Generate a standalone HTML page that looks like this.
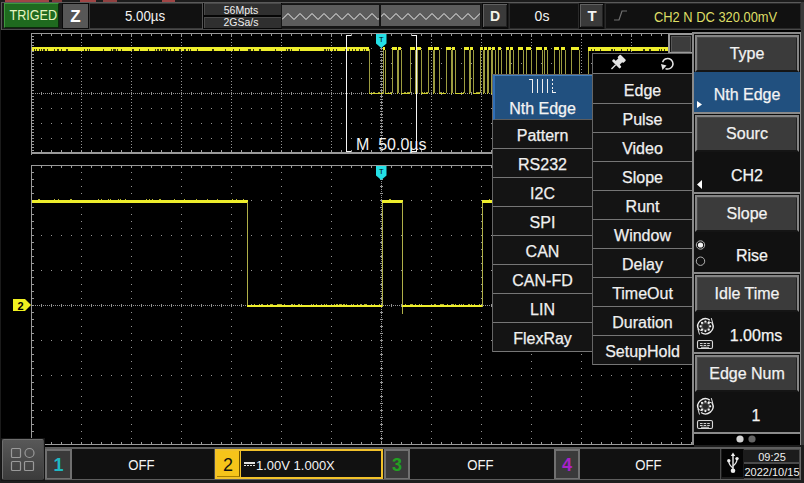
<!DOCTYPE html>
<html><head><meta charset="utf-8">
<style>
*{margin:0;padding:0;box-sizing:border-box;}
html,body{width:804px;height:483px;overflow:hidden;background:#000;font-family:"Liberation Sans", sans-serif;}
.a{position:absolute;}
.t{position:absolute;white-space:nowrap;line-height:1;}
.s{-webkit-text-stroke:0.25px currentColor;}
.btn{position:absolute;background:#3c3c3c;border:1px solid #1a1a1a;box-shadow:inset 1px 1px 0 #6a6a6a, inset -1px -1px 0 #2a2a2a;}
.mbtn{position:absolute;left:695px;width:104px;height:37px;background:#3b3b3b;border:2px solid #858585;border-bottom:2px solid #151515;box-shadow:inset 1px 1px 0 #4a4a4a, inset -1px 0 0 #222;color:#f2f2f2;font-size:16px;text-align:center;line-height:34px;-webkit-text-stroke:0.25px currentColor;}
.mval{position:absolute;left:694px;width:106px;height:40px;background:#111;color:#f2f2f2;font-size:16px;text-align:center;}
.row{position:absolute;height:29px;background:#141414;border-bottom:1px solid #767676;color:#f0f0f0;font-size:16px;text-align:center;line-height:32px;-webkit-text-stroke:0.25px currentColor;}
</style></head><body>
<!-- top bar -->
<div class="a" style="left:0;top:0;width:804px;height:30px;background:#1c1c1c;"></div>
<div class="a" style="left:5px;top:0;width:44px;height:2px;background:#a04545;"></div>
<div class="a" style="left:52px;top:0;width:10px;height:2px;background:#803a3a;"></div>
<div class="a" style="left:80px;top:0;width:16px;height:2px;background:#a04545;"></div>
<div class="a" style="left:103px;top:0;width:14px;height:2px;background:#904040;"></div>
<div class="a" style="left:162px;top:0;width:13px;height:2px;background:#a04545;"></div>
<div class="a" style="left:0;top:2px;width:804px;height:1px;background:#5a5a5a;"></div>
<div class="a" style="left:0;top:29px;width:804px;height:1px;background:#4a4a4a;"></div>
<div class="a" style="left:0;top:2px;width:1px;height:481px;background:#1a1a1a;"></div>
<div class="a" style="left:1px;top:2px;width:1px;height:28px;background:#5a5a5a;"></div>
<div class="a" style="left:801px;top:2px;width:3px;height:481px;background:#3a3a3a;"></div>
<!-- TRIGED -->
<div class="a" style="left:4px;top:3px;width:55px;height:25px;background:#1f6a1f;border-top:1px solid #3d9a3d;border-left:1px solid #3d9a3d;border-right:1px solid #0c2a0c;border-bottom:1px solid #0c2a0c;"></div>
<div class="t" style="left:7px;top:8px;width:50px;text-align:center;color:#e6f6c0;font-size:14px;transform:scaleX(0.9);">TRIGED</div>
<!-- Z -->
<div class="a" style="left:62px;top:3px;width:27px;height:26px;background:#575757;border:1px solid #0a0a0a;"></div>
<div class="t" style="left:62px;top:8px;width:27px;text-align:center;color:#fff;font-size:17px;font-weight:bold;">Z</div>
<!-- timebase -->
<div class="a" style="left:89px;top:3px;width:114px;height:26px;background:#111;border:1px solid #3a3a3a;"></div>
<div class="t" style="left:88px;top:9px;width:114px;text-align:center;color:#f4f4f4;font-size:14px;transform:scaleX(0.95);">5.00µs</div>
<!-- mpts -->
<div class="a" style="left:202px;top:3px;width:80px;height:26px;background:#050505;border-left:1px solid #555;"></div>
<div class="a" style="left:204px;top:3px;width:77px;height:12px;background:#2f2f2f;border-top:1px solid #4a4a4a;border-left:1px solid #4a4a4a;"></div>
<div class="a" style="left:204px;top:17px;width:77px;height:11px;background:#2f2f2f;border-top:1px solid #4a4a4a;border-left:1px solid #4a4a4a;"></div>
<div class="t" style="left:202.5px;top:5px;width:77px;text-align:center;color:#f0f0f0;font-size:10.5px;">56Mpts</div>
<div class="t" style="left:202.5px;top:17px;width:77px;text-align:center;color:#f0f0f0;font-size:10.5px;">2GSa/s</div>
<!-- zigzag -->
<div class="a" style="left:281px;top:4px;width:200px;height:24px;background:#141414;"></div>
<div class="a" style="left:282px;top:5px;width:97px;height:21px;background:#5c5c5c;"></div>
<div class="a" style="left:381px;top:5px;width:99px;height:21px;background:#5c5c5c;"></div>
<svg class="a" style="left:0;top:0" width="804" height="30">
<clipPath id="z1"><rect x="282" y="5" width="97" height="21"/></clipPath>
<clipPath id="z2"><rect x="381" y="5" width="99" height="21"/></clipPath>
<polyline clip-path="url(#z1)" points="282.0,19.5 288.0,13.5 294.0,19.5 300.0,13.5 306.0,19.5 312.0,13.5 318.0,19.5 324.0,13.5 330.0,19.5 336.0,13.5 342.0,19.5 348.0,13.5 354.0,19.5 360.0,13.5 366.0,19.5 372.0,13.5 378.0,19.5 384.0,13.5 390.0,19.5 396.0,13.5" fill="none" stroke="#f0f0f0" stroke-width="1"/>
<polyline clip-path="url(#z2)" points="282.0,19.5 288.0,13.5 294.0,19.5 300.0,13.5 306.0,19.5 312.0,13.5 318.0,19.5 324.0,13.5 330.0,19.5 336.0,13.5 342.0,19.5 348.0,13.5 354.0,19.5 360.0,13.5 366.0,19.5 372.0,13.5 378.0,19.5 384.0,13.5 390.0,19.5 396.0,13.5 402.0,19.5 408.0,13.5 414.0,19.5 420.0,13.5 426.0,19.5 432.0,13.5 438.0,19.5 444.0,13.5 450.0,19.5 456.0,13.5 462.0,19.5 468.0,13.5 474.0,19.5 480.0,13.5 486.0,19.5 492.0,13.5" fill="none" stroke="#f0f0f0" stroke-width="1"/>
<polyline points="614,20 619,20 622,11 627,11" fill="none" stroke="#6a6a6a" stroke-width="1.2"/>
</svg>
<!-- D -->
<div class="a" style="left:482px;top:3px;width:26px;height:26px;background:#0a0a0a;"></div>
<div class="a" style="left:483px;top:4px;width:24px;height:23px;background:#3a3a3a;box-shadow:inset 1px 1px 0 #606060, inset -1px -1px 0 #222;"></div>
<div class="t" style="left:482px;top:8.5px;width:26px;text-align:center;color:#f4f4e8;font-size:14px;font-weight:bold;">D</div>
<!-- 0s -->
<div class="a" style="left:509px;top:3px;width:70px;height:26px;background:#111;border:1px solid #2a2a2a;"></div>
<div class="t" style="left:507px;top:9px;width:70px;text-align:center;color:#f4f4f4;font-size:14px;">0s</div>
<!-- T -->
<div class="a" style="left:579px;top:3px;width:25px;height:26px;background:#0a0a0a;"></div>
<div class="a" style="left:580px;top:4px;width:23px;height:23px;background:#3a3a3a;box-shadow:inset 1px 1px 0 #606060, inset -1px -1px 0 #222;"></div>
<div class="t" style="left:579.5px;top:8px;width:25px;text-align:center;color:#f4f4f4;font-size:15px;font-weight:bold;">T</div>
<!-- trigger info -->
<div class="a" style="left:605px;top:3px;width:196px;height:26px;background:#111;border:1px solid #2a2a2a;"></div>
<svg class="a" style="left:0;top:0" width="804" height="30">
<polyline points="614,20 619,20 622,11 627,11" fill="none" stroke="#707070" stroke-width="1.2"/>
</svg>
<div class="t" style="left:654px;top:9.5px;color:#dede66;font-size:14px;transform:scaleX(0.92);transform-origin:0 0;">CH2 N DC 320.00mV</div>

<!-- grids & traces -->
<svg class="a" style="left:0;top:0" width="804" height="483" shape-rendering="crispEdges">
<rect x="31" y="33" width="1" height="122" fill="#9a9a9a"/>
<rect x="31" y="33" width="700" height="1" fill="#9a9a9a"/>
<rect x="31" y="152" width="700" height="2" fill="#9a9a9a"/>
<rect x="41" y="34" width="1" height="2" fill="#9a9a9a"/>
<rect x="41" y="150" width="1" height="2" fill="#9a9a9a"/>
<rect x="51" y="34" width="1" height="2" fill="#9a9a9a"/>
<rect x="51" y="150" width="1" height="2" fill="#9a9a9a"/>
<rect x="61" y="34" width="1" height="2" fill="#9a9a9a"/>
<rect x="61" y="150" width="1" height="2" fill="#9a9a9a"/>
<rect x="71" y="34" width="1" height="2" fill="#9a9a9a"/>
<rect x="71" y="150" width="1" height="2" fill="#9a9a9a"/>
<rect x="81" y="34" width="1" height="2" fill="#9a9a9a"/>
<rect x="81" y="150" width="1" height="2" fill="#9a9a9a"/>
<rect x="91" y="34" width="1" height="2" fill="#9a9a9a"/>
<rect x="91" y="150" width="1" height="2" fill="#9a9a9a"/>
<rect x="101" y="34" width="1" height="2" fill="#9a9a9a"/>
<rect x="101" y="150" width="1" height="2" fill="#9a9a9a"/>
<rect x="111" y="34" width="1" height="2" fill="#9a9a9a"/>
<rect x="111" y="150" width="1" height="2" fill="#9a9a9a"/>
<rect x="121" y="34" width="1" height="2" fill="#9a9a9a"/>
<rect x="121" y="150" width="1" height="2" fill="#9a9a9a"/>
<rect x="131" y="34" width="1" height="2" fill="#9a9a9a"/>
<rect x="131" y="150" width="1" height="2" fill="#9a9a9a"/>
<rect x="141" y="34" width="1" height="2" fill="#9a9a9a"/>
<rect x="141" y="150" width="1" height="2" fill="#9a9a9a"/>
<rect x="151" y="34" width="1" height="2" fill="#9a9a9a"/>
<rect x="151" y="150" width="1" height="2" fill="#9a9a9a"/>
<rect x="161" y="34" width="1" height="2" fill="#9a9a9a"/>
<rect x="161" y="150" width="1" height="2" fill="#9a9a9a"/>
<rect x="171" y="34" width="1" height="2" fill="#9a9a9a"/>
<rect x="171" y="150" width="1" height="2" fill="#9a9a9a"/>
<rect x="181" y="34" width="1" height="2" fill="#9a9a9a"/>
<rect x="181" y="150" width="1" height="2" fill="#9a9a9a"/>
<rect x="191" y="34" width="1" height="2" fill="#9a9a9a"/>
<rect x="191" y="150" width="1" height="2" fill="#9a9a9a"/>
<rect x="201" y="34" width="1" height="2" fill="#9a9a9a"/>
<rect x="201" y="150" width="1" height="2" fill="#9a9a9a"/>
<rect x="211" y="34" width="1" height="2" fill="#9a9a9a"/>
<rect x="211" y="150" width="1" height="2" fill="#9a9a9a"/>
<rect x="221" y="34" width="1" height="2" fill="#9a9a9a"/>
<rect x="221" y="150" width="1" height="2" fill="#9a9a9a"/>
<rect x="231" y="34" width="1" height="2" fill="#9a9a9a"/>
<rect x="231" y="150" width="1" height="2" fill="#9a9a9a"/>
<rect x="241" y="34" width="1" height="2" fill="#9a9a9a"/>
<rect x="241" y="150" width="1" height="2" fill="#9a9a9a"/>
<rect x="251" y="34" width="1" height="2" fill="#9a9a9a"/>
<rect x="251" y="150" width="1" height="2" fill="#9a9a9a"/>
<rect x="261" y="34" width="1" height="2" fill="#9a9a9a"/>
<rect x="261" y="150" width="1" height="2" fill="#9a9a9a"/>
<rect x="271" y="34" width="1" height="2" fill="#9a9a9a"/>
<rect x="271" y="150" width="1" height="2" fill="#9a9a9a"/>
<rect x="281" y="34" width="1" height="2" fill="#9a9a9a"/>
<rect x="281" y="150" width="1" height="2" fill="#9a9a9a"/>
<rect x="291" y="34" width="1" height="2" fill="#9a9a9a"/>
<rect x="291" y="150" width="1" height="2" fill="#9a9a9a"/>
<rect x="301" y="34" width="1" height="2" fill="#9a9a9a"/>
<rect x="301" y="150" width="1" height="2" fill="#9a9a9a"/>
<rect x="311" y="34" width="1" height="2" fill="#9a9a9a"/>
<rect x="311" y="150" width="1" height="2" fill="#9a9a9a"/>
<rect x="321" y="34" width="1" height="2" fill="#9a9a9a"/>
<rect x="321" y="150" width="1" height="2" fill="#9a9a9a"/>
<rect x="331" y="34" width="1" height="2" fill="#9a9a9a"/>
<rect x="331" y="150" width="1" height="2" fill="#9a9a9a"/>
<rect x="341" y="34" width="1" height="2" fill="#9a9a9a"/>
<rect x="341" y="150" width="1" height="2" fill="#9a9a9a"/>
<rect x="351" y="34" width="1" height="2" fill="#9a9a9a"/>
<rect x="351" y="150" width="1" height="2" fill="#9a9a9a"/>
<rect x="361" y="34" width="1" height="2" fill="#9a9a9a"/>
<rect x="361" y="150" width="1" height="2" fill="#9a9a9a"/>
<rect x="371" y="34" width="1" height="2" fill="#9a9a9a"/>
<rect x="371" y="150" width="1" height="2" fill="#9a9a9a"/>
<rect x="381" y="34" width="1" height="2" fill="#9a9a9a"/>
<rect x="381" y="150" width="1" height="2" fill="#9a9a9a"/>
<rect x="391" y="34" width="1" height="2" fill="#9a9a9a"/>
<rect x="391" y="150" width="1" height="2" fill="#9a9a9a"/>
<rect x="401" y="34" width="1" height="2" fill="#9a9a9a"/>
<rect x="401" y="150" width="1" height="2" fill="#9a9a9a"/>
<rect x="411" y="34" width="1" height="2" fill="#9a9a9a"/>
<rect x="411" y="150" width="1" height="2" fill="#9a9a9a"/>
<rect x="421" y="34" width="1" height="2" fill="#9a9a9a"/>
<rect x="421" y="150" width="1" height="2" fill="#9a9a9a"/>
<rect x="431" y="34" width="1" height="2" fill="#9a9a9a"/>
<rect x="431" y="150" width="1" height="2" fill="#9a9a9a"/>
<rect x="441" y="34" width="1" height="2" fill="#9a9a9a"/>
<rect x="441" y="150" width="1" height="2" fill="#9a9a9a"/>
<rect x="451" y="34" width="1" height="2" fill="#9a9a9a"/>
<rect x="451" y="150" width="1" height="2" fill="#9a9a9a"/>
<rect x="461" y="34" width="1" height="2" fill="#9a9a9a"/>
<rect x="461" y="150" width="1" height="2" fill="#9a9a9a"/>
<rect x="471" y="34" width="1" height="2" fill="#9a9a9a"/>
<rect x="471" y="150" width="1" height="2" fill="#9a9a9a"/>
<rect x="481" y="34" width="1" height="2" fill="#9a9a9a"/>
<rect x="481" y="150" width="1" height="2" fill="#9a9a9a"/>
<rect x="491" y="34" width="1" height="2" fill="#9a9a9a"/>
<rect x="491" y="150" width="1" height="2" fill="#9a9a9a"/>
<rect x="501" y="34" width="1" height="2" fill="#9a9a9a"/>
<rect x="501" y="150" width="1" height="2" fill="#9a9a9a"/>
<rect x="511" y="34" width="1" height="2" fill="#9a9a9a"/>
<rect x="511" y="150" width="1" height="2" fill="#9a9a9a"/>
<rect x="521" y="34" width="1" height="2" fill="#9a9a9a"/>
<rect x="521" y="150" width="1" height="2" fill="#9a9a9a"/>
<rect x="531" y="34" width="1" height="2" fill="#9a9a9a"/>
<rect x="531" y="150" width="1" height="2" fill="#9a9a9a"/>
<rect x="541" y="34" width="1" height="2" fill="#9a9a9a"/>
<rect x="541" y="150" width="1" height="2" fill="#9a9a9a"/>
<rect x="551" y="34" width="1" height="2" fill="#9a9a9a"/>
<rect x="551" y="150" width="1" height="2" fill="#9a9a9a"/>
<rect x="561" y="34" width="1" height="2" fill="#9a9a9a"/>
<rect x="561" y="150" width="1" height="2" fill="#9a9a9a"/>
<rect x="571" y="34" width="1" height="2" fill="#9a9a9a"/>
<rect x="571" y="150" width="1" height="2" fill="#9a9a9a"/>
<rect x="581" y="34" width="1" height="2" fill="#9a9a9a"/>
<rect x="581" y="150" width="1" height="2" fill="#9a9a9a"/>
<rect x="591" y="34" width="1" height="2" fill="#9a9a9a"/>
<rect x="591" y="150" width="1" height="2" fill="#9a9a9a"/>
<rect x="601" y="34" width="1" height="2" fill="#9a9a9a"/>
<rect x="601" y="150" width="1" height="2" fill="#9a9a9a"/>
<rect x="611" y="34" width="1" height="2" fill="#9a9a9a"/>
<rect x="611" y="150" width="1" height="2" fill="#9a9a9a"/>
<rect x="621" y="34" width="1" height="2" fill="#9a9a9a"/>
<rect x="621" y="150" width="1" height="2" fill="#9a9a9a"/>
<rect x="631" y="34" width="1" height="2" fill="#9a9a9a"/>
<rect x="631" y="150" width="1" height="2" fill="#9a9a9a"/>
<rect x="641" y="34" width="1" height="2" fill="#9a9a9a"/>
<rect x="641" y="150" width="1" height="2" fill="#9a9a9a"/>
<rect x="651" y="34" width="1" height="2" fill="#9a9a9a"/>
<rect x="651" y="150" width="1" height="2" fill="#9a9a9a"/>
<rect x="661" y="34" width="1" height="2" fill="#9a9a9a"/>
<rect x="661" y="150" width="1" height="2" fill="#9a9a9a"/>
<rect x="32" y="36" width="2" height="1" fill="#9a9a9a"/>
<rect x="32" y="39" width="2" height="1" fill="#9a9a9a"/>
<rect x="32" y="42" width="2" height="1" fill="#9a9a9a"/>
<rect x="32" y="45" width="2" height="1" fill="#9a9a9a"/>
<rect x="32" y="48" width="2" height="1" fill="#9a9a9a"/>
<rect x="32" y="51" width="2" height="1" fill="#9a9a9a"/>
<rect x="32" y="54" width="2" height="1" fill="#9a9a9a"/>
<rect x="32" y="57" width="2" height="1" fill="#9a9a9a"/>
<rect x="32" y="60" width="2" height="1" fill="#9a9a9a"/>
<rect x="32" y="63" width="2" height="1" fill="#9a9a9a"/>
<rect x="32" y="66" width="2" height="1" fill="#9a9a9a"/>
<rect x="32" y="69" width="2" height="1" fill="#9a9a9a"/>
<rect x="32" y="72" width="2" height="1" fill="#9a9a9a"/>
<rect x="32" y="75" width="2" height="1" fill="#9a9a9a"/>
<rect x="32" y="78" width="2" height="1" fill="#9a9a9a"/>
<rect x="32" y="81" width="2" height="1" fill="#9a9a9a"/>
<rect x="32" y="84" width="2" height="1" fill="#9a9a9a"/>
<rect x="32" y="87" width="2" height="1" fill="#9a9a9a"/>
<rect x="32" y="90" width="2" height="1" fill="#9a9a9a"/>
<rect x="32" y="93" width="2" height="1" fill="#9a9a9a"/>
<rect x="32" y="96" width="2" height="1" fill="#9a9a9a"/>
<rect x="32" y="99" width="2" height="1" fill="#9a9a9a"/>
<rect x="32" y="102" width="2" height="1" fill="#9a9a9a"/>
<rect x="32" y="105" width="2" height="1" fill="#9a9a9a"/>
<rect x="32" y="108" width="2" height="1" fill="#9a9a9a"/>
<rect x="32" y="111" width="2" height="1" fill="#9a9a9a"/>
<rect x="32" y="114" width="2" height="1" fill="#9a9a9a"/>
<rect x="32" y="117" width="2" height="1" fill="#9a9a9a"/>
<rect x="32" y="120" width="2" height="1" fill="#9a9a9a"/>
<rect x="32" y="123" width="2" height="1" fill="#9a9a9a"/>
<rect x="32" y="126" width="2" height="1" fill="#9a9a9a"/>
<rect x="32" y="129" width="2" height="1" fill="#9a9a9a"/>
<rect x="32" y="132" width="2" height="1" fill="#9a9a9a"/>
<rect x="32" y="135" width="2" height="1" fill="#9a9a9a"/>
<rect x="32" y="138" width="2" height="1" fill="#9a9a9a"/>
<rect x="32" y="141" width="2" height="1" fill="#9a9a9a"/>
<rect x="32" y="144" width="2" height="1" fill="#9a9a9a"/>
<rect x="32" y="147" width="2" height="1" fill="#9a9a9a"/>
<rect x="32" y="150" width="2" height="1" fill="#9a9a9a"/>
<rect x="41" y="48" width="1" height="1" fill="#959595"/>
<rect x="51" y="48" width="1" height="1" fill="#959595"/>
<rect x="61" y="48" width="1" height="1" fill="#959595"/>
<rect x="71" y="48" width="1" height="1" fill="#959595"/>
<rect x="81" y="48" width="1" height="1" fill="#959595"/>
<rect x="91" y="48" width="1" height="1" fill="#959595"/>
<rect x="101" y="48" width="1" height="1" fill="#959595"/>
<rect x="111" y="48" width="1" height="1" fill="#959595"/>
<rect x="121" y="48" width="1" height="1" fill="#959595"/>
<rect x="131" y="48" width="1" height="1" fill="#959595"/>
<rect x="141" y="48" width="1" height="1" fill="#959595"/>
<rect x="151" y="48" width="1" height="1" fill="#959595"/>
<rect x="161" y="48" width="1" height="1" fill="#959595"/>
<rect x="171" y="48" width="1" height="1" fill="#959595"/>
<rect x="181" y="48" width="1" height="1" fill="#959595"/>
<rect x="191" y="48" width="1" height="1" fill="#959595"/>
<rect x="201" y="48" width="1" height="1" fill="#959595"/>
<rect x="211" y="48" width="1" height="1" fill="#959595"/>
<rect x="221" y="48" width="1" height="1" fill="#959595"/>
<rect x="231" y="48" width="1" height="1" fill="#959595"/>
<rect x="241" y="48" width="1" height="1" fill="#959595"/>
<rect x="251" y="48" width="1" height="1" fill="#959595"/>
<rect x="261" y="48" width="1" height="1" fill="#959595"/>
<rect x="271" y="48" width="1" height="1" fill="#959595"/>
<rect x="281" y="48" width="1" height="1" fill="#959595"/>
<rect x="291" y="48" width="1" height="1" fill="#959595"/>
<rect x="301" y="48" width="1" height="1" fill="#959595"/>
<rect x="311" y="48" width="1" height="1" fill="#959595"/>
<rect x="321" y="48" width="1" height="1" fill="#959595"/>
<rect x="331" y="48" width="1" height="1" fill="#959595"/>
<rect x="341" y="48" width="1" height="1" fill="#959595"/>
<rect x="351" y="48" width="1" height="1" fill="#959595"/>
<rect x="361" y="48" width="1" height="1" fill="#959595"/>
<rect x="371" y="48" width="1" height="1" fill="#959595"/>
<rect x="381" y="48" width="1" height="1" fill="#959595"/>
<rect x="391" y="48" width="1" height="1" fill="#959595"/>
<rect x="401" y="48" width="1" height="1" fill="#959595"/>
<rect x="411" y="48" width="1" height="1" fill="#959595"/>
<rect x="421" y="48" width="1" height="1" fill="#959595"/>
<rect x="431" y="48" width="1" height="1" fill="#959595"/>
<rect x="441" y="48" width="1" height="1" fill="#959595"/>
<rect x="451" y="48" width="1" height="1" fill="#959595"/>
<rect x="461" y="48" width="1" height="1" fill="#959595"/>
<rect x="471" y="48" width="1" height="1" fill="#959595"/>
<rect x="481" y="48" width="1" height="1" fill="#959595"/>
<rect x="491" y="48" width="1" height="1" fill="#959595"/>
<rect x="501" y="48" width="1" height="1" fill="#959595"/>
<rect x="511" y="48" width="1" height="1" fill="#959595"/>
<rect x="521" y="48" width="1" height="1" fill="#959595"/>
<rect x="531" y="48" width="1" height="1" fill="#959595"/>
<rect x="541" y="48" width="1" height="1" fill="#959595"/>
<rect x="551" y="48" width="1" height="1" fill="#959595"/>
<rect x="561" y="48" width="1" height="1" fill="#959595"/>
<rect x="571" y="48" width="1" height="1" fill="#959595"/>
<rect x="581" y="48" width="1" height="1" fill="#959595"/>
<rect x="591" y="48" width="1" height="1" fill="#959595"/>
<rect x="601" y="48" width="1" height="1" fill="#959595"/>
<rect x="611" y="48" width="1" height="1" fill="#959595"/>
<rect x="621" y="48" width="1" height="1" fill="#959595"/>
<rect x="631" y="48" width="1" height="1" fill="#959595"/>
<rect x="641" y="48" width="1" height="1" fill="#959595"/>
<rect x="651" y="48" width="1" height="1" fill="#959595"/>
<rect x="661" y="48" width="1" height="1" fill="#959595"/>
<rect x="41" y="63" width="1" height="1" fill="#959595"/>
<rect x="51" y="63" width="1" height="1" fill="#959595"/>
<rect x="61" y="63" width="1" height="1" fill="#959595"/>
<rect x="71" y="63" width="1" height="1" fill="#959595"/>
<rect x="81" y="63" width="1" height="1" fill="#959595"/>
<rect x="91" y="63" width="1" height="1" fill="#959595"/>
<rect x="101" y="63" width="1" height="1" fill="#959595"/>
<rect x="111" y="63" width="1" height="1" fill="#959595"/>
<rect x="121" y="63" width="1" height="1" fill="#959595"/>
<rect x="131" y="63" width="1" height="1" fill="#959595"/>
<rect x="141" y="63" width="1" height="1" fill="#959595"/>
<rect x="151" y="63" width="1" height="1" fill="#959595"/>
<rect x="161" y="63" width="1" height="1" fill="#959595"/>
<rect x="171" y="63" width="1" height="1" fill="#959595"/>
<rect x="181" y="63" width="1" height="1" fill="#959595"/>
<rect x="191" y="63" width="1" height="1" fill="#959595"/>
<rect x="201" y="63" width="1" height="1" fill="#959595"/>
<rect x="211" y="63" width="1" height="1" fill="#959595"/>
<rect x="221" y="63" width="1" height="1" fill="#959595"/>
<rect x="231" y="63" width="1" height="1" fill="#959595"/>
<rect x="241" y="63" width="1" height="1" fill="#959595"/>
<rect x="251" y="63" width="1" height="1" fill="#959595"/>
<rect x="261" y="63" width="1" height="1" fill="#959595"/>
<rect x="271" y="63" width="1" height="1" fill="#959595"/>
<rect x="281" y="63" width="1" height="1" fill="#959595"/>
<rect x="291" y="63" width="1" height="1" fill="#959595"/>
<rect x="301" y="63" width="1" height="1" fill="#959595"/>
<rect x="311" y="63" width="1" height="1" fill="#959595"/>
<rect x="321" y="63" width="1" height="1" fill="#959595"/>
<rect x="331" y="63" width="1" height="1" fill="#959595"/>
<rect x="341" y="63" width="1" height="1" fill="#959595"/>
<rect x="351" y="63" width="1" height="1" fill="#959595"/>
<rect x="361" y="63" width="1" height="1" fill="#959595"/>
<rect x="371" y="63" width="1" height="1" fill="#959595"/>
<rect x="381" y="63" width="1" height="1" fill="#959595"/>
<rect x="391" y="63" width="1" height="1" fill="#959595"/>
<rect x="401" y="63" width="1" height="1" fill="#959595"/>
<rect x="411" y="63" width="1" height="1" fill="#959595"/>
<rect x="421" y="63" width="1" height="1" fill="#959595"/>
<rect x="431" y="63" width="1" height="1" fill="#959595"/>
<rect x="441" y="63" width="1" height="1" fill="#959595"/>
<rect x="451" y="63" width="1" height="1" fill="#959595"/>
<rect x="461" y="63" width="1" height="1" fill="#959595"/>
<rect x="471" y="63" width="1" height="1" fill="#959595"/>
<rect x="481" y="63" width="1" height="1" fill="#959595"/>
<rect x="491" y="63" width="1" height="1" fill="#959595"/>
<rect x="501" y="63" width="1" height="1" fill="#959595"/>
<rect x="511" y="63" width="1" height="1" fill="#959595"/>
<rect x="521" y="63" width="1" height="1" fill="#959595"/>
<rect x="531" y="63" width="1" height="1" fill="#959595"/>
<rect x="541" y="63" width="1" height="1" fill="#959595"/>
<rect x="551" y="63" width="1" height="1" fill="#959595"/>
<rect x="561" y="63" width="1" height="1" fill="#959595"/>
<rect x="571" y="63" width="1" height="1" fill="#959595"/>
<rect x="581" y="63" width="1" height="1" fill="#959595"/>
<rect x="591" y="63" width="1" height="1" fill="#959595"/>
<rect x="601" y="63" width="1" height="1" fill="#959595"/>
<rect x="611" y="63" width="1" height="1" fill="#959595"/>
<rect x="621" y="63" width="1" height="1" fill="#959595"/>
<rect x="631" y="63" width="1" height="1" fill="#959595"/>
<rect x="641" y="63" width="1" height="1" fill="#959595"/>
<rect x="651" y="63" width="1" height="1" fill="#959595"/>
<rect x="661" y="63" width="1" height="1" fill="#959595"/>
<rect x="41" y="78" width="1" height="1" fill="#959595"/>
<rect x="51" y="78" width="1" height="1" fill="#959595"/>
<rect x="61" y="78" width="1" height="1" fill="#959595"/>
<rect x="71" y="78" width="1" height="1" fill="#959595"/>
<rect x="81" y="78" width="1" height="1" fill="#959595"/>
<rect x="91" y="78" width="1" height="1" fill="#959595"/>
<rect x="101" y="78" width="1" height="1" fill="#959595"/>
<rect x="111" y="78" width="1" height="1" fill="#959595"/>
<rect x="121" y="78" width="1" height="1" fill="#959595"/>
<rect x="131" y="78" width="1" height="1" fill="#959595"/>
<rect x="141" y="78" width="1" height="1" fill="#959595"/>
<rect x="151" y="78" width="1" height="1" fill="#959595"/>
<rect x="161" y="78" width="1" height="1" fill="#959595"/>
<rect x="171" y="78" width="1" height="1" fill="#959595"/>
<rect x="181" y="78" width="1" height="1" fill="#959595"/>
<rect x="191" y="78" width="1" height="1" fill="#959595"/>
<rect x="201" y="78" width="1" height="1" fill="#959595"/>
<rect x="211" y="78" width="1" height="1" fill="#959595"/>
<rect x="221" y="78" width="1" height="1" fill="#959595"/>
<rect x="231" y="78" width="1" height="1" fill="#959595"/>
<rect x="241" y="78" width="1" height="1" fill="#959595"/>
<rect x="251" y="78" width="1" height="1" fill="#959595"/>
<rect x="261" y="78" width="1" height="1" fill="#959595"/>
<rect x="271" y="78" width="1" height="1" fill="#959595"/>
<rect x="281" y="78" width="1" height="1" fill="#959595"/>
<rect x="291" y="78" width="1" height="1" fill="#959595"/>
<rect x="301" y="78" width="1" height="1" fill="#959595"/>
<rect x="311" y="78" width="1" height="1" fill="#959595"/>
<rect x="321" y="78" width="1" height="1" fill="#959595"/>
<rect x="331" y="78" width="1" height="1" fill="#959595"/>
<rect x="341" y="78" width="1" height="1" fill="#959595"/>
<rect x="351" y="78" width="1" height="1" fill="#959595"/>
<rect x="361" y="78" width="1" height="1" fill="#959595"/>
<rect x="371" y="78" width="1" height="1" fill="#959595"/>
<rect x="381" y="78" width="1" height="1" fill="#959595"/>
<rect x="391" y="78" width="1" height="1" fill="#959595"/>
<rect x="401" y="78" width="1" height="1" fill="#959595"/>
<rect x="411" y="78" width="1" height="1" fill="#959595"/>
<rect x="421" y="78" width="1" height="1" fill="#959595"/>
<rect x="431" y="78" width="1" height="1" fill="#959595"/>
<rect x="441" y="78" width="1" height="1" fill="#959595"/>
<rect x="451" y="78" width="1" height="1" fill="#959595"/>
<rect x="461" y="78" width="1" height="1" fill="#959595"/>
<rect x="471" y="78" width="1" height="1" fill="#959595"/>
<rect x="481" y="78" width="1" height="1" fill="#959595"/>
<rect x="491" y="78" width="1" height="1" fill="#959595"/>
<rect x="501" y="78" width="1" height="1" fill="#959595"/>
<rect x="511" y="78" width="1" height="1" fill="#959595"/>
<rect x="521" y="78" width="1" height="1" fill="#959595"/>
<rect x="531" y="78" width="1" height="1" fill="#959595"/>
<rect x="541" y="78" width="1" height="1" fill="#959595"/>
<rect x="551" y="78" width="1" height="1" fill="#959595"/>
<rect x="561" y="78" width="1" height="1" fill="#959595"/>
<rect x="571" y="78" width="1" height="1" fill="#959595"/>
<rect x="581" y="78" width="1" height="1" fill="#959595"/>
<rect x="591" y="78" width="1" height="1" fill="#959595"/>
<rect x="601" y="78" width="1" height="1" fill="#959595"/>
<rect x="611" y="78" width="1" height="1" fill="#959595"/>
<rect x="621" y="78" width="1" height="1" fill="#959595"/>
<rect x="631" y="78" width="1" height="1" fill="#959595"/>
<rect x="641" y="78" width="1" height="1" fill="#959595"/>
<rect x="651" y="78" width="1" height="1" fill="#959595"/>
<rect x="661" y="78" width="1" height="1" fill="#959595"/>
<rect x="41" y="108" width="1" height="1" fill="#959595"/>
<rect x="51" y="108" width="1" height="1" fill="#959595"/>
<rect x="61" y="108" width="1" height="1" fill="#959595"/>
<rect x="71" y="108" width="1" height="1" fill="#959595"/>
<rect x="81" y="108" width="1" height="1" fill="#959595"/>
<rect x="91" y="108" width="1" height="1" fill="#959595"/>
<rect x="101" y="108" width="1" height="1" fill="#959595"/>
<rect x="111" y="108" width="1" height="1" fill="#959595"/>
<rect x="121" y="108" width="1" height="1" fill="#959595"/>
<rect x="131" y="108" width="1" height="1" fill="#959595"/>
<rect x="141" y="108" width="1" height="1" fill="#959595"/>
<rect x="151" y="108" width="1" height="1" fill="#959595"/>
<rect x="161" y="108" width="1" height="1" fill="#959595"/>
<rect x="171" y="108" width="1" height="1" fill="#959595"/>
<rect x="181" y="108" width="1" height="1" fill="#959595"/>
<rect x="191" y="108" width="1" height="1" fill="#959595"/>
<rect x="201" y="108" width="1" height="1" fill="#959595"/>
<rect x="211" y="108" width="1" height="1" fill="#959595"/>
<rect x="221" y="108" width="1" height="1" fill="#959595"/>
<rect x="231" y="108" width="1" height="1" fill="#959595"/>
<rect x="241" y="108" width="1" height="1" fill="#959595"/>
<rect x="251" y="108" width="1" height="1" fill="#959595"/>
<rect x="261" y="108" width="1" height="1" fill="#959595"/>
<rect x="271" y="108" width="1" height="1" fill="#959595"/>
<rect x="281" y="108" width="1" height="1" fill="#959595"/>
<rect x="291" y="108" width="1" height="1" fill="#959595"/>
<rect x="301" y="108" width="1" height="1" fill="#959595"/>
<rect x="311" y="108" width="1" height="1" fill="#959595"/>
<rect x="321" y="108" width="1" height="1" fill="#959595"/>
<rect x="331" y="108" width="1" height="1" fill="#959595"/>
<rect x="341" y="108" width="1" height="1" fill="#959595"/>
<rect x="351" y="108" width="1" height="1" fill="#959595"/>
<rect x="361" y="108" width="1" height="1" fill="#959595"/>
<rect x="371" y="108" width="1" height="1" fill="#959595"/>
<rect x="381" y="108" width="1" height="1" fill="#959595"/>
<rect x="391" y="108" width="1" height="1" fill="#959595"/>
<rect x="401" y="108" width="1" height="1" fill="#959595"/>
<rect x="411" y="108" width="1" height="1" fill="#959595"/>
<rect x="421" y="108" width="1" height="1" fill="#959595"/>
<rect x="431" y="108" width="1" height="1" fill="#959595"/>
<rect x="441" y="108" width="1" height="1" fill="#959595"/>
<rect x="451" y="108" width="1" height="1" fill="#959595"/>
<rect x="461" y="108" width="1" height="1" fill="#959595"/>
<rect x="471" y="108" width="1" height="1" fill="#959595"/>
<rect x="481" y="108" width="1" height="1" fill="#959595"/>
<rect x="491" y="108" width="1" height="1" fill="#959595"/>
<rect x="501" y="108" width="1" height="1" fill="#959595"/>
<rect x="511" y="108" width="1" height="1" fill="#959595"/>
<rect x="521" y="108" width="1" height="1" fill="#959595"/>
<rect x="531" y="108" width="1" height="1" fill="#959595"/>
<rect x="541" y="108" width="1" height="1" fill="#959595"/>
<rect x="551" y="108" width="1" height="1" fill="#959595"/>
<rect x="561" y="108" width="1" height="1" fill="#959595"/>
<rect x="571" y="108" width="1" height="1" fill="#959595"/>
<rect x="581" y="108" width="1" height="1" fill="#959595"/>
<rect x="591" y="108" width="1" height="1" fill="#959595"/>
<rect x="601" y="108" width="1" height="1" fill="#959595"/>
<rect x="611" y="108" width="1" height="1" fill="#959595"/>
<rect x="621" y="108" width="1" height="1" fill="#959595"/>
<rect x="631" y="108" width="1" height="1" fill="#959595"/>
<rect x="641" y="108" width="1" height="1" fill="#959595"/>
<rect x="651" y="108" width="1" height="1" fill="#959595"/>
<rect x="661" y="108" width="1" height="1" fill="#959595"/>
<rect x="41" y="123" width="1" height="1" fill="#959595"/>
<rect x="51" y="123" width="1" height="1" fill="#959595"/>
<rect x="61" y="123" width="1" height="1" fill="#959595"/>
<rect x="71" y="123" width="1" height="1" fill="#959595"/>
<rect x="81" y="123" width="1" height="1" fill="#959595"/>
<rect x="91" y="123" width="1" height="1" fill="#959595"/>
<rect x="101" y="123" width="1" height="1" fill="#959595"/>
<rect x="111" y="123" width="1" height="1" fill="#959595"/>
<rect x="121" y="123" width="1" height="1" fill="#959595"/>
<rect x="131" y="123" width="1" height="1" fill="#959595"/>
<rect x="141" y="123" width="1" height="1" fill="#959595"/>
<rect x="151" y="123" width="1" height="1" fill="#959595"/>
<rect x="161" y="123" width="1" height="1" fill="#959595"/>
<rect x="171" y="123" width="1" height="1" fill="#959595"/>
<rect x="181" y="123" width="1" height="1" fill="#959595"/>
<rect x="191" y="123" width="1" height="1" fill="#959595"/>
<rect x="201" y="123" width="1" height="1" fill="#959595"/>
<rect x="211" y="123" width="1" height="1" fill="#959595"/>
<rect x="221" y="123" width="1" height="1" fill="#959595"/>
<rect x="231" y="123" width="1" height="1" fill="#959595"/>
<rect x="241" y="123" width="1" height="1" fill="#959595"/>
<rect x="251" y="123" width="1" height="1" fill="#959595"/>
<rect x="261" y="123" width="1" height="1" fill="#959595"/>
<rect x="271" y="123" width="1" height="1" fill="#959595"/>
<rect x="281" y="123" width="1" height="1" fill="#959595"/>
<rect x="291" y="123" width="1" height="1" fill="#959595"/>
<rect x="301" y="123" width="1" height="1" fill="#959595"/>
<rect x="311" y="123" width="1" height="1" fill="#959595"/>
<rect x="321" y="123" width="1" height="1" fill="#959595"/>
<rect x="331" y="123" width="1" height="1" fill="#959595"/>
<rect x="341" y="123" width="1" height="1" fill="#959595"/>
<rect x="351" y="123" width="1" height="1" fill="#959595"/>
<rect x="361" y="123" width="1" height="1" fill="#959595"/>
<rect x="371" y="123" width="1" height="1" fill="#959595"/>
<rect x="381" y="123" width="1" height="1" fill="#959595"/>
<rect x="391" y="123" width="1" height="1" fill="#959595"/>
<rect x="401" y="123" width="1" height="1" fill="#959595"/>
<rect x="411" y="123" width="1" height="1" fill="#959595"/>
<rect x="421" y="123" width="1" height="1" fill="#959595"/>
<rect x="431" y="123" width="1" height="1" fill="#959595"/>
<rect x="441" y="123" width="1" height="1" fill="#959595"/>
<rect x="451" y="123" width="1" height="1" fill="#959595"/>
<rect x="461" y="123" width="1" height="1" fill="#959595"/>
<rect x="471" y="123" width="1" height="1" fill="#959595"/>
<rect x="481" y="123" width="1" height="1" fill="#959595"/>
<rect x="491" y="123" width="1" height="1" fill="#959595"/>
<rect x="501" y="123" width="1" height="1" fill="#959595"/>
<rect x="511" y="123" width="1" height="1" fill="#959595"/>
<rect x="521" y="123" width="1" height="1" fill="#959595"/>
<rect x="531" y="123" width="1" height="1" fill="#959595"/>
<rect x="541" y="123" width="1" height="1" fill="#959595"/>
<rect x="551" y="123" width="1" height="1" fill="#959595"/>
<rect x="561" y="123" width="1" height="1" fill="#959595"/>
<rect x="571" y="123" width="1" height="1" fill="#959595"/>
<rect x="581" y="123" width="1" height="1" fill="#959595"/>
<rect x="591" y="123" width="1" height="1" fill="#959595"/>
<rect x="601" y="123" width="1" height="1" fill="#959595"/>
<rect x="611" y="123" width="1" height="1" fill="#959595"/>
<rect x="621" y="123" width="1" height="1" fill="#959595"/>
<rect x="631" y="123" width="1" height="1" fill="#959595"/>
<rect x="641" y="123" width="1" height="1" fill="#959595"/>
<rect x="651" y="123" width="1" height="1" fill="#959595"/>
<rect x="661" y="123" width="1" height="1" fill="#959595"/>
<rect x="41" y="138" width="1" height="1" fill="#959595"/>
<rect x="51" y="138" width="1" height="1" fill="#959595"/>
<rect x="61" y="138" width="1" height="1" fill="#959595"/>
<rect x="71" y="138" width="1" height="1" fill="#959595"/>
<rect x="81" y="138" width="1" height="1" fill="#959595"/>
<rect x="91" y="138" width="1" height="1" fill="#959595"/>
<rect x="101" y="138" width="1" height="1" fill="#959595"/>
<rect x="111" y="138" width="1" height="1" fill="#959595"/>
<rect x="121" y="138" width="1" height="1" fill="#959595"/>
<rect x="131" y="138" width="1" height="1" fill="#959595"/>
<rect x="141" y="138" width="1" height="1" fill="#959595"/>
<rect x="151" y="138" width="1" height="1" fill="#959595"/>
<rect x="161" y="138" width="1" height="1" fill="#959595"/>
<rect x="171" y="138" width="1" height="1" fill="#959595"/>
<rect x="181" y="138" width="1" height="1" fill="#959595"/>
<rect x="191" y="138" width="1" height="1" fill="#959595"/>
<rect x="201" y="138" width="1" height="1" fill="#959595"/>
<rect x="211" y="138" width="1" height="1" fill="#959595"/>
<rect x="221" y="138" width="1" height="1" fill="#959595"/>
<rect x="231" y="138" width="1" height="1" fill="#959595"/>
<rect x="241" y="138" width="1" height="1" fill="#959595"/>
<rect x="251" y="138" width="1" height="1" fill="#959595"/>
<rect x="261" y="138" width="1" height="1" fill="#959595"/>
<rect x="271" y="138" width="1" height="1" fill="#959595"/>
<rect x="281" y="138" width="1" height="1" fill="#959595"/>
<rect x="291" y="138" width="1" height="1" fill="#959595"/>
<rect x="301" y="138" width="1" height="1" fill="#959595"/>
<rect x="311" y="138" width="1" height="1" fill="#959595"/>
<rect x="321" y="138" width="1" height="1" fill="#959595"/>
<rect x="331" y="138" width="1" height="1" fill="#959595"/>
<rect x="341" y="138" width="1" height="1" fill="#959595"/>
<rect x="351" y="138" width="1" height="1" fill="#959595"/>
<rect x="361" y="138" width="1" height="1" fill="#959595"/>
<rect x="371" y="138" width="1" height="1" fill="#959595"/>
<rect x="381" y="138" width="1" height="1" fill="#959595"/>
<rect x="391" y="138" width="1" height="1" fill="#959595"/>
<rect x="401" y="138" width="1" height="1" fill="#959595"/>
<rect x="411" y="138" width="1" height="1" fill="#959595"/>
<rect x="421" y="138" width="1" height="1" fill="#959595"/>
<rect x="431" y="138" width="1" height="1" fill="#959595"/>
<rect x="441" y="138" width="1" height="1" fill="#959595"/>
<rect x="451" y="138" width="1" height="1" fill="#959595"/>
<rect x="461" y="138" width="1" height="1" fill="#959595"/>
<rect x="471" y="138" width="1" height="1" fill="#959595"/>
<rect x="481" y="138" width="1" height="1" fill="#959595"/>
<rect x="491" y="138" width="1" height="1" fill="#959595"/>
<rect x="501" y="138" width="1" height="1" fill="#959595"/>
<rect x="511" y="138" width="1" height="1" fill="#959595"/>
<rect x="521" y="138" width="1" height="1" fill="#959595"/>
<rect x="531" y="138" width="1" height="1" fill="#959595"/>
<rect x="541" y="138" width="1" height="1" fill="#959595"/>
<rect x="551" y="138" width="1" height="1" fill="#959595"/>
<rect x="561" y="138" width="1" height="1" fill="#959595"/>
<rect x="571" y="138" width="1" height="1" fill="#959595"/>
<rect x="581" y="138" width="1" height="1" fill="#959595"/>
<rect x="591" y="138" width="1" height="1" fill="#959595"/>
<rect x="601" y="138" width="1" height="1" fill="#959595"/>
<rect x="611" y="138" width="1" height="1" fill="#959595"/>
<rect x="621" y="138" width="1" height="1" fill="#959595"/>
<rect x="631" y="138" width="1" height="1" fill="#959595"/>
<rect x="641" y="138" width="1" height="1" fill="#959595"/>
<rect x="651" y="138" width="1" height="1" fill="#959595"/>
<rect x="661" y="138" width="1" height="1" fill="#959595"/>
<rect x="81" y="36" width="1" height="1" fill="#959595"/>
<rect x="81" y="39" width="1" height="1" fill="#959595"/>
<rect x="81" y="42" width="1" height="1" fill="#959595"/>
<rect x="81" y="45" width="1" height="1" fill="#959595"/>
<rect x="81" y="48" width="1" height="1" fill="#959595"/>
<rect x="81" y="51" width="1" height="1" fill="#959595"/>
<rect x="81" y="54" width="1" height="1" fill="#959595"/>
<rect x="81" y="57" width="1" height="1" fill="#959595"/>
<rect x="81" y="60" width="1" height="1" fill="#959595"/>
<rect x="81" y="63" width="1" height="1" fill="#959595"/>
<rect x="81" y="66" width="1" height="1" fill="#959595"/>
<rect x="81" y="69" width="1" height="1" fill="#959595"/>
<rect x="81" y="72" width="1" height="1" fill="#959595"/>
<rect x="81" y="75" width="1" height="1" fill="#959595"/>
<rect x="81" y="78" width="1" height="1" fill="#959595"/>
<rect x="81" y="81" width="1" height="1" fill="#959595"/>
<rect x="81" y="84" width="1" height="1" fill="#959595"/>
<rect x="81" y="87" width="1" height="1" fill="#959595"/>
<rect x="81" y="90" width="1" height="1" fill="#959595"/>
<rect x="81" y="93" width="1" height="1" fill="#959595"/>
<rect x="81" y="96" width="1" height="1" fill="#959595"/>
<rect x="81" y="99" width="1" height="1" fill="#959595"/>
<rect x="81" y="102" width="1" height="1" fill="#959595"/>
<rect x="81" y="105" width="1" height="1" fill="#959595"/>
<rect x="81" y="108" width="1" height="1" fill="#959595"/>
<rect x="81" y="111" width="1" height="1" fill="#959595"/>
<rect x="81" y="114" width="1" height="1" fill="#959595"/>
<rect x="81" y="117" width="1" height="1" fill="#959595"/>
<rect x="81" y="120" width="1" height="1" fill="#959595"/>
<rect x="81" y="123" width="1" height="1" fill="#959595"/>
<rect x="81" y="126" width="1" height="1" fill="#959595"/>
<rect x="81" y="129" width="1" height="1" fill="#959595"/>
<rect x="81" y="132" width="1" height="1" fill="#959595"/>
<rect x="81" y="135" width="1" height="1" fill="#959595"/>
<rect x="81" y="138" width="1" height="1" fill="#959595"/>
<rect x="81" y="141" width="1" height="1" fill="#959595"/>
<rect x="81" y="144" width="1" height="1" fill="#959595"/>
<rect x="81" y="147" width="1" height="1" fill="#959595"/>
<rect x="81" y="150" width="1" height="1" fill="#959595"/>
<rect x="131" y="36" width="1" height="1" fill="#959595"/>
<rect x="131" y="39" width="1" height="1" fill="#959595"/>
<rect x="131" y="42" width="1" height="1" fill="#959595"/>
<rect x="131" y="45" width="1" height="1" fill="#959595"/>
<rect x="131" y="48" width="1" height="1" fill="#959595"/>
<rect x="131" y="51" width="1" height="1" fill="#959595"/>
<rect x="131" y="54" width="1" height="1" fill="#959595"/>
<rect x="131" y="57" width="1" height="1" fill="#959595"/>
<rect x="131" y="60" width="1" height="1" fill="#959595"/>
<rect x="131" y="63" width="1" height="1" fill="#959595"/>
<rect x="131" y="66" width="1" height="1" fill="#959595"/>
<rect x="131" y="69" width="1" height="1" fill="#959595"/>
<rect x="131" y="72" width="1" height="1" fill="#959595"/>
<rect x="131" y="75" width="1" height="1" fill="#959595"/>
<rect x="131" y="78" width="1" height="1" fill="#959595"/>
<rect x="131" y="81" width="1" height="1" fill="#959595"/>
<rect x="131" y="84" width="1" height="1" fill="#959595"/>
<rect x="131" y="87" width="1" height="1" fill="#959595"/>
<rect x="131" y="90" width="1" height="1" fill="#959595"/>
<rect x="131" y="93" width="1" height="1" fill="#959595"/>
<rect x="131" y="96" width="1" height="1" fill="#959595"/>
<rect x="131" y="99" width="1" height="1" fill="#959595"/>
<rect x="131" y="102" width="1" height="1" fill="#959595"/>
<rect x="131" y="105" width="1" height="1" fill="#959595"/>
<rect x="131" y="108" width="1" height="1" fill="#959595"/>
<rect x="131" y="111" width="1" height="1" fill="#959595"/>
<rect x="131" y="114" width="1" height="1" fill="#959595"/>
<rect x="131" y="117" width="1" height="1" fill="#959595"/>
<rect x="131" y="120" width="1" height="1" fill="#959595"/>
<rect x="131" y="123" width="1" height="1" fill="#959595"/>
<rect x="131" y="126" width="1" height="1" fill="#959595"/>
<rect x="131" y="129" width="1" height="1" fill="#959595"/>
<rect x="131" y="132" width="1" height="1" fill="#959595"/>
<rect x="131" y="135" width="1" height="1" fill="#959595"/>
<rect x="131" y="138" width="1" height="1" fill="#959595"/>
<rect x="131" y="141" width="1" height="1" fill="#959595"/>
<rect x="131" y="144" width="1" height="1" fill="#959595"/>
<rect x="131" y="147" width="1" height="1" fill="#959595"/>
<rect x="131" y="150" width="1" height="1" fill="#959595"/>
<rect x="181" y="36" width="1" height="1" fill="#959595"/>
<rect x="181" y="39" width="1" height="1" fill="#959595"/>
<rect x="181" y="42" width="1" height="1" fill="#959595"/>
<rect x="181" y="45" width="1" height="1" fill="#959595"/>
<rect x="181" y="48" width="1" height="1" fill="#959595"/>
<rect x="181" y="51" width="1" height="1" fill="#959595"/>
<rect x="181" y="54" width="1" height="1" fill="#959595"/>
<rect x="181" y="57" width="1" height="1" fill="#959595"/>
<rect x="181" y="60" width="1" height="1" fill="#959595"/>
<rect x="181" y="63" width="1" height="1" fill="#959595"/>
<rect x="181" y="66" width="1" height="1" fill="#959595"/>
<rect x="181" y="69" width="1" height="1" fill="#959595"/>
<rect x="181" y="72" width="1" height="1" fill="#959595"/>
<rect x="181" y="75" width="1" height="1" fill="#959595"/>
<rect x="181" y="78" width="1" height="1" fill="#959595"/>
<rect x="181" y="81" width="1" height="1" fill="#959595"/>
<rect x="181" y="84" width="1" height="1" fill="#959595"/>
<rect x="181" y="87" width="1" height="1" fill="#959595"/>
<rect x="181" y="90" width="1" height="1" fill="#959595"/>
<rect x="181" y="93" width="1" height="1" fill="#959595"/>
<rect x="181" y="96" width="1" height="1" fill="#959595"/>
<rect x="181" y="99" width="1" height="1" fill="#959595"/>
<rect x="181" y="102" width="1" height="1" fill="#959595"/>
<rect x="181" y="105" width="1" height="1" fill="#959595"/>
<rect x="181" y="108" width="1" height="1" fill="#959595"/>
<rect x="181" y="111" width="1" height="1" fill="#959595"/>
<rect x="181" y="114" width="1" height="1" fill="#959595"/>
<rect x="181" y="117" width="1" height="1" fill="#959595"/>
<rect x="181" y="120" width="1" height="1" fill="#959595"/>
<rect x="181" y="123" width="1" height="1" fill="#959595"/>
<rect x="181" y="126" width="1" height="1" fill="#959595"/>
<rect x="181" y="129" width="1" height="1" fill="#959595"/>
<rect x="181" y="132" width="1" height="1" fill="#959595"/>
<rect x="181" y="135" width="1" height="1" fill="#959595"/>
<rect x="181" y="138" width="1" height="1" fill="#959595"/>
<rect x="181" y="141" width="1" height="1" fill="#959595"/>
<rect x="181" y="144" width="1" height="1" fill="#959595"/>
<rect x="181" y="147" width="1" height="1" fill="#959595"/>
<rect x="181" y="150" width="1" height="1" fill="#959595"/>
<rect x="231" y="36" width="1" height="1" fill="#959595"/>
<rect x="231" y="39" width="1" height="1" fill="#959595"/>
<rect x="231" y="42" width="1" height="1" fill="#959595"/>
<rect x="231" y="45" width="1" height="1" fill="#959595"/>
<rect x="231" y="48" width="1" height="1" fill="#959595"/>
<rect x="231" y="51" width="1" height="1" fill="#959595"/>
<rect x="231" y="54" width="1" height="1" fill="#959595"/>
<rect x="231" y="57" width="1" height="1" fill="#959595"/>
<rect x="231" y="60" width="1" height="1" fill="#959595"/>
<rect x="231" y="63" width="1" height="1" fill="#959595"/>
<rect x="231" y="66" width="1" height="1" fill="#959595"/>
<rect x="231" y="69" width="1" height="1" fill="#959595"/>
<rect x="231" y="72" width="1" height="1" fill="#959595"/>
<rect x="231" y="75" width="1" height="1" fill="#959595"/>
<rect x="231" y="78" width="1" height="1" fill="#959595"/>
<rect x="231" y="81" width="1" height="1" fill="#959595"/>
<rect x="231" y="84" width="1" height="1" fill="#959595"/>
<rect x="231" y="87" width="1" height="1" fill="#959595"/>
<rect x="231" y="90" width="1" height="1" fill="#959595"/>
<rect x="231" y="93" width="1" height="1" fill="#959595"/>
<rect x="231" y="96" width="1" height="1" fill="#959595"/>
<rect x="231" y="99" width="1" height="1" fill="#959595"/>
<rect x="231" y="102" width="1" height="1" fill="#959595"/>
<rect x="231" y="105" width="1" height="1" fill="#959595"/>
<rect x="231" y="108" width="1" height="1" fill="#959595"/>
<rect x="231" y="111" width="1" height="1" fill="#959595"/>
<rect x="231" y="114" width="1" height="1" fill="#959595"/>
<rect x="231" y="117" width="1" height="1" fill="#959595"/>
<rect x="231" y="120" width="1" height="1" fill="#959595"/>
<rect x="231" y="123" width="1" height="1" fill="#959595"/>
<rect x="231" y="126" width="1" height="1" fill="#959595"/>
<rect x="231" y="129" width="1" height="1" fill="#959595"/>
<rect x="231" y="132" width="1" height="1" fill="#959595"/>
<rect x="231" y="135" width="1" height="1" fill="#959595"/>
<rect x="231" y="138" width="1" height="1" fill="#959595"/>
<rect x="231" y="141" width="1" height="1" fill="#959595"/>
<rect x="231" y="144" width="1" height="1" fill="#959595"/>
<rect x="231" y="147" width="1" height="1" fill="#959595"/>
<rect x="231" y="150" width="1" height="1" fill="#959595"/>
<rect x="281" y="36" width="1" height="1" fill="#959595"/>
<rect x="281" y="39" width="1" height="1" fill="#959595"/>
<rect x="281" y="42" width="1" height="1" fill="#959595"/>
<rect x="281" y="45" width="1" height="1" fill="#959595"/>
<rect x="281" y="48" width="1" height="1" fill="#959595"/>
<rect x="281" y="51" width="1" height="1" fill="#959595"/>
<rect x="281" y="54" width="1" height="1" fill="#959595"/>
<rect x="281" y="57" width="1" height="1" fill="#959595"/>
<rect x="281" y="60" width="1" height="1" fill="#959595"/>
<rect x="281" y="63" width="1" height="1" fill="#959595"/>
<rect x="281" y="66" width="1" height="1" fill="#959595"/>
<rect x="281" y="69" width="1" height="1" fill="#959595"/>
<rect x="281" y="72" width="1" height="1" fill="#959595"/>
<rect x="281" y="75" width="1" height="1" fill="#959595"/>
<rect x="281" y="78" width="1" height="1" fill="#959595"/>
<rect x="281" y="81" width="1" height="1" fill="#959595"/>
<rect x="281" y="84" width="1" height="1" fill="#959595"/>
<rect x="281" y="87" width="1" height="1" fill="#959595"/>
<rect x="281" y="90" width="1" height="1" fill="#959595"/>
<rect x="281" y="93" width="1" height="1" fill="#959595"/>
<rect x="281" y="96" width="1" height="1" fill="#959595"/>
<rect x="281" y="99" width="1" height="1" fill="#959595"/>
<rect x="281" y="102" width="1" height="1" fill="#959595"/>
<rect x="281" y="105" width="1" height="1" fill="#959595"/>
<rect x="281" y="108" width="1" height="1" fill="#959595"/>
<rect x="281" y="111" width="1" height="1" fill="#959595"/>
<rect x="281" y="114" width="1" height="1" fill="#959595"/>
<rect x="281" y="117" width="1" height="1" fill="#959595"/>
<rect x="281" y="120" width="1" height="1" fill="#959595"/>
<rect x="281" y="123" width="1" height="1" fill="#959595"/>
<rect x="281" y="126" width="1" height="1" fill="#959595"/>
<rect x="281" y="129" width="1" height="1" fill="#959595"/>
<rect x="281" y="132" width="1" height="1" fill="#959595"/>
<rect x="281" y="135" width="1" height="1" fill="#959595"/>
<rect x="281" y="138" width="1" height="1" fill="#959595"/>
<rect x="281" y="141" width="1" height="1" fill="#959595"/>
<rect x="281" y="144" width="1" height="1" fill="#959595"/>
<rect x="281" y="147" width="1" height="1" fill="#959595"/>
<rect x="281" y="150" width="1" height="1" fill="#959595"/>
<rect x="331" y="36" width="1" height="1" fill="#959595"/>
<rect x="331" y="39" width="1" height="1" fill="#959595"/>
<rect x="331" y="42" width="1" height="1" fill="#959595"/>
<rect x="331" y="45" width="1" height="1" fill="#959595"/>
<rect x="331" y="48" width="1" height="1" fill="#959595"/>
<rect x="331" y="51" width="1" height="1" fill="#959595"/>
<rect x="331" y="54" width="1" height="1" fill="#959595"/>
<rect x="331" y="57" width="1" height="1" fill="#959595"/>
<rect x="331" y="60" width="1" height="1" fill="#959595"/>
<rect x="331" y="63" width="1" height="1" fill="#959595"/>
<rect x="331" y="66" width="1" height="1" fill="#959595"/>
<rect x="331" y="69" width="1" height="1" fill="#959595"/>
<rect x="331" y="72" width="1" height="1" fill="#959595"/>
<rect x="331" y="75" width="1" height="1" fill="#959595"/>
<rect x="331" y="78" width="1" height="1" fill="#959595"/>
<rect x="331" y="81" width="1" height="1" fill="#959595"/>
<rect x="331" y="84" width="1" height="1" fill="#959595"/>
<rect x="331" y="87" width="1" height="1" fill="#959595"/>
<rect x="331" y="90" width="1" height="1" fill="#959595"/>
<rect x="331" y="93" width="1" height="1" fill="#959595"/>
<rect x="331" y="96" width="1" height="1" fill="#959595"/>
<rect x="331" y="99" width="1" height="1" fill="#959595"/>
<rect x="331" y="102" width="1" height="1" fill="#959595"/>
<rect x="331" y="105" width="1" height="1" fill="#959595"/>
<rect x="331" y="108" width="1" height="1" fill="#959595"/>
<rect x="331" y="111" width="1" height="1" fill="#959595"/>
<rect x="331" y="114" width="1" height="1" fill="#959595"/>
<rect x="331" y="117" width="1" height="1" fill="#959595"/>
<rect x="331" y="120" width="1" height="1" fill="#959595"/>
<rect x="331" y="123" width="1" height="1" fill="#959595"/>
<rect x="331" y="126" width="1" height="1" fill="#959595"/>
<rect x="331" y="129" width="1" height="1" fill="#959595"/>
<rect x="331" y="132" width="1" height="1" fill="#959595"/>
<rect x="331" y="135" width="1" height="1" fill="#959595"/>
<rect x="331" y="138" width="1" height="1" fill="#959595"/>
<rect x="331" y="141" width="1" height="1" fill="#959595"/>
<rect x="331" y="144" width="1" height="1" fill="#959595"/>
<rect x="331" y="147" width="1" height="1" fill="#959595"/>
<rect x="331" y="150" width="1" height="1" fill="#959595"/>
<rect x="431" y="36" width="1" height="1" fill="#959595"/>
<rect x="431" y="39" width="1" height="1" fill="#959595"/>
<rect x="431" y="42" width="1" height="1" fill="#959595"/>
<rect x="431" y="45" width="1" height="1" fill="#959595"/>
<rect x="431" y="48" width="1" height="1" fill="#959595"/>
<rect x="431" y="51" width="1" height="1" fill="#959595"/>
<rect x="431" y="54" width="1" height="1" fill="#959595"/>
<rect x="431" y="57" width="1" height="1" fill="#959595"/>
<rect x="431" y="60" width="1" height="1" fill="#959595"/>
<rect x="431" y="63" width="1" height="1" fill="#959595"/>
<rect x="431" y="66" width="1" height="1" fill="#959595"/>
<rect x="431" y="69" width="1" height="1" fill="#959595"/>
<rect x="431" y="72" width="1" height="1" fill="#959595"/>
<rect x="431" y="75" width="1" height="1" fill="#959595"/>
<rect x="431" y="78" width="1" height="1" fill="#959595"/>
<rect x="431" y="81" width="1" height="1" fill="#959595"/>
<rect x="431" y="84" width="1" height="1" fill="#959595"/>
<rect x="431" y="87" width="1" height="1" fill="#959595"/>
<rect x="431" y="90" width="1" height="1" fill="#959595"/>
<rect x="431" y="93" width="1" height="1" fill="#959595"/>
<rect x="431" y="96" width="1" height="1" fill="#959595"/>
<rect x="431" y="99" width="1" height="1" fill="#959595"/>
<rect x="431" y="102" width="1" height="1" fill="#959595"/>
<rect x="431" y="105" width="1" height="1" fill="#959595"/>
<rect x="431" y="108" width="1" height="1" fill="#959595"/>
<rect x="431" y="111" width="1" height="1" fill="#959595"/>
<rect x="431" y="114" width="1" height="1" fill="#959595"/>
<rect x="431" y="117" width="1" height="1" fill="#959595"/>
<rect x="431" y="120" width="1" height="1" fill="#959595"/>
<rect x="431" y="123" width="1" height="1" fill="#959595"/>
<rect x="431" y="126" width="1" height="1" fill="#959595"/>
<rect x="431" y="129" width="1" height="1" fill="#959595"/>
<rect x="431" y="132" width="1" height="1" fill="#959595"/>
<rect x="431" y="135" width="1" height="1" fill="#959595"/>
<rect x="431" y="138" width="1" height="1" fill="#959595"/>
<rect x="431" y="141" width="1" height="1" fill="#959595"/>
<rect x="431" y="144" width="1" height="1" fill="#959595"/>
<rect x="431" y="147" width="1" height="1" fill="#959595"/>
<rect x="431" y="150" width="1" height="1" fill="#959595"/>
<rect x="481" y="36" width="1" height="1" fill="#959595"/>
<rect x="481" y="39" width="1" height="1" fill="#959595"/>
<rect x="481" y="42" width="1" height="1" fill="#959595"/>
<rect x="481" y="45" width="1" height="1" fill="#959595"/>
<rect x="481" y="48" width="1" height="1" fill="#959595"/>
<rect x="481" y="51" width="1" height="1" fill="#959595"/>
<rect x="481" y="54" width="1" height="1" fill="#959595"/>
<rect x="481" y="57" width="1" height="1" fill="#959595"/>
<rect x="481" y="60" width="1" height="1" fill="#959595"/>
<rect x="481" y="63" width="1" height="1" fill="#959595"/>
<rect x="481" y="66" width="1" height="1" fill="#959595"/>
<rect x="481" y="69" width="1" height="1" fill="#959595"/>
<rect x="481" y="72" width="1" height="1" fill="#959595"/>
<rect x="481" y="75" width="1" height="1" fill="#959595"/>
<rect x="481" y="78" width="1" height="1" fill="#959595"/>
<rect x="481" y="81" width="1" height="1" fill="#959595"/>
<rect x="481" y="84" width="1" height="1" fill="#959595"/>
<rect x="481" y="87" width="1" height="1" fill="#959595"/>
<rect x="481" y="90" width="1" height="1" fill="#959595"/>
<rect x="481" y="93" width="1" height="1" fill="#959595"/>
<rect x="481" y="96" width="1" height="1" fill="#959595"/>
<rect x="481" y="99" width="1" height="1" fill="#959595"/>
<rect x="481" y="102" width="1" height="1" fill="#959595"/>
<rect x="481" y="105" width="1" height="1" fill="#959595"/>
<rect x="481" y="108" width="1" height="1" fill="#959595"/>
<rect x="481" y="111" width="1" height="1" fill="#959595"/>
<rect x="481" y="114" width="1" height="1" fill="#959595"/>
<rect x="481" y="117" width="1" height="1" fill="#959595"/>
<rect x="481" y="120" width="1" height="1" fill="#959595"/>
<rect x="481" y="123" width="1" height="1" fill="#959595"/>
<rect x="481" y="126" width="1" height="1" fill="#959595"/>
<rect x="481" y="129" width="1" height="1" fill="#959595"/>
<rect x="481" y="132" width="1" height="1" fill="#959595"/>
<rect x="481" y="135" width="1" height="1" fill="#959595"/>
<rect x="481" y="138" width="1" height="1" fill="#959595"/>
<rect x="481" y="141" width="1" height="1" fill="#959595"/>
<rect x="481" y="144" width="1" height="1" fill="#959595"/>
<rect x="481" y="147" width="1" height="1" fill="#959595"/>
<rect x="481" y="150" width="1" height="1" fill="#959595"/>
<rect x="531" y="36" width="1" height="1" fill="#959595"/>
<rect x="531" y="39" width="1" height="1" fill="#959595"/>
<rect x="531" y="42" width="1" height="1" fill="#959595"/>
<rect x="531" y="45" width="1" height="1" fill="#959595"/>
<rect x="531" y="48" width="1" height="1" fill="#959595"/>
<rect x="531" y="51" width="1" height="1" fill="#959595"/>
<rect x="531" y="54" width="1" height="1" fill="#959595"/>
<rect x="531" y="57" width="1" height="1" fill="#959595"/>
<rect x="531" y="60" width="1" height="1" fill="#959595"/>
<rect x="531" y="63" width="1" height="1" fill="#959595"/>
<rect x="531" y="66" width="1" height="1" fill="#959595"/>
<rect x="531" y="69" width="1" height="1" fill="#959595"/>
<rect x="531" y="72" width="1" height="1" fill="#959595"/>
<rect x="531" y="75" width="1" height="1" fill="#959595"/>
<rect x="531" y="78" width="1" height="1" fill="#959595"/>
<rect x="531" y="81" width="1" height="1" fill="#959595"/>
<rect x="531" y="84" width="1" height="1" fill="#959595"/>
<rect x="531" y="87" width="1" height="1" fill="#959595"/>
<rect x="531" y="90" width="1" height="1" fill="#959595"/>
<rect x="531" y="93" width="1" height="1" fill="#959595"/>
<rect x="531" y="96" width="1" height="1" fill="#959595"/>
<rect x="531" y="99" width="1" height="1" fill="#959595"/>
<rect x="531" y="102" width="1" height="1" fill="#959595"/>
<rect x="531" y="105" width="1" height="1" fill="#959595"/>
<rect x="531" y="108" width="1" height="1" fill="#959595"/>
<rect x="531" y="111" width="1" height="1" fill="#959595"/>
<rect x="531" y="114" width="1" height="1" fill="#959595"/>
<rect x="531" y="117" width="1" height="1" fill="#959595"/>
<rect x="531" y="120" width="1" height="1" fill="#959595"/>
<rect x="531" y="123" width="1" height="1" fill="#959595"/>
<rect x="531" y="126" width="1" height="1" fill="#959595"/>
<rect x="531" y="129" width="1" height="1" fill="#959595"/>
<rect x="531" y="132" width="1" height="1" fill="#959595"/>
<rect x="531" y="135" width="1" height="1" fill="#959595"/>
<rect x="531" y="138" width="1" height="1" fill="#959595"/>
<rect x="531" y="141" width="1" height="1" fill="#959595"/>
<rect x="531" y="144" width="1" height="1" fill="#959595"/>
<rect x="531" y="147" width="1" height="1" fill="#959595"/>
<rect x="531" y="150" width="1" height="1" fill="#959595"/>
<rect x="581" y="36" width="1" height="1" fill="#959595"/>
<rect x="581" y="39" width="1" height="1" fill="#959595"/>
<rect x="581" y="42" width="1" height="1" fill="#959595"/>
<rect x="581" y="45" width="1" height="1" fill="#959595"/>
<rect x="581" y="48" width="1" height="1" fill="#959595"/>
<rect x="581" y="51" width="1" height="1" fill="#959595"/>
<rect x="581" y="54" width="1" height="1" fill="#959595"/>
<rect x="581" y="57" width="1" height="1" fill="#959595"/>
<rect x="581" y="60" width="1" height="1" fill="#959595"/>
<rect x="581" y="63" width="1" height="1" fill="#959595"/>
<rect x="581" y="66" width="1" height="1" fill="#959595"/>
<rect x="581" y="69" width="1" height="1" fill="#959595"/>
<rect x="581" y="72" width="1" height="1" fill="#959595"/>
<rect x="581" y="75" width="1" height="1" fill="#959595"/>
<rect x="581" y="78" width="1" height="1" fill="#959595"/>
<rect x="581" y="81" width="1" height="1" fill="#959595"/>
<rect x="581" y="84" width="1" height="1" fill="#959595"/>
<rect x="581" y="87" width="1" height="1" fill="#959595"/>
<rect x="581" y="90" width="1" height="1" fill="#959595"/>
<rect x="581" y="93" width="1" height="1" fill="#959595"/>
<rect x="581" y="96" width="1" height="1" fill="#959595"/>
<rect x="581" y="99" width="1" height="1" fill="#959595"/>
<rect x="581" y="102" width="1" height="1" fill="#959595"/>
<rect x="581" y="105" width="1" height="1" fill="#959595"/>
<rect x="581" y="108" width="1" height="1" fill="#959595"/>
<rect x="581" y="111" width="1" height="1" fill="#959595"/>
<rect x="581" y="114" width="1" height="1" fill="#959595"/>
<rect x="581" y="117" width="1" height="1" fill="#959595"/>
<rect x="581" y="120" width="1" height="1" fill="#959595"/>
<rect x="581" y="123" width="1" height="1" fill="#959595"/>
<rect x="581" y="126" width="1" height="1" fill="#959595"/>
<rect x="581" y="129" width="1" height="1" fill="#959595"/>
<rect x="581" y="132" width="1" height="1" fill="#959595"/>
<rect x="581" y="135" width="1" height="1" fill="#959595"/>
<rect x="581" y="138" width="1" height="1" fill="#959595"/>
<rect x="581" y="141" width="1" height="1" fill="#959595"/>
<rect x="581" y="144" width="1" height="1" fill="#959595"/>
<rect x="581" y="147" width="1" height="1" fill="#959595"/>
<rect x="581" y="150" width="1" height="1" fill="#959595"/>
<rect x="631" y="36" width="1" height="1" fill="#959595"/>
<rect x="631" y="39" width="1" height="1" fill="#959595"/>
<rect x="631" y="42" width="1" height="1" fill="#959595"/>
<rect x="631" y="45" width="1" height="1" fill="#959595"/>
<rect x="631" y="48" width="1" height="1" fill="#959595"/>
<rect x="631" y="51" width="1" height="1" fill="#959595"/>
<rect x="631" y="54" width="1" height="1" fill="#959595"/>
<rect x="631" y="57" width="1" height="1" fill="#959595"/>
<rect x="631" y="60" width="1" height="1" fill="#959595"/>
<rect x="631" y="63" width="1" height="1" fill="#959595"/>
<rect x="631" y="66" width="1" height="1" fill="#959595"/>
<rect x="631" y="69" width="1" height="1" fill="#959595"/>
<rect x="631" y="72" width="1" height="1" fill="#959595"/>
<rect x="631" y="75" width="1" height="1" fill="#959595"/>
<rect x="631" y="78" width="1" height="1" fill="#959595"/>
<rect x="631" y="81" width="1" height="1" fill="#959595"/>
<rect x="631" y="84" width="1" height="1" fill="#959595"/>
<rect x="631" y="87" width="1" height="1" fill="#959595"/>
<rect x="631" y="90" width="1" height="1" fill="#959595"/>
<rect x="631" y="93" width="1" height="1" fill="#959595"/>
<rect x="631" y="96" width="1" height="1" fill="#959595"/>
<rect x="631" y="99" width="1" height="1" fill="#959595"/>
<rect x="631" y="102" width="1" height="1" fill="#959595"/>
<rect x="631" y="105" width="1" height="1" fill="#959595"/>
<rect x="631" y="108" width="1" height="1" fill="#959595"/>
<rect x="631" y="111" width="1" height="1" fill="#959595"/>
<rect x="631" y="114" width="1" height="1" fill="#959595"/>
<rect x="631" y="117" width="1" height="1" fill="#959595"/>
<rect x="631" y="120" width="1" height="1" fill="#959595"/>
<rect x="631" y="123" width="1" height="1" fill="#959595"/>
<rect x="631" y="126" width="1" height="1" fill="#959595"/>
<rect x="631" y="129" width="1" height="1" fill="#959595"/>
<rect x="631" y="132" width="1" height="1" fill="#959595"/>
<rect x="631" y="135" width="1" height="1" fill="#959595"/>
<rect x="631" y="138" width="1" height="1" fill="#959595"/>
<rect x="631" y="141" width="1" height="1" fill="#959595"/>
<rect x="631" y="144" width="1" height="1" fill="#959595"/>
<rect x="631" y="147" width="1" height="1" fill="#959595"/>
<rect x="631" y="150" width="1" height="1" fill="#959595"/>
<rect x="33" y="93" width="1" height="1" fill="#959595"/>
<rect x="35" y="93" width="1" height="1" fill="#959595"/>
<rect x="37" y="93" width="1" height="1" fill="#959595"/>
<rect x="39" y="93" width="1" height="1" fill="#959595"/>
<rect x="41" y="93" width="1" height="1" fill="#959595"/>
<rect x="43" y="93" width="1" height="1" fill="#959595"/>
<rect x="45" y="93" width="1" height="1" fill="#959595"/>
<rect x="47" y="93" width="1" height="1" fill="#959595"/>
<rect x="49" y="93" width="1" height="1" fill="#959595"/>
<rect x="51" y="93" width="1" height="1" fill="#959595"/>
<rect x="53" y="93" width="1" height="1" fill="#959595"/>
<rect x="55" y="93" width="1" height="1" fill="#959595"/>
<rect x="57" y="93" width="1" height="1" fill="#959595"/>
<rect x="59" y="93" width="1" height="1" fill="#959595"/>
<rect x="61" y="93" width="1" height="1" fill="#959595"/>
<rect x="63" y="93" width="1" height="1" fill="#959595"/>
<rect x="65" y="93" width="1" height="1" fill="#959595"/>
<rect x="67" y="93" width="1" height="1" fill="#959595"/>
<rect x="69" y="93" width="1" height="1" fill="#959595"/>
<rect x="71" y="93" width="1" height="1" fill="#959595"/>
<rect x="73" y="93" width="1" height="1" fill="#959595"/>
<rect x="75" y="93" width="1" height="1" fill="#959595"/>
<rect x="77" y="93" width="1" height="1" fill="#959595"/>
<rect x="79" y="93" width="1" height="1" fill="#959595"/>
<rect x="81" y="93" width="1" height="1" fill="#959595"/>
<rect x="83" y="93" width="1" height="1" fill="#959595"/>
<rect x="85" y="93" width="1" height="1" fill="#959595"/>
<rect x="87" y="93" width="1" height="1" fill="#959595"/>
<rect x="89" y="93" width="1" height="1" fill="#959595"/>
<rect x="91" y="93" width="1" height="1" fill="#959595"/>
<rect x="93" y="93" width="1" height="1" fill="#959595"/>
<rect x="95" y="93" width="1" height="1" fill="#959595"/>
<rect x="97" y="93" width="1" height="1" fill="#959595"/>
<rect x="99" y="93" width="1" height="1" fill="#959595"/>
<rect x="101" y="93" width="1" height="1" fill="#959595"/>
<rect x="103" y="93" width="1" height="1" fill="#959595"/>
<rect x="105" y="93" width="1" height="1" fill="#959595"/>
<rect x="107" y="93" width="1" height="1" fill="#959595"/>
<rect x="109" y="93" width="1" height="1" fill="#959595"/>
<rect x="111" y="93" width="1" height="1" fill="#959595"/>
<rect x="113" y="93" width="1" height="1" fill="#959595"/>
<rect x="115" y="93" width="1" height="1" fill="#959595"/>
<rect x="117" y="93" width="1" height="1" fill="#959595"/>
<rect x="119" y="93" width="1" height="1" fill="#959595"/>
<rect x="121" y="93" width="1" height="1" fill="#959595"/>
<rect x="123" y="93" width="1" height="1" fill="#959595"/>
<rect x="125" y="93" width="1" height="1" fill="#959595"/>
<rect x="127" y="93" width="1" height="1" fill="#959595"/>
<rect x="129" y="93" width="1" height="1" fill="#959595"/>
<rect x="131" y="93" width="1" height="1" fill="#959595"/>
<rect x="133" y="93" width="1" height="1" fill="#959595"/>
<rect x="135" y="93" width="1" height="1" fill="#959595"/>
<rect x="137" y="93" width="1" height="1" fill="#959595"/>
<rect x="139" y="93" width="1" height="1" fill="#959595"/>
<rect x="141" y="93" width="1" height="1" fill="#959595"/>
<rect x="143" y="93" width="1" height="1" fill="#959595"/>
<rect x="145" y="93" width="1" height="1" fill="#959595"/>
<rect x="147" y="93" width="1" height="1" fill="#959595"/>
<rect x="149" y="93" width="1" height="1" fill="#959595"/>
<rect x="151" y="93" width="1" height="1" fill="#959595"/>
<rect x="153" y="93" width="1" height="1" fill="#959595"/>
<rect x="155" y="93" width="1" height="1" fill="#959595"/>
<rect x="157" y="93" width="1" height="1" fill="#959595"/>
<rect x="159" y="93" width="1" height="1" fill="#959595"/>
<rect x="161" y="93" width="1" height="1" fill="#959595"/>
<rect x="163" y="93" width="1" height="1" fill="#959595"/>
<rect x="165" y="93" width="1" height="1" fill="#959595"/>
<rect x="167" y="93" width="1" height="1" fill="#959595"/>
<rect x="169" y="93" width="1" height="1" fill="#959595"/>
<rect x="171" y="93" width="1" height="1" fill="#959595"/>
<rect x="173" y="93" width="1" height="1" fill="#959595"/>
<rect x="175" y="93" width="1" height="1" fill="#959595"/>
<rect x="177" y="93" width="1" height="1" fill="#959595"/>
<rect x="179" y="93" width="1" height="1" fill="#959595"/>
<rect x="181" y="93" width="1" height="1" fill="#959595"/>
<rect x="183" y="93" width="1" height="1" fill="#959595"/>
<rect x="185" y="93" width="1" height="1" fill="#959595"/>
<rect x="187" y="93" width="1" height="1" fill="#959595"/>
<rect x="189" y="93" width="1" height="1" fill="#959595"/>
<rect x="191" y="93" width="1" height="1" fill="#959595"/>
<rect x="193" y="93" width="1" height="1" fill="#959595"/>
<rect x="195" y="93" width="1" height="1" fill="#959595"/>
<rect x="197" y="93" width="1" height="1" fill="#959595"/>
<rect x="199" y="93" width="1" height="1" fill="#959595"/>
<rect x="201" y="93" width="1" height="1" fill="#959595"/>
<rect x="203" y="93" width="1" height="1" fill="#959595"/>
<rect x="205" y="93" width="1" height="1" fill="#959595"/>
<rect x="207" y="93" width="1" height="1" fill="#959595"/>
<rect x="209" y="93" width="1" height="1" fill="#959595"/>
<rect x="211" y="93" width="1" height="1" fill="#959595"/>
<rect x="213" y="93" width="1" height="1" fill="#959595"/>
<rect x="215" y="93" width="1" height="1" fill="#959595"/>
<rect x="217" y="93" width="1" height="1" fill="#959595"/>
<rect x="219" y="93" width="1" height="1" fill="#959595"/>
<rect x="221" y="93" width="1" height="1" fill="#959595"/>
<rect x="223" y="93" width="1" height="1" fill="#959595"/>
<rect x="225" y="93" width="1" height="1" fill="#959595"/>
<rect x="227" y="93" width="1" height="1" fill="#959595"/>
<rect x="229" y="93" width="1" height="1" fill="#959595"/>
<rect x="231" y="93" width="1" height="1" fill="#959595"/>
<rect x="233" y="93" width="1" height="1" fill="#959595"/>
<rect x="235" y="93" width="1" height="1" fill="#959595"/>
<rect x="237" y="93" width="1" height="1" fill="#959595"/>
<rect x="239" y="93" width="1" height="1" fill="#959595"/>
<rect x="241" y="93" width="1" height="1" fill="#959595"/>
<rect x="243" y="93" width="1" height="1" fill="#959595"/>
<rect x="245" y="93" width="1" height="1" fill="#959595"/>
<rect x="247" y="93" width="1" height="1" fill="#959595"/>
<rect x="249" y="93" width="1" height="1" fill="#959595"/>
<rect x="251" y="93" width="1" height="1" fill="#959595"/>
<rect x="253" y="93" width="1" height="1" fill="#959595"/>
<rect x="255" y="93" width="1" height="1" fill="#959595"/>
<rect x="257" y="93" width="1" height="1" fill="#959595"/>
<rect x="259" y="93" width="1" height="1" fill="#959595"/>
<rect x="261" y="93" width="1" height="1" fill="#959595"/>
<rect x="263" y="93" width="1" height="1" fill="#959595"/>
<rect x="265" y="93" width="1" height="1" fill="#959595"/>
<rect x="267" y="93" width="1" height="1" fill="#959595"/>
<rect x="269" y="93" width="1" height="1" fill="#959595"/>
<rect x="271" y="93" width="1" height="1" fill="#959595"/>
<rect x="273" y="93" width="1" height="1" fill="#959595"/>
<rect x="275" y="93" width="1" height="1" fill="#959595"/>
<rect x="277" y="93" width="1" height="1" fill="#959595"/>
<rect x="279" y="93" width="1" height="1" fill="#959595"/>
<rect x="281" y="93" width="1" height="1" fill="#959595"/>
<rect x="283" y="93" width="1" height="1" fill="#959595"/>
<rect x="285" y="93" width="1" height="1" fill="#959595"/>
<rect x="287" y="93" width="1" height="1" fill="#959595"/>
<rect x="289" y="93" width="1" height="1" fill="#959595"/>
<rect x="291" y="93" width="1" height="1" fill="#959595"/>
<rect x="293" y="93" width="1" height="1" fill="#959595"/>
<rect x="295" y="93" width="1" height="1" fill="#959595"/>
<rect x="297" y="93" width="1" height="1" fill="#959595"/>
<rect x="299" y="93" width="1" height="1" fill="#959595"/>
<rect x="301" y="93" width="1" height="1" fill="#959595"/>
<rect x="303" y="93" width="1" height="1" fill="#959595"/>
<rect x="305" y="93" width="1" height="1" fill="#959595"/>
<rect x="307" y="93" width="1" height="1" fill="#959595"/>
<rect x="309" y="93" width="1" height="1" fill="#959595"/>
<rect x="311" y="93" width="1" height="1" fill="#959595"/>
<rect x="313" y="93" width="1" height="1" fill="#959595"/>
<rect x="315" y="93" width="1" height="1" fill="#959595"/>
<rect x="317" y="93" width="1" height="1" fill="#959595"/>
<rect x="319" y="93" width="1" height="1" fill="#959595"/>
<rect x="321" y="93" width="1" height="1" fill="#959595"/>
<rect x="323" y="93" width="1" height="1" fill="#959595"/>
<rect x="325" y="93" width="1" height="1" fill="#959595"/>
<rect x="327" y="93" width="1" height="1" fill="#959595"/>
<rect x="329" y="93" width="1" height="1" fill="#959595"/>
<rect x="331" y="93" width="1" height="1" fill="#959595"/>
<rect x="333" y="93" width="1" height="1" fill="#959595"/>
<rect x="335" y="93" width="1" height="1" fill="#959595"/>
<rect x="337" y="93" width="1" height="1" fill="#959595"/>
<rect x="339" y="93" width="1" height="1" fill="#959595"/>
<rect x="341" y="93" width="1" height="1" fill="#959595"/>
<rect x="343" y="93" width="1" height="1" fill="#959595"/>
<rect x="345" y="93" width="1" height="1" fill="#959595"/>
<rect x="347" y="93" width="1" height="1" fill="#959595"/>
<rect x="349" y="93" width="1" height="1" fill="#959595"/>
<rect x="351" y="93" width="1" height="1" fill="#959595"/>
<rect x="353" y="93" width="1" height="1" fill="#959595"/>
<rect x="355" y="93" width="1" height="1" fill="#959595"/>
<rect x="357" y="93" width="1" height="1" fill="#959595"/>
<rect x="359" y="93" width="1" height="1" fill="#959595"/>
<rect x="361" y="93" width="1" height="1" fill="#959595"/>
<rect x="363" y="93" width="1" height="1" fill="#959595"/>
<rect x="365" y="93" width="1" height="1" fill="#959595"/>
<rect x="367" y="93" width="1" height="1" fill="#959595"/>
<rect x="369" y="93" width="1" height="1" fill="#959595"/>
<rect x="371" y="93" width="1" height="1" fill="#959595"/>
<rect x="373" y="93" width="1" height="1" fill="#959595"/>
<rect x="375" y="93" width="1" height="1" fill="#959595"/>
<rect x="377" y="93" width="1" height="1" fill="#959595"/>
<rect x="379" y="93" width="1" height="1" fill="#959595"/>
<rect x="381" y="93" width="1" height="1" fill="#959595"/>
<rect x="383" y="93" width="1" height="1" fill="#959595"/>
<rect x="385" y="93" width="1" height="1" fill="#959595"/>
<rect x="387" y="93" width="1" height="1" fill="#959595"/>
<rect x="389" y="93" width="1" height="1" fill="#959595"/>
<rect x="391" y="93" width="1" height="1" fill="#959595"/>
<rect x="393" y="93" width="1" height="1" fill="#959595"/>
<rect x="395" y="93" width="1" height="1" fill="#959595"/>
<rect x="397" y="93" width="1" height="1" fill="#959595"/>
<rect x="399" y="93" width="1" height="1" fill="#959595"/>
<rect x="401" y="93" width="1" height="1" fill="#959595"/>
<rect x="403" y="93" width="1" height="1" fill="#959595"/>
<rect x="405" y="93" width="1" height="1" fill="#959595"/>
<rect x="407" y="93" width="1" height="1" fill="#959595"/>
<rect x="409" y="93" width="1" height="1" fill="#959595"/>
<rect x="411" y="93" width="1" height="1" fill="#959595"/>
<rect x="413" y="93" width="1" height="1" fill="#959595"/>
<rect x="415" y="93" width="1" height="1" fill="#959595"/>
<rect x="417" y="93" width="1" height="1" fill="#959595"/>
<rect x="419" y="93" width="1" height="1" fill="#959595"/>
<rect x="421" y="93" width="1" height="1" fill="#959595"/>
<rect x="423" y="93" width="1" height="1" fill="#959595"/>
<rect x="425" y="93" width="1" height="1" fill="#959595"/>
<rect x="427" y="93" width="1" height="1" fill="#959595"/>
<rect x="429" y="93" width="1" height="1" fill="#959595"/>
<rect x="431" y="93" width="1" height="1" fill="#959595"/>
<rect x="433" y="93" width="1" height="1" fill="#959595"/>
<rect x="435" y="93" width="1" height="1" fill="#959595"/>
<rect x="437" y="93" width="1" height="1" fill="#959595"/>
<rect x="439" y="93" width="1" height="1" fill="#959595"/>
<rect x="441" y="93" width="1" height="1" fill="#959595"/>
<rect x="443" y="93" width="1" height="1" fill="#959595"/>
<rect x="445" y="93" width="1" height="1" fill="#959595"/>
<rect x="447" y="93" width="1" height="1" fill="#959595"/>
<rect x="449" y="93" width="1" height="1" fill="#959595"/>
<rect x="451" y="93" width="1" height="1" fill="#959595"/>
<rect x="453" y="93" width="1" height="1" fill="#959595"/>
<rect x="455" y="93" width="1" height="1" fill="#959595"/>
<rect x="457" y="93" width="1" height="1" fill="#959595"/>
<rect x="459" y="93" width="1" height="1" fill="#959595"/>
<rect x="461" y="93" width="1" height="1" fill="#959595"/>
<rect x="463" y="93" width="1" height="1" fill="#959595"/>
<rect x="465" y="93" width="1" height="1" fill="#959595"/>
<rect x="467" y="93" width="1" height="1" fill="#959595"/>
<rect x="469" y="93" width="1" height="1" fill="#959595"/>
<rect x="471" y="93" width="1" height="1" fill="#959595"/>
<rect x="473" y="93" width="1" height="1" fill="#959595"/>
<rect x="475" y="93" width="1" height="1" fill="#959595"/>
<rect x="477" y="93" width="1" height="1" fill="#959595"/>
<rect x="479" y="93" width="1" height="1" fill="#959595"/>
<rect x="481" y="93" width="1" height="1" fill="#959595"/>
<rect x="483" y="93" width="1" height="1" fill="#959595"/>
<rect x="485" y="93" width="1" height="1" fill="#959595"/>
<rect x="487" y="93" width="1" height="1" fill="#959595"/>
<rect x="489" y="93" width="1" height="1" fill="#959595"/>
<rect x="491" y="93" width="1" height="1" fill="#959595"/>
<rect x="493" y="93" width="1" height="1" fill="#959595"/>
<rect x="495" y="93" width="1" height="1" fill="#959595"/>
<rect x="497" y="93" width="1" height="1" fill="#959595"/>
<rect x="499" y="93" width="1" height="1" fill="#959595"/>
<rect x="501" y="93" width="1" height="1" fill="#959595"/>
<rect x="503" y="93" width="1" height="1" fill="#959595"/>
<rect x="505" y="93" width="1" height="1" fill="#959595"/>
<rect x="507" y="93" width="1" height="1" fill="#959595"/>
<rect x="509" y="93" width="1" height="1" fill="#959595"/>
<rect x="511" y="93" width="1" height="1" fill="#959595"/>
<rect x="513" y="93" width="1" height="1" fill="#959595"/>
<rect x="515" y="93" width="1" height="1" fill="#959595"/>
<rect x="517" y="93" width="1" height="1" fill="#959595"/>
<rect x="519" y="93" width="1" height="1" fill="#959595"/>
<rect x="521" y="93" width="1" height="1" fill="#959595"/>
<rect x="523" y="93" width="1" height="1" fill="#959595"/>
<rect x="525" y="93" width="1" height="1" fill="#959595"/>
<rect x="527" y="93" width="1" height="1" fill="#959595"/>
<rect x="529" y="93" width="1" height="1" fill="#959595"/>
<rect x="531" y="93" width="1" height="1" fill="#959595"/>
<rect x="533" y="93" width="1" height="1" fill="#959595"/>
<rect x="535" y="93" width="1" height="1" fill="#959595"/>
<rect x="537" y="93" width="1" height="1" fill="#959595"/>
<rect x="539" y="93" width="1" height="1" fill="#959595"/>
<rect x="541" y="93" width="1" height="1" fill="#959595"/>
<rect x="543" y="93" width="1" height="1" fill="#959595"/>
<rect x="545" y="93" width="1" height="1" fill="#959595"/>
<rect x="547" y="93" width="1" height="1" fill="#959595"/>
<rect x="549" y="93" width="1" height="1" fill="#959595"/>
<rect x="551" y="93" width="1" height="1" fill="#959595"/>
<rect x="553" y="93" width="1" height="1" fill="#959595"/>
<rect x="555" y="93" width="1" height="1" fill="#959595"/>
<rect x="557" y="93" width="1" height="1" fill="#959595"/>
<rect x="559" y="93" width="1" height="1" fill="#959595"/>
<rect x="561" y="93" width="1" height="1" fill="#959595"/>
<rect x="563" y="93" width="1" height="1" fill="#959595"/>
<rect x="565" y="93" width="1" height="1" fill="#959595"/>
<rect x="567" y="93" width="1" height="1" fill="#959595"/>
<rect x="569" y="93" width="1" height="1" fill="#959595"/>
<rect x="571" y="93" width="1" height="1" fill="#959595"/>
<rect x="573" y="93" width="1" height="1" fill="#959595"/>
<rect x="575" y="93" width="1" height="1" fill="#959595"/>
<rect x="577" y="93" width="1" height="1" fill="#959595"/>
<rect x="579" y="93" width="1" height="1" fill="#959595"/>
<rect x="581" y="93" width="1" height="1" fill="#959595"/>
<rect x="583" y="93" width="1" height="1" fill="#959595"/>
<rect x="585" y="93" width="1" height="1" fill="#959595"/>
<rect x="587" y="93" width="1" height="1" fill="#959595"/>
<rect x="589" y="93" width="1" height="1" fill="#959595"/>
<rect x="591" y="93" width="1" height="1" fill="#959595"/>
<rect x="593" y="93" width="1" height="1" fill="#959595"/>
<rect x="595" y="93" width="1" height="1" fill="#959595"/>
<rect x="597" y="93" width="1" height="1" fill="#959595"/>
<rect x="599" y="93" width="1" height="1" fill="#959595"/>
<rect x="601" y="93" width="1" height="1" fill="#959595"/>
<rect x="603" y="93" width="1" height="1" fill="#959595"/>
<rect x="605" y="93" width="1" height="1" fill="#959595"/>
<rect x="607" y="93" width="1" height="1" fill="#959595"/>
<rect x="609" y="93" width="1" height="1" fill="#959595"/>
<rect x="611" y="93" width="1" height="1" fill="#959595"/>
<rect x="613" y="93" width="1" height="1" fill="#959595"/>
<rect x="615" y="93" width="1" height="1" fill="#959595"/>
<rect x="617" y="93" width="1" height="1" fill="#959595"/>
<rect x="619" y="93" width="1" height="1" fill="#959595"/>
<rect x="621" y="93" width="1" height="1" fill="#959595"/>
<rect x="623" y="93" width="1" height="1" fill="#959595"/>
<rect x="625" y="93" width="1" height="1" fill="#959595"/>
<rect x="627" y="93" width="1" height="1" fill="#959595"/>
<rect x="629" y="93" width="1" height="1" fill="#959595"/>
<rect x="631" y="93" width="1" height="1" fill="#959595"/>
<rect x="633" y="93" width="1" height="1" fill="#959595"/>
<rect x="635" y="93" width="1" height="1" fill="#959595"/>
<rect x="637" y="93" width="1" height="1" fill="#959595"/>
<rect x="639" y="93" width="1" height="1" fill="#959595"/>
<rect x="641" y="93" width="1" height="1" fill="#959595"/>
<rect x="643" y="93" width="1" height="1" fill="#959595"/>
<rect x="645" y="93" width="1" height="1" fill="#959595"/>
<rect x="647" y="93" width="1" height="1" fill="#959595"/>
<rect x="649" y="93" width="1" height="1" fill="#959595"/>
<rect x="651" y="93" width="1" height="1" fill="#959595"/>
<rect x="653" y="93" width="1" height="1" fill="#959595"/>
<rect x="655" y="93" width="1" height="1" fill="#959595"/>
<rect x="657" y="93" width="1" height="1" fill="#959595"/>
<rect x="659" y="93" width="1" height="1" fill="#959595"/>
<rect x="661" y="93" width="1" height="1" fill="#959595"/>
<rect x="663" y="93" width="1" height="1" fill="#959595"/>
<rect x="665" y="93" width="1" height="1" fill="#959595"/>
<rect x="667" y="93" width="1" height="1" fill="#959595"/>
<rect x="41" y="92" width="1" height="3" fill="#959595"/>
<rect x="51" y="92" width="1" height="3" fill="#959595"/>
<rect x="61" y="92" width="1" height="3" fill="#959595"/>
<rect x="71" y="92" width="1" height="3" fill="#959595"/>
<rect x="81" y="92" width="1" height="3" fill="#959595"/>
<rect x="91" y="92" width="1" height="3" fill="#959595"/>
<rect x="101" y="92" width="1" height="3" fill="#959595"/>
<rect x="111" y="92" width="1" height="3" fill="#959595"/>
<rect x="121" y="92" width="1" height="3" fill="#959595"/>
<rect x="131" y="92" width="1" height="3" fill="#959595"/>
<rect x="141" y="92" width="1" height="3" fill="#959595"/>
<rect x="151" y="92" width="1" height="3" fill="#959595"/>
<rect x="161" y="92" width="1" height="3" fill="#959595"/>
<rect x="171" y="92" width="1" height="3" fill="#959595"/>
<rect x="181" y="92" width="1" height="3" fill="#959595"/>
<rect x="191" y="92" width="1" height="3" fill="#959595"/>
<rect x="201" y="92" width="1" height="3" fill="#959595"/>
<rect x="211" y="92" width="1" height="3" fill="#959595"/>
<rect x="221" y="92" width="1" height="3" fill="#959595"/>
<rect x="231" y="92" width="1" height="3" fill="#959595"/>
<rect x="241" y="92" width="1" height="3" fill="#959595"/>
<rect x="251" y="92" width="1" height="3" fill="#959595"/>
<rect x="261" y="92" width="1" height="3" fill="#959595"/>
<rect x="271" y="92" width="1" height="3" fill="#959595"/>
<rect x="281" y="92" width="1" height="3" fill="#959595"/>
<rect x="291" y="92" width="1" height="3" fill="#959595"/>
<rect x="301" y="92" width="1" height="3" fill="#959595"/>
<rect x="311" y="92" width="1" height="3" fill="#959595"/>
<rect x="321" y="92" width="1" height="3" fill="#959595"/>
<rect x="331" y="92" width="1" height="3" fill="#959595"/>
<rect x="341" y="92" width="1" height="3" fill="#959595"/>
<rect x="351" y="92" width="1" height="3" fill="#959595"/>
<rect x="361" y="92" width="1" height="3" fill="#959595"/>
<rect x="371" y="92" width="1" height="3" fill="#959595"/>
<rect x="381" y="92" width="1" height="3" fill="#959595"/>
<rect x="391" y="92" width="1" height="3" fill="#959595"/>
<rect x="401" y="92" width="1" height="3" fill="#959595"/>
<rect x="411" y="92" width="1" height="3" fill="#959595"/>
<rect x="421" y="92" width="1" height="3" fill="#959595"/>
<rect x="431" y="92" width="1" height="3" fill="#959595"/>
<rect x="441" y="92" width="1" height="3" fill="#959595"/>
<rect x="451" y="92" width="1" height="3" fill="#959595"/>
<rect x="461" y="92" width="1" height="3" fill="#959595"/>
<rect x="471" y="92" width="1" height="3" fill="#959595"/>
<rect x="481" y="92" width="1" height="3" fill="#959595"/>
<rect x="491" y="92" width="1" height="3" fill="#959595"/>
<rect x="501" y="92" width="1" height="3" fill="#959595"/>
<rect x="511" y="92" width="1" height="3" fill="#959595"/>
<rect x="521" y="92" width="1" height="3" fill="#959595"/>
<rect x="531" y="92" width="1" height="3" fill="#959595"/>
<rect x="541" y="92" width="1" height="3" fill="#959595"/>
<rect x="551" y="92" width="1" height="3" fill="#959595"/>
<rect x="561" y="92" width="1" height="3" fill="#959595"/>
<rect x="571" y="92" width="1" height="3" fill="#959595"/>
<rect x="581" y="92" width="1" height="3" fill="#959595"/>
<rect x="591" y="92" width="1" height="3" fill="#959595"/>
<rect x="601" y="92" width="1" height="3" fill="#959595"/>
<rect x="611" y="92" width="1" height="3" fill="#959595"/>
<rect x="621" y="92" width="1" height="3" fill="#959595"/>
<rect x="631" y="92" width="1" height="3" fill="#959595"/>
<rect x="641" y="92" width="1" height="3" fill="#959595"/>
<rect x="651" y="92" width="1" height="3" fill="#959595"/>
<rect x="661" y="92" width="1" height="3" fill="#959595"/>
<rect x="381" y="35" width="1" height="1" fill="#959595"/>
<rect x="381" y="37" width="1" height="1" fill="#959595"/>
<rect x="381" y="39" width="1" height="1" fill="#959595"/>
<rect x="381" y="41" width="1" height="1" fill="#959595"/>
<rect x="381" y="43" width="1" height="1" fill="#959595"/>
<rect x="381" y="45" width="1" height="1" fill="#959595"/>
<rect x="381" y="47" width="1" height="1" fill="#959595"/>
<rect x="381" y="49" width="1" height="1" fill="#959595"/>
<rect x="381" y="51" width="1" height="1" fill="#959595"/>
<rect x="381" y="53" width="1" height="1" fill="#959595"/>
<rect x="381" y="55" width="1" height="1" fill="#959595"/>
<rect x="381" y="57" width="1" height="1" fill="#959595"/>
<rect x="381" y="59" width="1" height="1" fill="#959595"/>
<rect x="381" y="61" width="1" height="1" fill="#959595"/>
<rect x="381" y="63" width="1" height="1" fill="#959595"/>
<rect x="381" y="65" width="1" height="1" fill="#959595"/>
<rect x="381" y="67" width="1" height="1" fill="#959595"/>
<rect x="381" y="69" width="1" height="1" fill="#959595"/>
<rect x="381" y="71" width="1" height="1" fill="#959595"/>
<rect x="381" y="73" width="1" height="1" fill="#959595"/>
<rect x="381" y="75" width="1" height="1" fill="#959595"/>
<rect x="381" y="77" width="1" height="1" fill="#959595"/>
<rect x="381" y="79" width="1" height="1" fill="#959595"/>
<rect x="381" y="81" width="1" height="1" fill="#959595"/>
<rect x="381" y="83" width="1" height="1" fill="#959595"/>
<rect x="381" y="85" width="1" height="1" fill="#959595"/>
<rect x="381" y="87" width="1" height="1" fill="#959595"/>
<rect x="381" y="89" width="1" height="1" fill="#959595"/>
<rect x="381" y="91" width="1" height="1" fill="#959595"/>
<rect x="381" y="93" width="1" height="1" fill="#959595"/>
<rect x="381" y="95" width="1" height="1" fill="#959595"/>
<rect x="381" y="97" width="1" height="1" fill="#959595"/>
<rect x="381" y="99" width="1" height="1" fill="#959595"/>
<rect x="381" y="101" width="1" height="1" fill="#959595"/>
<rect x="381" y="103" width="1" height="1" fill="#959595"/>
<rect x="381" y="105" width="1" height="1" fill="#959595"/>
<rect x="381" y="107" width="1" height="1" fill="#959595"/>
<rect x="381" y="109" width="1" height="1" fill="#959595"/>
<rect x="381" y="111" width="1" height="1" fill="#959595"/>
<rect x="381" y="113" width="1" height="1" fill="#959595"/>
<rect x="381" y="115" width="1" height="1" fill="#959595"/>
<rect x="381" y="117" width="1" height="1" fill="#959595"/>
<rect x="381" y="119" width="1" height="1" fill="#959595"/>
<rect x="381" y="121" width="1" height="1" fill="#959595"/>
<rect x="381" y="123" width="1" height="1" fill="#959595"/>
<rect x="381" y="125" width="1" height="1" fill="#959595"/>
<rect x="381" y="127" width="1" height="1" fill="#959595"/>
<rect x="381" y="129" width="1" height="1" fill="#959595"/>
<rect x="381" y="131" width="1" height="1" fill="#959595"/>
<rect x="381" y="133" width="1" height="1" fill="#959595"/>
<rect x="381" y="135" width="1" height="1" fill="#959595"/>
<rect x="381" y="137" width="1" height="1" fill="#959595"/>
<rect x="381" y="139" width="1" height="1" fill="#959595"/>
<rect x="381" y="141" width="1" height="1" fill="#959595"/>
<rect x="381" y="143" width="1" height="1" fill="#959595"/>
<rect x="381" y="145" width="1" height="1" fill="#959595"/>
<rect x="381" y="147" width="1" height="1" fill="#959595"/>
<rect x="381" y="149" width="1" height="1" fill="#959595"/>
<rect x="381" y="151" width="1" height="1" fill="#959595"/>
<rect x="380" y="36" width="3" height="1" fill="#959595"/>
<rect x="381" y="35" width="1" height="3" fill="#959595"/>
<rect x="380" y="39" width="3" height="1" fill="#959595"/>
<rect x="380" y="42" width="3" height="1" fill="#959595"/>
<rect x="381" y="41" width="1" height="3" fill="#959595"/>
<rect x="380" y="45" width="3" height="1" fill="#959595"/>
<rect x="380" y="48" width="3" height="1" fill="#959595"/>
<rect x="381" y="47" width="1" height="3" fill="#959595"/>
<rect x="380" y="51" width="3" height="1" fill="#959595"/>
<rect x="380" y="54" width="3" height="1" fill="#959595"/>
<rect x="381" y="53" width="1" height="3" fill="#959595"/>
<rect x="380" y="57" width="3" height="1" fill="#959595"/>
<rect x="380" y="60" width="3" height="1" fill="#959595"/>
<rect x="381" y="59" width="1" height="3" fill="#959595"/>
<rect x="380" y="63" width="3" height="1" fill="#959595"/>
<rect x="380" y="66" width="3" height="1" fill="#959595"/>
<rect x="381" y="65" width="1" height="3" fill="#959595"/>
<rect x="380" y="69" width="3" height="1" fill="#959595"/>
<rect x="380" y="72" width="3" height="1" fill="#959595"/>
<rect x="381" y="71" width="1" height="3" fill="#959595"/>
<rect x="380" y="75" width="3" height="1" fill="#959595"/>
<rect x="380" y="78" width="3" height="1" fill="#959595"/>
<rect x="381" y="77" width="1" height="3" fill="#959595"/>
<rect x="380" y="81" width="3" height="1" fill="#959595"/>
<rect x="380" y="84" width="3" height="1" fill="#959595"/>
<rect x="381" y="83" width="1" height="3" fill="#959595"/>
<rect x="380" y="87" width="3" height="1" fill="#959595"/>
<rect x="380" y="90" width="3" height="1" fill="#959595"/>
<rect x="381" y="89" width="1" height="3" fill="#959595"/>
<rect x="380" y="93" width="3" height="1" fill="#959595"/>
<rect x="380" y="96" width="3" height="1" fill="#959595"/>
<rect x="381" y="95" width="1" height="3" fill="#959595"/>
<rect x="380" y="99" width="3" height="1" fill="#959595"/>
<rect x="380" y="102" width="3" height="1" fill="#959595"/>
<rect x="381" y="101" width="1" height="3" fill="#959595"/>
<rect x="380" y="105" width="3" height="1" fill="#959595"/>
<rect x="380" y="108" width="3" height="1" fill="#959595"/>
<rect x="381" y="107" width="1" height="3" fill="#959595"/>
<rect x="380" y="111" width="3" height="1" fill="#959595"/>
<rect x="380" y="114" width="3" height="1" fill="#959595"/>
<rect x="381" y="113" width="1" height="3" fill="#959595"/>
<rect x="380" y="117" width="3" height="1" fill="#959595"/>
<rect x="380" y="120" width="3" height="1" fill="#959595"/>
<rect x="381" y="119" width="1" height="3" fill="#959595"/>
<rect x="380" y="123" width="3" height="1" fill="#959595"/>
<rect x="380" y="126" width="3" height="1" fill="#959595"/>
<rect x="381" y="125" width="1" height="3" fill="#959595"/>
<rect x="380" y="129" width="3" height="1" fill="#959595"/>
<rect x="380" y="132" width="3" height="1" fill="#959595"/>
<rect x="381" y="131" width="1" height="3" fill="#959595"/>
<rect x="380" y="135" width="3" height="1" fill="#959595"/>
<rect x="380" y="138" width="3" height="1" fill="#959595"/>
<rect x="381" y="137" width="1" height="3" fill="#959595"/>
<rect x="380" y="141" width="3" height="1" fill="#959595"/>
<rect x="380" y="144" width="3" height="1" fill="#959595"/>
<rect x="381" y="143" width="1" height="3" fill="#959595"/>
<rect x="380" y="147" width="3" height="1" fill="#959595"/>
<rect x="380" y="150" width="3" height="1" fill="#959595"/>
<rect x="381" y="149" width="1" height="3" fill="#959595"/>
<rect x="31" y="165" width="1" height="281" fill="#9a9a9a"/>
<rect x="31" y="165" width="700" height="1" fill="#9a9a9a"/>
<rect x="31" y="444" width="700" height="1" fill="#9a9a9a"/>
<rect x="41" y="166" width="1" height="2" fill="#9a9a9a"/>
<rect x="41" y="442" width="1" height="2" fill="#9a9a9a"/>
<rect x="51" y="166" width="1" height="2" fill="#9a9a9a"/>
<rect x="51" y="442" width="1" height="2" fill="#9a9a9a"/>
<rect x="61" y="166" width="1" height="2" fill="#9a9a9a"/>
<rect x="61" y="442" width="1" height="2" fill="#9a9a9a"/>
<rect x="71" y="166" width="1" height="2" fill="#9a9a9a"/>
<rect x="71" y="442" width="1" height="2" fill="#9a9a9a"/>
<rect x="81" y="166" width="1" height="2" fill="#9a9a9a"/>
<rect x="81" y="442" width="1" height="2" fill="#9a9a9a"/>
<rect x="91" y="166" width="1" height="2" fill="#9a9a9a"/>
<rect x="91" y="442" width="1" height="2" fill="#9a9a9a"/>
<rect x="101" y="166" width="1" height="2" fill="#9a9a9a"/>
<rect x="101" y="442" width="1" height="2" fill="#9a9a9a"/>
<rect x="111" y="166" width="1" height="2" fill="#9a9a9a"/>
<rect x="111" y="442" width="1" height="2" fill="#9a9a9a"/>
<rect x="121" y="166" width="1" height="2" fill="#9a9a9a"/>
<rect x="121" y="442" width="1" height="2" fill="#9a9a9a"/>
<rect x="131" y="166" width="1" height="2" fill="#9a9a9a"/>
<rect x="131" y="442" width="1" height="2" fill="#9a9a9a"/>
<rect x="141" y="166" width="1" height="2" fill="#9a9a9a"/>
<rect x="141" y="442" width="1" height="2" fill="#9a9a9a"/>
<rect x="151" y="166" width="1" height="2" fill="#9a9a9a"/>
<rect x="151" y="442" width="1" height="2" fill="#9a9a9a"/>
<rect x="161" y="166" width="1" height="2" fill="#9a9a9a"/>
<rect x="161" y="442" width="1" height="2" fill="#9a9a9a"/>
<rect x="171" y="166" width="1" height="2" fill="#9a9a9a"/>
<rect x="171" y="442" width="1" height="2" fill="#9a9a9a"/>
<rect x="181" y="166" width="1" height="2" fill="#9a9a9a"/>
<rect x="181" y="442" width="1" height="2" fill="#9a9a9a"/>
<rect x="191" y="166" width="1" height="2" fill="#9a9a9a"/>
<rect x="191" y="442" width="1" height="2" fill="#9a9a9a"/>
<rect x="201" y="166" width="1" height="2" fill="#9a9a9a"/>
<rect x="201" y="442" width="1" height="2" fill="#9a9a9a"/>
<rect x="211" y="166" width="1" height="2" fill="#9a9a9a"/>
<rect x="211" y="442" width="1" height="2" fill="#9a9a9a"/>
<rect x="221" y="166" width="1" height="2" fill="#9a9a9a"/>
<rect x="221" y="442" width="1" height="2" fill="#9a9a9a"/>
<rect x="231" y="166" width="1" height="2" fill="#9a9a9a"/>
<rect x="231" y="442" width="1" height="2" fill="#9a9a9a"/>
<rect x="241" y="166" width="1" height="2" fill="#9a9a9a"/>
<rect x="241" y="442" width="1" height="2" fill="#9a9a9a"/>
<rect x="251" y="166" width="1" height="2" fill="#9a9a9a"/>
<rect x="251" y="442" width="1" height="2" fill="#9a9a9a"/>
<rect x="261" y="166" width="1" height="2" fill="#9a9a9a"/>
<rect x="261" y="442" width="1" height="2" fill="#9a9a9a"/>
<rect x="271" y="166" width="1" height="2" fill="#9a9a9a"/>
<rect x="271" y="442" width="1" height="2" fill="#9a9a9a"/>
<rect x="281" y="166" width="1" height="2" fill="#9a9a9a"/>
<rect x="281" y="442" width="1" height="2" fill="#9a9a9a"/>
<rect x="291" y="166" width="1" height="2" fill="#9a9a9a"/>
<rect x="291" y="442" width="1" height="2" fill="#9a9a9a"/>
<rect x="301" y="166" width="1" height="2" fill="#9a9a9a"/>
<rect x="301" y="442" width="1" height="2" fill="#9a9a9a"/>
<rect x="311" y="166" width="1" height="2" fill="#9a9a9a"/>
<rect x="311" y="442" width="1" height="2" fill="#9a9a9a"/>
<rect x="321" y="166" width="1" height="2" fill="#9a9a9a"/>
<rect x="321" y="442" width="1" height="2" fill="#9a9a9a"/>
<rect x="331" y="166" width="1" height="2" fill="#9a9a9a"/>
<rect x="331" y="442" width="1" height="2" fill="#9a9a9a"/>
<rect x="341" y="166" width="1" height="2" fill="#9a9a9a"/>
<rect x="341" y="442" width="1" height="2" fill="#9a9a9a"/>
<rect x="351" y="166" width="1" height="2" fill="#9a9a9a"/>
<rect x="351" y="442" width="1" height="2" fill="#9a9a9a"/>
<rect x="361" y="166" width="1" height="2" fill="#9a9a9a"/>
<rect x="361" y="442" width="1" height="2" fill="#9a9a9a"/>
<rect x="371" y="166" width="1" height="2" fill="#9a9a9a"/>
<rect x="371" y="442" width="1" height="2" fill="#9a9a9a"/>
<rect x="381" y="166" width="1" height="2" fill="#9a9a9a"/>
<rect x="381" y="442" width="1" height="2" fill="#9a9a9a"/>
<rect x="391" y="166" width="1" height="2" fill="#9a9a9a"/>
<rect x="391" y="442" width="1" height="2" fill="#9a9a9a"/>
<rect x="401" y="166" width="1" height="2" fill="#9a9a9a"/>
<rect x="401" y="442" width="1" height="2" fill="#9a9a9a"/>
<rect x="411" y="166" width="1" height="2" fill="#9a9a9a"/>
<rect x="411" y="442" width="1" height="2" fill="#9a9a9a"/>
<rect x="421" y="166" width="1" height="2" fill="#9a9a9a"/>
<rect x="421" y="442" width="1" height="2" fill="#9a9a9a"/>
<rect x="431" y="166" width="1" height="2" fill="#9a9a9a"/>
<rect x="431" y="442" width="1" height="2" fill="#9a9a9a"/>
<rect x="441" y="166" width="1" height="2" fill="#9a9a9a"/>
<rect x="441" y="442" width="1" height="2" fill="#9a9a9a"/>
<rect x="451" y="166" width="1" height="2" fill="#9a9a9a"/>
<rect x="451" y="442" width="1" height="2" fill="#9a9a9a"/>
<rect x="461" y="166" width="1" height="2" fill="#9a9a9a"/>
<rect x="461" y="442" width="1" height="2" fill="#9a9a9a"/>
<rect x="471" y="166" width="1" height="2" fill="#9a9a9a"/>
<rect x="471" y="442" width="1" height="2" fill="#9a9a9a"/>
<rect x="481" y="166" width="1" height="2" fill="#9a9a9a"/>
<rect x="481" y="442" width="1" height="2" fill="#9a9a9a"/>
<rect x="491" y="166" width="1" height="2" fill="#9a9a9a"/>
<rect x="491" y="442" width="1" height="2" fill="#9a9a9a"/>
<rect x="501" y="166" width="1" height="2" fill="#9a9a9a"/>
<rect x="501" y="442" width="1" height="2" fill="#9a9a9a"/>
<rect x="511" y="166" width="1" height="2" fill="#9a9a9a"/>
<rect x="511" y="442" width="1" height="2" fill="#9a9a9a"/>
<rect x="521" y="166" width="1" height="2" fill="#9a9a9a"/>
<rect x="521" y="442" width="1" height="2" fill="#9a9a9a"/>
<rect x="531" y="166" width="1" height="2" fill="#9a9a9a"/>
<rect x="531" y="442" width="1" height="2" fill="#9a9a9a"/>
<rect x="541" y="166" width="1" height="2" fill="#9a9a9a"/>
<rect x="541" y="442" width="1" height="2" fill="#9a9a9a"/>
<rect x="551" y="166" width="1" height="2" fill="#9a9a9a"/>
<rect x="551" y="442" width="1" height="2" fill="#9a9a9a"/>
<rect x="561" y="166" width="1" height="2" fill="#9a9a9a"/>
<rect x="561" y="442" width="1" height="2" fill="#9a9a9a"/>
<rect x="571" y="166" width="1" height="2" fill="#9a9a9a"/>
<rect x="571" y="442" width="1" height="2" fill="#9a9a9a"/>
<rect x="581" y="166" width="1" height="2" fill="#9a9a9a"/>
<rect x="581" y="442" width="1" height="2" fill="#9a9a9a"/>
<rect x="591" y="166" width="1" height="2" fill="#9a9a9a"/>
<rect x="591" y="442" width="1" height="2" fill="#9a9a9a"/>
<rect x="601" y="166" width="1" height="2" fill="#9a9a9a"/>
<rect x="601" y="442" width="1" height="2" fill="#9a9a9a"/>
<rect x="611" y="166" width="1" height="2" fill="#9a9a9a"/>
<rect x="611" y="442" width="1" height="2" fill="#9a9a9a"/>
<rect x="621" y="166" width="1" height="2" fill="#9a9a9a"/>
<rect x="621" y="442" width="1" height="2" fill="#9a9a9a"/>
<rect x="631" y="166" width="1" height="2" fill="#9a9a9a"/>
<rect x="631" y="442" width="1" height="2" fill="#9a9a9a"/>
<rect x="641" y="166" width="1" height="2" fill="#9a9a9a"/>
<rect x="641" y="442" width="1" height="2" fill="#9a9a9a"/>
<rect x="651" y="166" width="1" height="2" fill="#9a9a9a"/>
<rect x="651" y="442" width="1" height="2" fill="#9a9a9a"/>
<rect x="661" y="166" width="1" height="2" fill="#9a9a9a"/>
<rect x="661" y="442" width="1" height="2" fill="#9a9a9a"/>
<rect x="671" y="166" width="1" height="2" fill="#9a9a9a"/>
<rect x="671" y="442" width="1" height="2" fill="#9a9a9a"/>
<rect x="681" y="166" width="1" height="2" fill="#9a9a9a"/>
<rect x="681" y="442" width="1" height="2" fill="#9a9a9a"/>
<rect x="691" y="166" width="1" height="2" fill="#9a9a9a"/>
<rect x="691" y="442" width="1" height="2" fill="#9a9a9a"/>
<rect x="32" y="172" width="2" height="1" fill="#9a9a9a"/>
<rect x="32" y="179" width="2" height="1" fill="#9a9a9a"/>
<rect x="32" y="186" width="2" height="1" fill="#9a9a9a"/>
<rect x="32" y="193" width="2" height="1" fill="#9a9a9a"/>
<rect x="32" y="200" width="2" height="1" fill="#9a9a9a"/>
<rect x="32" y="207" width="2" height="1" fill="#9a9a9a"/>
<rect x="32" y="214" width="2" height="1" fill="#9a9a9a"/>
<rect x="32" y="221" width="2" height="1" fill="#9a9a9a"/>
<rect x="32" y="228" width="2" height="1" fill="#9a9a9a"/>
<rect x="32" y="235" width="2" height="1" fill="#9a9a9a"/>
<rect x="32" y="242" width="2" height="1" fill="#9a9a9a"/>
<rect x="32" y="249" width="2" height="1" fill="#9a9a9a"/>
<rect x="32" y="256" width="2" height="1" fill="#9a9a9a"/>
<rect x="32" y="263" width="2" height="1" fill="#9a9a9a"/>
<rect x="32" y="270" width="2" height="1" fill="#9a9a9a"/>
<rect x="32" y="277" width="2" height="1" fill="#9a9a9a"/>
<rect x="32" y="284" width="2" height="1" fill="#9a9a9a"/>
<rect x="32" y="291" width="2" height="1" fill="#9a9a9a"/>
<rect x="32" y="298" width="2" height="1" fill="#9a9a9a"/>
<rect x="32" y="305" width="2" height="1" fill="#9a9a9a"/>
<rect x="32" y="312" width="2" height="1" fill="#9a9a9a"/>
<rect x="32" y="319" width="2" height="1" fill="#9a9a9a"/>
<rect x="32" y="326" width="2" height="1" fill="#9a9a9a"/>
<rect x="32" y="333" width="2" height="1" fill="#9a9a9a"/>
<rect x="32" y="340" width="2" height="1" fill="#9a9a9a"/>
<rect x="32" y="347" width="2" height="1" fill="#9a9a9a"/>
<rect x="32" y="354" width="2" height="1" fill="#9a9a9a"/>
<rect x="32" y="361" width="2" height="1" fill="#9a9a9a"/>
<rect x="32" y="368" width="2" height="1" fill="#9a9a9a"/>
<rect x="32" y="375" width="2" height="1" fill="#9a9a9a"/>
<rect x="32" y="382" width="2" height="1" fill="#9a9a9a"/>
<rect x="32" y="389" width="2" height="1" fill="#9a9a9a"/>
<rect x="32" y="396" width="2" height="1" fill="#9a9a9a"/>
<rect x="32" y="403" width="2" height="1" fill="#9a9a9a"/>
<rect x="32" y="410" width="2" height="1" fill="#9a9a9a"/>
<rect x="32" y="417" width="2" height="1" fill="#9a9a9a"/>
<rect x="32" y="424" width="2" height="1" fill="#9a9a9a"/>
<rect x="32" y="431" width="2" height="1" fill="#9a9a9a"/>
<rect x="32" y="438" width="2" height="1" fill="#9a9a9a"/>
<rect x="41" y="200" width="1" height="1" fill="#959595"/>
<rect x="51" y="200" width="1" height="1" fill="#959595"/>
<rect x="61" y="200" width="1" height="1" fill="#959595"/>
<rect x="71" y="200" width="1" height="1" fill="#959595"/>
<rect x="81" y="200" width="1" height="1" fill="#959595"/>
<rect x="91" y="200" width="1" height="1" fill="#959595"/>
<rect x="101" y="200" width="1" height="1" fill="#959595"/>
<rect x="111" y="200" width="1" height="1" fill="#959595"/>
<rect x="121" y="200" width="1" height="1" fill="#959595"/>
<rect x="131" y="200" width="1" height="1" fill="#959595"/>
<rect x="141" y="200" width="1" height="1" fill="#959595"/>
<rect x="151" y="200" width="1" height="1" fill="#959595"/>
<rect x="161" y="200" width="1" height="1" fill="#959595"/>
<rect x="171" y="200" width="1" height="1" fill="#959595"/>
<rect x="181" y="200" width="1" height="1" fill="#959595"/>
<rect x="191" y="200" width="1" height="1" fill="#959595"/>
<rect x="201" y="200" width="1" height="1" fill="#959595"/>
<rect x="211" y="200" width="1" height="1" fill="#959595"/>
<rect x="221" y="200" width="1" height="1" fill="#959595"/>
<rect x="231" y="200" width="1" height="1" fill="#959595"/>
<rect x="241" y="200" width="1" height="1" fill="#959595"/>
<rect x="251" y="200" width="1" height="1" fill="#959595"/>
<rect x="261" y="200" width="1" height="1" fill="#959595"/>
<rect x="271" y="200" width="1" height="1" fill="#959595"/>
<rect x="281" y="200" width="1" height="1" fill="#959595"/>
<rect x="291" y="200" width="1" height="1" fill="#959595"/>
<rect x="301" y="200" width="1" height="1" fill="#959595"/>
<rect x="311" y="200" width="1" height="1" fill="#959595"/>
<rect x="321" y="200" width="1" height="1" fill="#959595"/>
<rect x="331" y="200" width="1" height="1" fill="#959595"/>
<rect x="341" y="200" width="1" height="1" fill="#959595"/>
<rect x="351" y="200" width="1" height="1" fill="#959595"/>
<rect x="361" y="200" width="1" height="1" fill="#959595"/>
<rect x="371" y="200" width="1" height="1" fill="#959595"/>
<rect x="381" y="200" width="1" height="1" fill="#959595"/>
<rect x="391" y="200" width="1" height="1" fill="#959595"/>
<rect x="401" y="200" width="1" height="1" fill="#959595"/>
<rect x="411" y="200" width="1" height="1" fill="#959595"/>
<rect x="421" y="200" width="1" height="1" fill="#959595"/>
<rect x="431" y="200" width="1" height="1" fill="#959595"/>
<rect x="441" y="200" width="1" height="1" fill="#959595"/>
<rect x="451" y="200" width="1" height="1" fill="#959595"/>
<rect x="461" y="200" width="1" height="1" fill="#959595"/>
<rect x="471" y="200" width="1" height="1" fill="#959595"/>
<rect x="481" y="200" width="1" height="1" fill="#959595"/>
<rect x="491" y="200" width="1" height="1" fill="#959595"/>
<rect x="501" y="200" width="1" height="1" fill="#959595"/>
<rect x="511" y="200" width="1" height="1" fill="#959595"/>
<rect x="521" y="200" width="1" height="1" fill="#959595"/>
<rect x="531" y="200" width="1" height="1" fill="#959595"/>
<rect x="541" y="200" width="1" height="1" fill="#959595"/>
<rect x="551" y="200" width="1" height="1" fill="#959595"/>
<rect x="561" y="200" width="1" height="1" fill="#959595"/>
<rect x="571" y="200" width="1" height="1" fill="#959595"/>
<rect x="581" y="200" width="1" height="1" fill="#959595"/>
<rect x="591" y="200" width="1" height="1" fill="#959595"/>
<rect x="601" y="200" width="1" height="1" fill="#959595"/>
<rect x="611" y="200" width="1" height="1" fill="#959595"/>
<rect x="621" y="200" width="1" height="1" fill="#959595"/>
<rect x="631" y="200" width="1" height="1" fill="#959595"/>
<rect x="641" y="200" width="1" height="1" fill="#959595"/>
<rect x="651" y="200" width="1" height="1" fill="#959595"/>
<rect x="661" y="200" width="1" height="1" fill="#959595"/>
<rect x="671" y="200" width="1" height="1" fill="#959595"/>
<rect x="681" y="200" width="1" height="1" fill="#959595"/>
<rect x="41" y="235" width="1" height="1" fill="#959595"/>
<rect x="51" y="235" width="1" height="1" fill="#959595"/>
<rect x="61" y="235" width="1" height="1" fill="#959595"/>
<rect x="71" y="235" width="1" height="1" fill="#959595"/>
<rect x="81" y="235" width="1" height="1" fill="#959595"/>
<rect x="91" y="235" width="1" height="1" fill="#959595"/>
<rect x="101" y="235" width="1" height="1" fill="#959595"/>
<rect x="111" y="235" width="1" height="1" fill="#959595"/>
<rect x="121" y="235" width="1" height="1" fill="#959595"/>
<rect x="131" y="235" width="1" height="1" fill="#959595"/>
<rect x="141" y="235" width="1" height="1" fill="#959595"/>
<rect x="151" y="235" width="1" height="1" fill="#959595"/>
<rect x="161" y="235" width="1" height="1" fill="#959595"/>
<rect x="171" y="235" width="1" height="1" fill="#959595"/>
<rect x="181" y="235" width="1" height="1" fill="#959595"/>
<rect x="191" y="235" width="1" height="1" fill="#959595"/>
<rect x="201" y="235" width="1" height="1" fill="#959595"/>
<rect x="211" y="235" width="1" height="1" fill="#959595"/>
<rect x="221" y="235" width="1" height="1" fill="#959595"/>
<rect x="231" y="235" width="1" height="1" fill="#959595"/>
<rect x="241" y="235" width="1" height="1" fill="#959595"/>
<rect x="251" y="235" width="1" height="1" fill="#959595"/>
<rect x="261" y="235" width="1" height="1" fill="#959595"/>
<rect x="271" y="235" width="1" height="1" fill="#959595"/>
<rect x="281" y="235" width="1" height="1" fill="#959595"/>
<rect x="291" y="235" width="1" height="1" fill="#959595"/>
<rect x="301" y="235" width="1" height="1" fill="#959595"/>
<rect x="311" y="235" width="1" height="1" fill="#959595"/>
<rect x="321" y="235" width="1" height="1" fill="#959595"/>
<rect x="331" y="235" width="1" height="1" fill="#959595"/>
<rect x="341" y="235" width="1" height="1" fill="#959595"/>
<rect x="351" y="235" width="1" height="1" fill="#959595"/>
<rect x="361" y="235" width="1" height="1" fill="#959595"/>
<rect x="371" y="235" width="1" height="1" fill="#959595"/>
<rect x="381" y="235" width="1" height="1" fill="#959595"/>
<rect x="391" y="235" width="1" height="1" fill="#959595"/>
<rect x="401" y="235" width="1" height="1" fill="#959595"/>
<rect x="411" y="235" width="1" height="1" fill="#959595"/>
<rect x="421" y="235" width="1" height="1" fill="#959595"/>
<rect x="431" y="235" width="1" height="1" fill="#959595"/>
<rect x="441" y="235" width="1" height="1" fill="#959595"/>
<rect x="451" y="235" width="1" height="1" fill="#959595"/>
<rect x="461" y="235" width="1" height="1" fill="#959595"/>
<rect x="471" y="235" width="1" height="1" fill="#959595"/>
<rect x="481" y="235" width="1" height="1" fill="#959595"/>
<rect x="491" y="235" width="1" height="1" fill="#959595"/>
<rect x="501" y="235" width="1" height="1" fill="#959595"/>
<rect x="511" y="235" width="1" height="1" fill="#959595"/>
<rect x="521" y="235" width="1" height="1" fill="#959595"/>
<rect x="531" y="235" width="1" height="1" fill="#959595"/>
<rect x="541" y="235" width="1" height="1" fill="#959595"/>
<rect x="551" y="235" width="1" height="1" fill="#959595"/>
<rect x="561" y="235" width="1" height="1" fill="#959595"/>
<rect x="571" y="235" width="1" height="1" fill="#959595"/>
<rect x="581" y="235" width="1" height="1" fill="#959595"/>
<rect x="591" y="235" width="1" height="1" fill="#959595"/>
<rect x="601" y="235" width="1" height="1" fill="#959595"/>
<rect x="611" y="235" width="1" height="1" fill="#959595"/>
<rect x="621" y="235" width="1" height="1" fill="#959595"/>
<rect x="631" y="235" width="1" height="1" fill="#959595"/>
<rect x="641" y="235" width="1" height="1" fill="#959595"/>
<rect x="651" y="235" width="1" height="1" fill="#959595"/>
<rect x="661" y="235" width="1" height="1" fill="#959595"/>
<rect x="671" y="235" width="1" height="1" fill="#959595"/>
<rect x="681" y="235" width="1" height="1" fill="#959595"/>
<rect x="41" y="270" width="1" height="1" fill="#959595"/>
<rect x="51" y="270" width="1" height="1" fill="#959595"/>
<rect x="61" y="270" width="1" height="1" fill="#959595"/>
<rect x="71" y="270" width="1" height="1" fill="#959595"/>
<rect x="81" y="270" width="1" height="1" fill="#959595"/>
<rect x="91" y="270" width="1" height="1" fill="#959595"/>
<rect x="101" y="270" width="1" height="1" fill="#959595"/>
<rect x="111" y="270" width="1" height="1" fill="#959595"/>
<rect x="121" y="270" width="1" height="1" fill="#959595"/>
<rect x="131" y="270" width="1" height="1" fill="#959595"/>
<rect x="141" y="270" width="1" height="1" fill="#959595"/>
<rect x="151" y="270" width="1" height="1" fill="#959595"/>
<rect x="161" y="270" width="1" height="1" fill="#959595"/>
<rect x="171" y="270" width="1" height="1" fill="#959595"/>
<rect x="181" y="270" width="1" height="1" fill="#959595"/>
<rect x="191" y="270" width="1" height="1" fill="#959595"/>
<rect x="201" y="270" width="1" height="1" fill="#959595"/>
<rect x="211" y="270" width="1" height="1" fill="#959595"/>
<rect x="221" y="270" width="1" height="1" fill="#959595"/>
<rect x="231" y="270" width="1" height="1" fill="#959595"/>
<rect x="241" y="270" width="1" height="1" fill="#959595"/>
<rect x="251" y="270" width="1" height="1" fill="#959595"/>
<rect x="261" y="270" width="1" height="1" fill="#959595"/>
<rect x="271" y="270" width="1" height="1" fill="#959595"/>
<rect x="281" y="270" width="1" height="1" fill="#959595"/>
<rect x="291" y="270" width="1" height="1" fill="#959595"/>
<rect x="301" y="270" width="1" height="1" fill="#959595"/>
<rect x="311" y="270" width="1" height="1" fill="#959595"/>
<rect x="321" y="270" width="1" height="1" fill="#959595"/>
<rect x="331" y="270" width="1" height="1" fill="#959595"/>
<rect x="341" y="270" width="1" height="1" fill="#959595"/>
<rect x="351" y="270" width="1" height="1" fill="#959595"/>
<rect x="361" y="270" width="1" height="1" fill="#959595"/>
<rect x="371" y="270" width="1" height="1" fill="#959595"/>
<rect x="381" y="270" width="1" height="1" fill="#959595"/>
<rect x="391" y="270" width="1" height="1" fill="#959595"/>
<rect x="401" y="270" width="1" height="1" fill="#959595"/>
<rect x="411" y="270" width="1" height="1" fill="#959595"/>
<rect x="421" y="270" width="1" height="1" fill="#959595"/>
<rect x="431" y="270" width="1" height="1" fill="#959595"/>
<rect x="441" y="270" width="1" height="1" fill="#959595"/>
<rect x="451" y="270" width="1" height="1" fill="#959595"/>
<rect x="461" y="270" width="1" height="1" fill="#959595"/>
<rect x="471" y="270" width="1" height="1" fill="#959595"/>
<rect x="481" y="270" width="1" height="1" fill="#959595"/>
<rect x="491" y="270" width="1" height="1" fill="#959595"/>
<rect x="501" y="270" width="1" height="1" fill="#959595"/>
<rect x="511" y="270" width="1" height="1" fill="#959595"/>
<rect x="521" y="270" width="1" height="1" fill="#959595"/>
<rect x="531" y="270" width="1" height="1" fill="#959595"/>
<rect x="541" y="270" width="1" height="1" fill="#959595"/>
<rect x="551" y="270" width="1" height="1" fill="#959595"/>
<rect x="561" y="270" width="1" height="1" fill="#959595"/>
<rect x="571" y="270" width="1" height="1" fill="#959595"/>
<rect x="581" y="270" width="1" height="1" fill="#959595"/>
<rect x="591" y="270" width="1" height="1" fill="#959595"/>
<rect x="601" y="270" width="1" height="1" fill="#959595"/>
<rect x="611" y="270" width="1" height="1" fill="#959595"/>
<rect x="621" y="270" width="1" height="1" fill="#959595"/>
<rect x="631" y="270" width="1" height="1" fill="#959595"/>
<rect x="641" y="270" width="1" height="1" fill="#959595"/>
<rect x="651" y="270" width="1" height="1" fill="#959595"/>
<rect x="661" y="270" width="1" height="1" fill="#959595"/>
<rect x="671" y="270" width="1" height="1" fill="#959595"/>
<rect x="681" y="270" width="1" height="1" fill="#959595"/>
<rect x="41" y="340" width="1" height="1" fill="#959595"/>
<rect x="51" y="340" width="1" height="1" fill="#959595"/>
<rect x="61" y="340" width="1" height="1" fill="#959595"/>
<rect x="71" y="340" width="1" height="1" fill="#959595"/>
<rect x="81" y="340" width="1" height="1" fill="#959595"/>
<rect x="91" y="340" width="1" height="1" fill="#959595"/>
<rect x="101" y="340" width="1" height="1" fill="#959595"/>
<rect x="111" y="340" width="1" height="1" fill="#959595"/>
<rect x="121" y="340" width="1" height="1" fill="#959595"/>
<rect x="131" y="340" width="1" height="1" fill="#959595"/>
<rect x="141" y="340" width="1" height="1" fill="#959595"/>
<rect x="151" y="340" width="1" height="1" fill="#959595"/>
<rect x="161" y="340" width="1" height="1" fill="#959595"/>
<rect x="171" y="340" width="1" height="1" fill="#959595"/>
<rect x="181" y="340" width="1" height="1" fill="#959595"/>
<rect x="191" y="340" width="1" height="1" fill="#959595"/>
<rect x="201" y="340" width="1" height="1" fill="#959595"/>
<rect x="211" y="340" width="1" height="1" fill="#959595"/>
<rect x="221" y="340" width="1" height="1" fill="#959595"/>
<rect x="231" y="340" width="1" height="1" fill="#959595"/>
<rect x="241" y="340" width="1" height="1" fill="#959595"/>
<rect x="251" y="340" width="1" height="1" fill="#959595"/>
<rect x="261" y="340" width="1" height="1" fill="#959595"/>
<rect x="271" y="340" width="1" height="1" fill="#959595"/>
<rect x="281" y="340" width="1" height="1" fill="#959595"/>
<rect x="291" y="340" width="1" height="1" fill="#959595"/>
<rect x="301" y="340" width="1" height="1" fill="#959595"/>
<rect x="311" y="340" width="1" height="1" fill="#959595"/>
<rect x="321" y="340" width="1" height="1" fill="#959595"/>
<rect x="331" y="340" width="1" height="1" fill="#959595"/>
<rect x="341" y="340" width="1" height="1" fill="#959595"/>
<rect x="351" y="340" width="1" height="1" fill="#959595"/>
<rect x="361" y="340" width="1" height="1" fill="#959595"/>
<rect x="371" y="340" width="1" height="1" fill="#959595"/>
<rect x="381" y="340" width="1" height="1" fill="#959595"/>
<rect x="391" y="340" width="1" height="1" fill="#959595"/>
<rect x="401" y="340" width="1" height="1" fill="#959595"/>
<rect x="411" y="340" width="1" height="1" fill="#959595"/>
<rect x="421" y="340" width="1" height="1" fill="#959595"/>
<rect x="431" y="340" width="1" height="1" fill="#959595"/>
<rect x="441" y="340" width="1" height="1" fill="#959595"/>
<rect x="451" y="340" width="1" height="1" fill="#959595"/>
<rect x="461" y="340" width="1" height="1" fill="#959595"/>
<rect x="471" y="340" width="1" height="1" fill="#959595"/>
<rect x="481" y="340" width="1" height="1" fill="#959595"/>
<rect x="491" y="340" width="1" height="1" fill="#959595"/>
<rect x="501" y="340" width="1" height="1" fill="#959595"/>
<rect x="511" y="340" width="1" height="1" fill="#959595"/>
<rect x="521" y="340" width="1" height="1" fill="#959595"/>
<rect x="531" y="340" width="1" height="1" fill="#959595"/>
<rect x="541" y="340" width="1" height="1" fill="#959595"/>
<rect x="551" y="340" width="1" height="1" fill="#959595"/>
<rect x="561" y="340" width="1" height="1" fill="#959595"/>
<rect x="571" y="340" width="1" height="1" fill="#959595"/>
<rect x="581" y="340" width="1" height="1" fill="#959595"/>
<rect x="591" y="340" width="1" height="1" fill="#959595"/>
<rect x="601" y="340" width="1" height="1" fill="#959595"/>
<rect x="611" y="340" width="1" height="1" fill="#959595"/>
<rect x="621" y="340" width="1" height="1" fill="#959595"/>
<rect x="631" y="340" width="1" height="1" fill="#959595"/>
<rect x="641" y="340" width="1" height="1" fill="#959595"/>
<rect x="651" y="340" width="1" height="1" fill="#959595"/>
<rect x="661" y="340" width="1" height="1" fill="#959595"/>
<rect x="671" y="340" width="1" height="1" fill="#959595"/>
<rect x="681" y="340" width="1" height="1" fill="#959595"/>
<rect x="41" y="375" width="1" height="1" fill="#959595"/>
<rect x="51" y="375" width="1" height="1" fill="#959595"/>
<rect x="61" y="375" width="1" height="1" fill="#959595"/>
<rect x="71" y="375" width="1" height="1" fill="#959595"/>
<rect x="81" y="375" width="1" height="1" fill="#959595"/>
<rect x="91" y="375" width="1" height="1" fill="#959595"/>
<rect x="101" y="375" width="1" height="1" fill="#959595"/>
<rect x="111" y="375" width="1" height="1" fill="#959595"/>
<rect x="121" y="375" width="1" height="1" fill="#959595"/>
<rect x="131" y="375" width="1" height="1" fill="#959595"/>
<rect x="141" y="375" width="1" height="1" fill="#959595"/>
<rect x="151" y="375" width="1" height="1" fill="#959595"/>
<rect x="161" y="375" width="1" height="1" fill="#959595"/>
<rect x="171" y="375" width="1" height="1" fill="#959595"/>
<rect x="181" y="375" width="1" height="1" fill="#959595"/>
<rect x="191" y="375" width="1" height="1" fill="#959595"/>
<rect x="201" y="375" width="1" height="1" fill="#959595"/>
<rect x="211" y="375" width="1" height="1" fill="#959595"/>
<rect x="221" y="375" width="1" height="1" fill="#959595"/>
<rect x="231" y="375" width="1" height="1" fill="#959595"/>
<rect x="241" y="375" width="1" height="1" fill="#959595"/>
<rect x="251" y="375" width="1" height="1" fill="#959595"/>
<rect x="261" y="375" width="1" height="1" fill="#959595"/>
<rect x="271" y="375" width="1" height="1" fill="#959595"/>
<rect x="281" y="375" width="1" height="1" fill="#959595"/>
<rect x="291" y="375" width="1" height="1" fill="#959595"/>
<rect x="301" y="375" width="1" height="1" fill="#959595"/>
<rect x="311" y="375" width="1" height="1" fill="#959595"/>
<rect x="321" y="375" width="1" height="1" fill="#959595"/>
<rect x="331" y="375" width="1" height="1" fill="#959595"/>
<rect x="341" y="375" width="1" height="1" fill="#959595"/>
<rect x="351" y="375" width="1" height="1" fill="#959595"/>
<rect x="361" y="375" width="1" height="1" fill="#959595"/>
<rect x="371" y="375" width="1" height="1" fill="#959595"/>
<rect x="381" y="375" width="1" height="1" fill="#959595"/>
<rect x="391" y="375" width="1" height="1" fill="#959595"/>
<rect x="401" y="375" width="1" height="1" fill="#959595"/>
<rect x="411" y="375" width="1" height="1" fill="#959595"/>
<rect x="421" y="375" width="1" height="1" fill="#959595"/>
<rect x="431" y="375" width="1" height="1" fill="#959595"/>
<rect x="441" y="375" width="1" height="1" fill="#959595"/>
<rect x="451" y="375" width="1" height="1" fill="#959595"/>
<rect x="461" y="375" width="1" height="1" fill="#959595"/>
<rect x="471" y="375" width="1" height="1" fill="#959595"/>
<rect x="481" y="375" width="1" height="1" fill="#959595"/>
<rect x="491" y="375" width="1" height="1" fill="#959595"/>
<rect x="501" y="375" width="1" height="1" fill="#959595"/>
<rect x="511" y="375" width="1" height="1" fill="#959595"/>
<rect x="521" y="375" width="1" height="1" fill="#959595"/>
<rect x="531" y="375" width="1" height="1" fill="#959595"/>
<rect x="541" y="375" width="1" height="1" fill="#959595"/>
<rect x="551" y="375" width="1" height="1" fill="#959595"/>
<rect x="561" y="375" width="1" height="1" fill="#959595"/>
<rect x="571" y="375" width="1" height="1" fill="#959595"/>
<rect x="581" y="375" width="1" height="1" fill="#959595"/>
<rect x="591" y="375" width="1" height="1" fill="#959595"/>
<rect x="601" y="375" width="1" height="1" fill="#959595"/>
<rect x="611" y="375" width="1" height="1" fill="#959595"/>
<rect x="621" y="375" width="1" height="1" fill="#959595"/>
<rect x="631" y="375" width="1" height="1" fill="#959595"/>
<rect x="641" y="375" width="1" height="1" fill="#959595"/>
<rect x="651" y="375" width="1" height="1" fill="#959595"/>
<rect x="661" y="375" width="1" height="1" fill="#959595"/>
<rect x="671" y="375" width="1" height="1" fill="#959595"/>
<rect x="681" y="375" width="1" height="1" fill="#959595"/>
<rect x="41" y="410" width="1" height="1" fill="#959595"/>
<rect x="51" y="410" width="1" height="1" fill="#959595"/>
<rect x="61" y="410" width="1" height="1" fill="#959595"/>
<rect x="71" y="410" width="1" height="1" fill="#959595"/>
<rect x="81" y="410" width="1" height="1" fill="#959595"/>
<rect x="91" y="410" width="1" height="1" fill="#959595"/>
<rect x="101" y="410" width="1" height="1" fill="#959595"/>
<rect x="111" y="410" width="1" height="1" fill="#959595"/>
<rect x="121" y="410" width="1" height="1" fill="#959595"/>
<rect x="131" y="410" width="1" height="1" fill="#959595"/>
<rect x="141" y="410" width="1" height="1" fill="#959595"/>
<rect x="151" y="410" width="1" height="1" fill="#959595"/>
<rect x="161" y="410" width="1" height="1" fill="#959595"/>
<rect x="171" y="410" width="1" height="1" fill="#959595"/>
<rect x="181" y="410" width="1" height="1" fill="#959595"/>
<rect x="191" y="410" width="1" height="1" fill="#959595"/>
<rect x="201" y="410" width="1" height="1" fill="#959595"/>
<rect x="211" y="410" width="1" height="1" fill="#959595"/>
<rect x="221" y="410" width="1" height="1" fill="#959595"/>
<rect x="231" y="410" width="1" height="1" fill="#959595"/>
<rect x="241" y="410" width="1" height="1" fill="#959595"/>
<rect x="251" y="410" width="1" height="1" fill="#959595"/>
<rect x="261" y="410" width="1" height="1" fill="#959595"/>
<rect x="271" y="410" width="1" height="1" fill="#959595"/>
<rect x="281" y="410" width="1" height="1" fill="#959595"/>
<rect x="291" y="410" width="1" height="1" fill="#959595"/>
<rect x="301" y="410" width="1" height="1" fill="#959595"/>
<rect x="311" y="410" width="1" height="1" fill="#959595"/>
<rect x="321" y="410" width="1" height="1" fill="#959595"/>
<rect x="331" y="410" width="1" height="1" fill="#959595"/>
<rect x="341" y="410" width="1" height="1" fill="#959595"/>
<rect x="351" y="410" width="1" height="1" fill="#959595"/>
<rect x="361" y="410" width="1" height="1" fill="#959595"/>
<rect x="371" y="410" width="1" height="1" fill="#959595"/>
<rect x="381" y="410" width="1" height="1" fill="#959595"/>
<rect x="391" y="410" width="1" height="1" fill="#959595"/>
<rect x="401" y="410" width="1" height="1" fill="#959595"/>
<rect x="411" y="410" width="1" height="1" fill="#959595"/>
<rect x="421" y="410" width="1" height="1" fill="#959595"/>
<rect x="431" y="410" width="1" height="1" fill="#959595"/>
<rect x="441" y="410" width="1" height="1" fill="#959595"/>
<rect x="451" y="410" width="1" height="1" fill="#959595"/>
<rect x="461" y="410" width="1" height="1" fill="#959595"/>
<rect x="471" y="410" width="1" height="1" fill="#959595"/>
<rect x="481" y="410" width="1" height="1" fill="#959595"/>
<rect x="491" y="410" width="1" height="1" fill="#959595"/>
<rect x="501" y="410" width="1" height="1" fill="#959595"/>
<rect x="511" y="410" width="1" height="1" fill="#959595"/>
<rect x="521" y="410" width="1" height="1" fill="#959595"/>
<rect x="531" y="410" width="1" height="1" fill="#959595"/>
<rect x="541" y="410" width="1" height="1" fill="#959595"/>
<rect x="551" y="410" width="1" height="1" fill="#959595"/>
<rect x="561" y="410" width="1" height="1" fill="#959595"/>
<rect x="571" y="410" width="1" height="1" fill="#959595"/>
<rect x="581" y="410" width="1" height="1" fill="#959595"/>
<rect x="591" y="410" width="1" height="1" fill="#959595"/>
<rect x="601" y="410" width="1" height="1" fill="#959595"/>
<rect x="611" y="410" width="1" height="1" fill="#959595"/>
<rect x="621" y="410" width="1" height="1" fill="#959595"/>
<rect x="631" y="410" width="1" height="1" fill="#959595"/>
<rect x="641" y="410" width="1" height="1" fill="#959595"/>
<rect x="651" y="410" width="1" height="1" fill="#959595"/>
<rect x="661" y="410" width="1" height="1" fill="#959595"/>
<rect x="671" y="410" width="1" height="1" fill="#959595"/>
<rect x="681" y="410" width="1" height="1" fill="#959595"/>
<rect x="81" y="172" width="1" height="1" fill="#959595"/>
<rect x="81" y="179" width="1" height="1" fill="#959595"/>
<rect x="81" y="186" width="1" height="1" fill="#959595"/>
<rect x="81" y="193" width="1" height="1" fill="#959595"/>
<rect x="81" y="200" width="1" height="1" fill="#959595"/>
<rect x="81" y="207" width="1" height="1" fill="#959595"/>
<rect x="81" y="214" width="1" height="1" fill="#959595"/>
<rect x="81" y="221" width="1" height="1" fill="#959595"/>
<rect x="81" y="228" width="1" height="1" fill="#959595"/>
<rect x="81" y="235" width="1" height="1" fill="#959595"/>
<rect x="81" y="242" width="1" height="1" fill="#959595"/>
<rect x="81" y="249" width="1" height="1" fill="#959595"/>
<rect x="81" y="256" width="1" height="1" fill="#959595"/>
<rect x="81" y="263" width="1" height="1" fill="#959595"/>
<rect x="81" y="270" width="1" height="1" fill="#959595"/>
<rect x="81" y="277" width="1" height="1" fill="#959595"/>
<rect x="81" y="284" width="1" height="1" fill="#959595"/>
<rect x="81" y="291" width="1" height="1" fill="#959595"/>
<rect x="81" y="298" width="1" height="1" fill="#959595"/>
<rect x="81" y="305" width="1" height="1" fill="#959595"/>
<rect x="81" y="312" width="1" height="1" fill="#959595"/>
<rect x="81" y="319" width="1" height="1" fill="#959595"/>
<rect x="81" y="326" width="1" height="1" fill="#959595"/>
<rect x="81" y="333" width="1" height="1" fill="#959595"/>
<rect x="81" y="340" width="1" height="1" fill="#959595"/>
<rect x="81" y="347" width="1" height="1" fill="#959595"/>
<rect x="81" y="354" width="1" height="1" fill="#959595"/>
<rect x="81" y="361" width="1" height="1" fill="#959595"/>
<rect x="81" y="368" width="1" height="1" fill="#959595"/>
<rect x="81" y="375" width="1" height="1" fill="#959595"/>
<rect x="81" y="382" width="1" height="1" fill="#959595"/>
<rect x="81" y="389" width="1" height="1" fill="#959595"/>
<rect x="81" y="396" width="1" height="1" fill="#959595"/>
<rect x="81" y="403" width="1" height="1" fill="#959595"/>
<rect x="81" y="410" width="1" height="1" fill="#959595"/>
<rect x="81" y="417" width="1" height="1" fill="#959595"/>
<rect x="81" y="424" width="1" height="1" fill="#959595"/>
<rect x="81" y="431" width="1" height="1" fill="#959595"/>
<rect x="81" y="438" width="1" height="1" fill="#959595"/>
<rect x="131" y="172" width="1" height="1" fill="#959595"/>
<rect x="131" y="179" width="1" height="1" fill="#959595"/>
<rect x="131" y="186" width="1" height="1" fill="#959595"/>
<rect x="131" y="193" width="1" height="1" fill="#959595"/>
<rect x="131" y="200" width="1" height="1" fill="#959595"/>
<rect x="131" y="207" width="1" height="1" fill="#959595"/>
<rect x="131" y="214" width="1" height="1" fill="#959595"/>
<rect x="131" y="221" width="1" height="1" fill="#959595"/>
<rect x="131" y="228" width="1" height="1" fill="#959595"/>
<rect x="131" y="235" width="1" height="1" fill="#959595"/>
<rect x="131" y="242" width="1" height="1" fill="#959595"/>
<rect x="131" y="249" width="1" height="1" fill="#959595"/>
<rect x="131" y="256" width="1" height="1" fill="#959595"/>
<rect x="131" y="263" width="1" height="1" fill="#959595"/>
<rect x="131" y="270" width="1" height="1" fill="#959595"/>
<rect x="131" y="277" width="1" height="1" fill="#959595"/>
<rect x="131" y="284" width="1" height="1" fill="#959595"/>
<rect x="131" y="291" width="1" height="1" fill="#959595"/>
<rect x="131" y="298" width="1" height="1" fill="#959595"/>
<rect x="131" y="305" width="1" height="1" fill="#959595"/>
<rect x="131" y="312" width="1" height="1" fill="#959595"/>
<rect x="131" y="319" width="1" height="1" fill="#959595"/>
<rect x="131" y="326" width="1" height="1" fill="#959595"/>
<rect x="131" y="333" width="1" height="1" fill="#959595"/>
<rect x="131" y="340" width="1" height="1" fill="#959595"/>
<rect x="131" y="347" width="1" height="1" fill="#959595"/>
<rect x="131" y="354" width="1" height="1" fill="#959595"/>
<rect x="131" y="361" width="1" height="1" fill="#959595"/>
<rect x="131" y="368" width="1" height="1" fill="#959595"/>
<rect x="131" y="375" width="1" height="1" fill="#959595"/>
<rect x="131" y="382" width="1" height="1" fill="#959595"/>
<rect x="131" y="389" width="1" height="1" fill="#959595"/>
<rect x="131" y="396" width="1" height="1" fill="#959595"/>
<rect x="131" y="403" width="1" height="1" fill="#959595"/>
<rect x="131" y="410" width="1" height="1" fill="#959595"/>
<rect x="131" y="417" width="1" height="1" fill="#959595"/>
<rect x="131" y="424" width="1" height="1" fill="#959595"/>
<rect x="131" y="431" width="1" height="1" fill="#959595"/>
<rect x="131" y="438" width="1" height="1" fill="#959595"/>
<rect x="181" y="172" width="1" height="1" fill="#959595"/>
<rect x="181" y="179" width="1" height="1" fill="#959595"/>
<rect x="181" y="186" width="1" height="1" fill="#959595"/>
<rect x="181" y="193" width="1" height="1" fill="#959595"/>
<rect x="181" y="200" width="1" height="1" fill="#959595"/>
<rect x="181" y="207" width="1" height="1" fill="#959595"/>
<rect x="181" y="214" width="1" height="1" fill="#959595"/>
<rect x="181" y="221" width="1" height="1" fill="#959595"/>
<rect x="181" y="228" width="1" height="1" fill="#959595"/>
<rect x="181" y="235" width="1" height="1" fill="#959595"/>
<rect x="181" y="242" width="1" height="1" fill="#959595"/>
<rect x="181" y="249" width="1" height="1" fill="#959595"/>
<rect x="181" y="256" width="1" height="1" fill="#959595"/>
<rect x="181" y="263" width="1" height="1" fill="#959595"/>
<rect x="181" y="270" width="1" height="1" fill="#959595"/>
<rect x="181" y="277" width="1" height="1" fill="#959595"/>
<rect x="181" y="284" width="1" height="1" fill="#959595"/>
<rect x="181" y="291" width="1" height="1" fill="#959595"/>
<rect x="181" y="298" width="1" height="1" fill="#959595"/>
<rect x="181" y="305" width="1" height="1" fill="#959595"/>
<rect x="181" y="312" width="1" height="1" fill="#959595"/>
<rect x="181" y="319" width="1" height="1" fill="#959595"/>
<rect x="181" y="326" width="1" height="1" fill="#959595"/>
<rect x="181" y="333" width="1" height="1" fill="#959595"/>
<rect x="181" y="340" width="1" height="1" fill="#959595"/>
<rect x="181" y="347" width="1" height="1" fill="#959595"/>
<rect x="181" y="354" width="1" height="1" fill="#959595"/>
<rect x="181" y="361" width="1" height="1" fill="#959595"/>
<rect x="181" y="368" width="1" height="1" fill="#959595"/>
<rect x="181" y="375" width="1" height="1" fill="#959595"/>
<rect x="181" y="382" width="1" height="1" fill="#959595"/>
<rect x="181" y="389" width="1" height="1" fill="#959595"/>
<rect x="181" y="396" width="1" height="1" fill="#959595"/>
<rect x="181" y="403" width="1" height="1" fill="#959595"/>
<rect x="181" y="410" width="1" height="1" fill="#959595"/>
<rect x="181" y="417" width="1" height="1" fill="#959595"/>
<rect x="181" y="424" width="1" height="1" fill="#959595"/>
<rect x="181" y="431" width="1" height="1" fill="#959595"/>
<rect x="181" y="438" width="1" height="1" fill="#959595"/>
<rect x="231" y="172" width="1" height="1" fill="#959595"/>
<rect x="231" y="179" width="1" height="1" fill="#959595"/>
<rect x="231" y="186" width="1" height="1" fill="#959595"/>
<rect x="231" y="193" width="1" height="1" fill="#959595"/>
<rect x="231" y="200" width="1" height="1" fill="#959595"/>
<rect x="231" y="207" width="1" height="1" fill="#959595"/>
<rect x="231" y="214" width="1" height="1" fill="#959595"/>
<rect x="231" y="221" width="1" height="1" fill="#959595"/>
<rect x="231" y="228" width="1" height="1" fill="#959595"/>
<rect x="231" y="235" width="1" height="1" fill="#959595"/>
<rect x="231" y="242" width="1" height="1" fill="#959595"/>
<rect x="231" y="249" width="1" height="1" fill="#959595"/>
<rect x="231" y="256" width="1" height="1" fill="#959595"/>
<rect x="231" y="263" width="1" height="1" fill="#959595"/>
<rect x="231" y="270" width="1" height="1" fill="#959595"/>
<rect x="231" y="277" width="1" height="1" fill="#959595"/>
<rect x="231" y="284" width="1" height="1" fill="#959595"/>
<rect x="231" y="291" width="1" height="1" fill="#959595"/>
<rect x="231" y="298" width="1" height="1" fill="#959595"/>
<rect x="231" y="305" width="1" height="1" fill="#959595"/>
<rect x="231" y="312" width="1" height="1" fill="#959595"/>
<rect x="231" y="319" width="1" height="1" fill="#959595"/>
<rect x="231" y="326" width="1" height="1" fill="#959595"/>
<rect x="231" y="333" width="1" height="1" fill="#959595"/>
<rect x="231" y="340" width="1" height="1" fill="#959595"/>
<rect x="231" y="347" width="1" height="1" fill="#959595"/>
<rect x="231" y="354" width="1" height="1" fill="#959595"/>
<rect x="231" y="361" width="1" height="1" fill="#959595"/>
<rect x="231" y="368" width="1" height="1" fill="#959595"/>
<rect x="231" y="375" width="1" height="1" fill="#959595"/>
<rect x="231" y="382" width="1" height="1" fill="#959595"/>
<rect x="231" y="389" width="1" height="1" fill="#959595"/>
<rect x="231" y="396" width="1" height="1" fill="#959595"/>
<rect x="231" y="403" width="1" height="1" fill="#959595"/>
<rect x="231" y="410" width="1" height="1" fill="#959595"/>
<rect x="231" y="417" width="1" height="1" fill="#959595"/>
<rect x="231" y="424" width="1" height="1" fill="#959595"/>
<rect x="231" y="431" width="1" height="1" fill="#959595"/>
<rect x="231" y="438" width="1" height="1" fill="#959595"/>
<rect x="281" y="172" width="1" height="1" fill="#959595"/>
<rect x="281" y="179" width="1" height="1" fill="#959595"/>
<rect x="281" y="186" width="1" height="1" fill="#959595"/>
<rect x="281" y="193" width="1" height="1" fill="#959595"/>
<rect x="281" y="200" width="1" height="1" fill="#959595"/>
<rect x="281" y="207" width="1" height="1" fill="#959595"/>
<rect x="281" y="214" width="1" height="1" fill="#959595"/>
<rect x="281" y="221" width="1" height="1" fill="#959595"/>
<rect x="281" y="228" width="1" height="1" fill="#959595"/>
<rect x="281" y="235" width="1" height="1" fill="#959595"/>
<rect x="281" y="242" width="1" height="1" fill="#959595"/>
<rect x="281" y="249" width="1" height="1" fill="#959595"/>
<rect x="281" y="256" width="1" height="1" fill="#959595"/>
<rect x="281" y="263" width="1" height="1" fill="#959595"/>
<rect x="281" y="270" width="1" height="1" fill="#959595"/>
<rect x="281" y="277" width="1" height="1" fill="#959595"/>
<rect x="281" y="284" width="1" height="1" fill="#959595"/>
<rect x="281" y="291" width="1" height="1" fill="#959595"/>
<rect x="281" y="298" width="1" height="1" fill="#959595"/>
<rect x="281" y="305" width="1" height="1" fill="#959595"/>
<rect x="281" y="312" width="1" height="1" fill="#959595"/>
<rect x="281" y="319" width="1" height="1" fill="#959595"/>
<rect x="281" y="326" width="1" height="1" fill="#959595"/>
<rect x="281" y="333" width="1" height="1" fill="#959595"/>
<rect x="281" y="340" width="1" height="1" fill="#959595"/>
<rect x="281" y="347" width="1" height="1" fill="#959595"/>
<rect x="281" y="354" width="1" height="1" fill="#959595"/>
<rect x="281" y="361" width="1" height="1" fill="#959595"/>
<rect x="281" y="368" width="1" height="1" fill="#959595"/>
<rect x="281" y="375" width="1" height="1" fill="#959595"/>
<rect x="281" y="382" width="1" height="1" fill="#959595"/>
<rect x="281" y="389" width="1" height="1" fill="#959595"/>
<rect x="281" y="396" width="1" height="1" fill="#959595"/>
<rect x="281" y="403" width="1" height="1" fill="#959595"/>
<rect x="281" y="410" width="1" height="1" fill="#959595"/>
<rect x="281" y="417" width="1" height="1" fill="#959595"/>
<rect x="281" y="424" width="1" height="1" fill="#959595"/>
<rect x="281" y="431" width="1" height="1" fill="#959595"/>
<rect x="281" y="438" width="1" height="1" fill="#959595"/>
<rect x="331" y="172" width="1" height="1" fill="#959595"/>
<rect x="331" y="179" width="1" height="1" fill="#959595"/>
<rect x="331" y="186" width="1" height="1" fill="#959595"/>
<rect x="331" y="193" width="1" height="1" fill="#959595"/>
<rect x="331" y="200" width="1" height="1" fill="#959595"/>
<rect x="331" y="207" width="1" height="1" fill="#959595"/>
<rect x="331" y="214" width="1" height="1" fill="#959595"/>
<rect x="331" y="221" width="1" height="1" fill="#959595"/>
<rect x="331" y="228" width="1" height="1" fill="#959595"/>
<rect x="331" y="235" width="1" height="1" fill="#959595"/>
<rect x="331" y="242" width="1" height="1" fill="#959595"/>
<rect x="331" y="249" width="1" height="1" fill="#959595"/>
<rect x="331" y="256" width="1" height="1" fill="#959595"/>
<rect x="331" y="263" width="1" height="1" fill="#959595"/>
<rect x="331" y="270" width="1" height="1" fill="#959595"/>
<rect x="331" y="277" width="1" height="1" fill="#959595"/>
<rect x="331" y="284" width="1" height="1" fill="#959595"/>
<rect x="331" y="291" width="1" height="1" fill="#959595"/>
<rect x="331" y="298" width="1" height="1" fill="#959595"/>
<rect x="331" y="305" width="1" height="1" fill="#959595"/>
<rect x="331" y="312" width="1" height="1" fill="#959595"/>
<rect x="331" y="319" width="1" height="1" fill="#959595"/>
<rect x="331" y="326" width="1" height="1" fill="#959595"/>
<rect x="331" y="333" width="1" height="1" fill="#959595"/>
<rect x="331" y="340" width="1" height="1" fill="#959595"/>
<rect x="331" y="347" width="1" height="1" fill="#959595"/>
<rect x="331" y="354" width="1" height="1" fill="#959595"/>
<rect x="331" y="361" width="1" height="1" fill="#959595"/>
<rect x="331" y="368" width="1" height="1" fill="#959595"/>
<rect x="331" y="375" width="1" height="1" fill="#959595"/>
<rect x="331" y="382" width="1" height="1" fill="#959595"/>
<rect x="331" y="389" width="1" height="1" fill="#959595"/>
<rect x="331" y="396" width="1" height="1" fill="#959595"/>
<rect x="331" y="403" width="1" height="1" fill="#959595"/>
<rect x="331" y="410" width="1" height="1" fill="#959595"/>
<rect x="331" y="417" width="1" height="1" fill="#959595"/>
<rect x="331" y="424" width="1" height="1" fill="#959595"/>
<rect x="331" y="431" width="1" height="1" fill="#959595"/>
<rect x="331" y="438" width="1" height="1" fill="#959595"/>
<rect x="431" y="172" width="1" height="1" fill="#959595"/>
<rect x="431" y="179" width="1" height="1" fill="#959595"/>
<rect x="431" y="186" width="1" height="1" fill="#959595"/>
<rect x="431" y="193" width="1" height="1" fill="#959595"/>
<rect x="431" y="200" width="1" height="1" fill="#959595"/>
<rect x="431" y="207" width="1" height="1" fill="#959595"/>
<rect x="431" y="214" width="1" height="1" fill="#959595"/>
<rect x="431" y="221" width="1" height="1" fill="#959595"/>
<rect x="431" y="228" width="1" height="1" fill="#959595"/>
<rect x="431" y="235" width="1" height="1" fill="#959595"/>
<rect x="431" y="242" width="1" height="1" fill="#959595"/>
<rect x="431" y="249" width="1" height="1" fill="#959595"/>
<rect x="431" y="256" width="1" height="1" fill="#959595"/>
<rect x="431" y="263" width="1" height="1" fill="#959595"/>
<rect x="431" y="270" width="1" height="1" fill="#959595"/>
<rect x="431" y="277" width="1" height="1" fill="#959595"/>
<rect x="431" y="284" width="1" height="1" fill="#959595"/>
<rect x="431" y="291" width="1" height="1" fill="#959595"/>
<rect x="431" y="298" width="1" height="1" fill="#959595"/>
<rect x="431" y="305" width="1" height="1" fill="#959595"/>
<rect x="431" y="312" width="1" height="1" fill="#959595"/>
<rect x="431" y="319" width="1" height="1" fill="#959595"/>
<rect x="431" y="326" width="1" height="1" fill="#959595"/>
<rect x="431" y="333" width="1" height="1" fill="#959595"/>
<rect x="431" y="340" width="1" height="1" fill="#959595"/>
<rect x="431" y="347" width="1" height="1" fill="#959595"/>
<rect x="431" y="354" width="1" height="1" fill="#959595"/>
<rect x="431" y="361" width="1" height="1" fill="#959595"/>
<rect x="431" y="368" width="1" height="1" fill="#959595"/>
<rect x="431" y="375" width="1" height="1" fill="#959595"/>
<rect x="431" y="382" width="1" height="1" fill="#959595"/>
<rect x="431" y="389" width="1" height="1" fill="#959595"/>
<rect x="431" y="396" width="1" height="1" fill="#959595"/>
<rect x="431" y="403" width="1" height="1" fill="#959595"/>
<rect x="431" y="410" width="1" height="1" fill="#959595"/>
<rect x="431" y="417" width="1" height="1" fill="#959595"/>
<rect x="431" y="424" width="1" height="1" fill="#959595"/>
<rect x="431" y="431" width="1" height="1" fill="#959595"/>
<rect x="431" y="438" width="1" height="1" fill="#959595"/>
<rect x="481" y="172" width="1" height="1" fill="#959595"/>
<rect x="481" y="179" width="1" height="1" fill="#959595"/>
<rect x="481" y="186" width="1" height="1" fill="#959595"/>
<rect x="481" y="193" width="1" height="1" fill="#959595"/>
<rect x="481" y="200" width="1" height="1" fill="#959595"/>
<rect x="481" y="207" width="1" height="1" fill="#959595"/>
<rect x="481" y="214" width="1" height="1" fill="#959595"/>
<rect x="481" y="221" width="1" height="1" fill="#959595"/>
<rect x="481" y="228" width="1" height="1" fill="#959595"/>
<rect x="481" y="235" width="1" height="1" fill="#959595"/>
<rect x="481" y="242" width="1" height="1" fill="#959595"/>
<rect x="481" y="249" width="1" height="1" fill="#959595"/>
<rect x="481" y="256" width="1" height="1" fill="#959595"/>
<rect x="481" y="263" width="1" height="1" fill="#959595"/>
<rect x="481" y="270" width="1" height="1" fill="#959595"/>
<rect x="481" y="277" width="1" height="1" fill="#959595"/>
<rect x="481" y="284" width="1" height="1" fill="#959595"/>
<rect x="481" y="291" width="1" height="1" fill="#959595"/>
<rect x="481" y="298" width="1" height="1" fill="#959595"/>
<rect x="481" y="305" width="1" height="1" fill="#959595"/>
<rect x="481" y="312" width="1" height="1" fill="#959595"/>
<rect x="481" y="319" width="1" height="1" fill="#959595"/>
<rect x="481" y="326" width="1" height="1" fill="#959595"/>
<rect x="481" y="333" width="1" height="1" fill="#959595"/>
<rect x="481" y="340" width="1" height="1" fill="#959595"/>
<rect x="481" y="347" width="1" height="1" fill="#959595"/>
<rect x="481" y="354" width="1" height="1" fill="#959595"/>
<rect x="481" y="361" width="1" height="1" fill="#959595"/>
<rect x="481" y="368" width="1" height="1" fill="#959595"/>
<rect x="481" y="375" width="1" height="1" fill="#959595"/>
<rect x="481" y="382" width="1" height="1" fill="#959595"/>
<rect x="481" y="389" width="1" height="1" fill="#959595"/>
<rect x="481" y="396" width="1" height="1" fill="#959595"/>
<rect x="481" y="403" width="1" height="1" fill="#959595"/>
<rect x="481" y="410" width="1" height="1" fill="#959595"/>
<rect x="481" y="417" width="1" height="1" fill="#959595"/>
<rect x="481" y="424" width="1" height="1" fill="#959595"/>
<rect x="481" y="431" width="1" height="1" fill="#959595"/>
<rect x="481" y="438" width="1" height="1" fill="#959595"/>
<rect x="531" y="172" width="1" height="1" fill="#959595"/>
<rect x="531" y="179" width="1" height="1" fill="#959595"/>
<rect x="531" y="186" width="1" height="1" fill="#959595"/>
<rect x="531" y="193" width="1" height="1" fill="#959595"/>
<rect x="531" y="200" width="1" height="1" fill="#959595"/>
<rect x="531" y="207" width="1" height="1" fill="#959595"/>
<rect x="531" y="214" width="1" height="1" fill="#959595"/>
<rect x="531" y="221" width="1" height="1" fill="#959595"/>
<rect x="531" y="228" width="1" height="1" fill="#959595"/>
<rect x="531" y="235" width="1" height="1" fill="#959595"/>
<rect x="531" y="242" width="1" height="1" fill="#959595"/>
<rect x="531" y="249" width="1" height="1" fill="#959595"/>
<rect x="531" y="256" width="1" height="1" fill="#959595"/>
<rect x="531" y="263" width="1" height="1" fill="#959595"/>
<rect x="531" y="270" width="1" height="1" fill="#959595"/>
<rect x="531" y="277" width="1" height="1" fill="#959595"/>
<rect x="531" y="284" width="1" height="1" fill="#959595"/>
<rect x="531" y="291" width="1" height="1" fill="#959595"/>
<rect x="531" y="298" width="1" height="1" fill="#959595"/>
<rect x="531" y="305" width="1" height="1" fill="#959595"/>
<rect x="531" y="312" width="1" height="1" fill="#959595"/>
<rect x="531" y="319" width="1" height="1" fill="#959595"/>
<rect x="531" y="326" width="1" height="1" fill="#959595"/>
<rect x="531" y="333" width="1" height="1" fill="#959595"/>
<rect x="531" y="340" width="1" height="1" fill="#959595"/>
<rect x="531" y="347" width="1" height="1" fill="#959595"/>
<rect x="531" y="354" width="1" height="1" fill="#959595"/>
<rect x="531" y="361" width="1" height="1" fill="#959595"/>
<rect x="531" y="368" width="1" height="1" fill="#959595"/>
<rect x="531" y="375" width="1" height="1" fill="#959595"/>
<rect x="531" y="382" width="1" height="1" fill="#959595"/>
<rect x="531" y="389" width="1" height="1" fill="#959595"/>
<rect x="531" y="396" width="1" height="1" fill="#959595"/>
<rect x="531" y="403" width="1" height="1" fill="#959595"/>
<rect x="531" y="410" width="1" height="1" fill="#959595"/>
<rect x="531" y="417" width="1" height="1" fill="#959595"/>
<rect x="531" y="424" width="1" height="1" fill="#959595"/>
<rect x="531" y="431" width="1" height="1" fill="#959595"/>
<rect x="531" y="438" width="1" height="1" fill="#959595"/>
<rect x="581" y="172" width="1" height="1" fill="#959595"/>
<rect x="581" y="179" width="1" height="1" fill="#959595"/>
<rect x="581" y="186" width="1" height="1" fill="#959595"/>
<rect x="581" y="193" width="1" height="1" fill="#959595"/>
<rect x="581" y="200" width="1" height="1" fill="#959595"/>
<rect x="581" y="207" width="1" height="1" fill="#959595"/>
<rect x="581" y="214" width="1" height="1" fill="#959595"/>
<rect x="581" y="221" width="1" height="1" fill="#959595"/>
<rect x="581" y="228" width="1" height="1" fill="#959595"/>
<rect x="581" y="235" width="1" height="1" fill="#959595"/>
<rect x="581" y="242" width="1" height="1" fill="#959595"/>
<rect x="581" y="249" width="1" height="1" fill="#959595"/>
<rect x="581" y="256" width="1" height="1" fill="#959595"/>
<rect x="581" y="263" width="1" height="1" fill="#959595"/>
<rect x="581" y="270" width="1" height="1" fill="#959595"/>
<rect x="581" y="277" width="1" height="1" fill="#959595"/>
<rect x="581" y="284" width="1" height="1" fill="#959595"/>
<rect x="581" y="291" width="1" height="1" fill="#959595"/>
<rect x="581" y="298" width="1" height="1" fill="#959595"/>
<rect x="581" y="305" width="1" height="1" fill="#959595"/>
<rect x="581" y="312" width="1" height="1" fill="#959595"/>
<rect x="581" y="319" width="1" height="1" fill="#959595"/>
<rect x="581" y="326" width="1" height="1" fill="#959595"/>
<rect x="581" y="333" width="1" height="1" fill="#959595"/>
<rect x="581" y="340" width="1" height="1" fill="#959595"/>
<rect x="581" y="347" width="1" height="1" fill="#959595"/>
<rect x="581" y="354" width="1" height="1" fill="#959595"/>
<rect x="581" y="361" width="1" height="1" fill="#959595"/>
<rect x="581" y="368" width="1" height="1" fill="#959595"/>
<rect x="581" y="375" width="1" height="1" fill="#959595"/>
<rect x="581" y="382" width="1" height="1" fill="#959595"/>
<rect x="581" y="389" width="1" height="1" fill="#959595"/>
<rect x="581" y="396" width="1" height="1" fill="#959595"/>
<rect x="581" y="403" width="1" height="1" fill="#959595"/>
<rect x="581" y="410" width="1" height="1" fill="#959595"/>
<rect x="581" y="417" width="1" height="1" fill="#959595"/>
<rect x="581" y="424" width="1" height="1" fill="#959595"/>
<rect x="581" y="431" width="1" height="1" fill="#959595"/>
<rect x="581" y="438" width="1" height="1" fill="#959595"/>
<rect x="631" y="172" width="1" height="1" fill="#959595"/>
<rect x="631" y="179" width="1" height="1" fill="#959595"/>
<rect x="631" y="186" width="1" height="1" fill="#959595"/>
<rect x="631" y="193" width="1" height="1" fill="#959595"/>
<rect x="631" y="200" width="1" height="1" fill="#959595"/>
<rect x="631" y="207" width="1" height="1" fill="#959595"/>
<rect x="631" y="214" width="1" height="1" fill="#959595"/>
<rect x="631" y="221" width="1" height="1" fill="#959595"/>
<rect x="631" y="228" width="1" height="1" fill="#959595"/>
<rect x="631" y="235" width="1" height="1" fill="#959595"/>
<rect x="631" y="242" width="1" height="1" fill="#959595"/>
<rect x="631" y="249" width="1" height="1" fill="#959595"/>
<rect x="631" y="256" width="1" height="1" fill="#959595"/>
<rect x="631" y="263" width="1" height="1" fill="#959595"/>
<rect x="631" y="270" width="1" height="1" fill="#959595"/>
<rect x="631" y="277" width="1" height="1" fill="#959595"/>
<rect x="631" y="284" width="1" height="1" fill="#959595"/>
<rect x="631" y="291" width="1" height="1" fill="#959595"/>
<rect x="631" y="298" width="1" height="1" fill="#959595"/>
<rect x="631" y="305" width="1" height="1" fill="#959595"/>
<rect x="631" y="312" width="1" height="1" fill="#959595"/>
<rect x="631" y="319" width="1" height="1" fill="#959595"/>
<rect x="631" y="326" width="1" height="1" fill="#959595"/>
<rect x="631" y="333" width="1" height="1" fill="#959595"/>
<rect x="631" y="340" width="1" height="1" fill="#959595"/>
<rect x="631" y="347" width="1" height="1" fill="#959595"/>
<rect x="631" y="354" width="1" height="1" fill="#959595"/>
<rect x="631" y="361" width="1" height="1" fill="#959595"/>
<rect x="631" y="368" width="1" height="1" fill="#959595"/>
<rect x="631" y="375" width="1" height="1" fill="#959595"/>
<rect x="631" y="382" width="1" height="1" fill="#959595"/>
<rect x="631" y="389" width="1" height="1" fill="#959595"/>
<rect x="631" y="396" width="1" height="1" fill="#959595"/>
<rect x="631" y="403" width="1" height="1" fill="#959595"/>
<rect x="631" y="410" width="1" height="1" fill="#959595"/>
<rect x="631" y="417" width="1" height="1" fill="#959595"/>
<rect x="631" y="424" width="1" height="1" fill="#959595"/>
<rect x="631" y="431" width="1" height="1" fill="#959595"/>
<rect x="631" y="438" width="1" height="1" fill="#959595"/>
<rect x="681" y="172" width="1" height="1" fill="#959595"/>
<rect x="681" y="179" width="1" height="1" fill="#959595"/>
<rect x="681" y="186" width="1" height="1" fill="#959595"/>
<rect x="681" y="193" width="1" height="1" fill="#959595"/>
<rect x="681" y="200" width="1" height="1" fill="#959595"/>
<rect x="681" y="207" width="1" height="1" fill="#959595"/>
<rect x="681" y="214" width="1" height="1" fill="#959595"/>
<rect x="681" y="221" width="1" height="1" fill="#959595"/>
<rect x="681" y="228" width="1" height="1" fill="#959595"/>
<rect x="681" y="235" width="1" height="1" fill="#959595"/>
<rect x="681" y="242" width="1" height="1" fill="#959595"/>
<rect x="681" y="249" width="1" height="1" fill="#959595"/>
<rect x="681" y="256" width="1" height="1" fill="#959595"/>
<rect x="681" y="263" width="1" height="1" fill="#959595"/>
<rect x="681" y="270" width="1" height="1" fill="#959595"/>
<rect x="681" y="277" width="1" height="1" fill="#959595"/>
<rect x="681" y="284" width="1" height="1" fill="#959595"/>
<rect x="681" y="291" width="1" height="1" fill="#959595"/>
<rect x="681" y="298" width="1" height="1" fill="#959595"/>
<rect x="681" y="305" width="1" height="1" fill="#959595"/>
<rect x="681" y="312" width="1" height="1" fill="#959595"/>
<rect x="681" y="319" width="1" height="1" fill="#959595"/>
<rect x="681" y="326" width="1" height="1" fill="#959595"/>
<rect x="681" y="333" width="1" height="1" fill="#959595"/>
<rect x="681" y="340" width="1" height="1" fill="#959595"/>
<rect x="681" y="347" width="1" height="1" fill="#959595"/>
<rect x="681" y="354" width="1" height="1" fill="#959595"/>
<rect x="681" y="361" width="1" height="1" fill="#959595"/>
<rect x="681" y="368" width="1" height="1" fill="#959595"/>
<rect x="681" y="375" width="1" height="1" fill="#959595"/>
<rect x="681" y="382" width="1" height="1" fill="#959595"/>
<rect x="681" y="389" width="1" height="1" fill="#959595"/>
<rect x="681" y="396" width="1" height="1" fill="#959595"/>
<rect x="681" y="403" width="1" height="1" fill="#959595"/>
<rect x="681" y="410" width="1" height="1" fill="#959595"/>
<rect x="681" y="417" width="1" height="1" fill="#959595"/>
<rect x="681" y="424" width="1" height="1" fill="#959595"/>
<rect x="681" y="431" width="1" height="1" fill="#959595"/>
<rect x="681" y="438" width="1" height="1" fill="#959595"/>
<rect x="33" y="305" width="1" height="1" fill="#959595"/>
<rect x="35" y="305" width="1" height="1" fill="#959595"/>
<rect x="37" y="305" width="1" height="1" fill="#959595"/>
<rect x="39" y="305" width="1" height="1" fill="#959595"/>
<rect x="41" y="305" width="1" height="1" fill="#959595"/>
<rect x="43" y="305" width="1" height="1" fill="#959595"/>
<rect x="45" y="305" width="1" height="1" fill="#959595"/>
<rect x="47" y="305" width="1" height="1" fill="#959595"/>
<rect x="49" y="305" width="1" height="1" fill="#959595"/>
<rect x="51" y="305" width="1" height="1" fill="#959595"/>
<rect x="53" y="305" width="1" height="1" fill="#959595"/>
<rect x="55" y="305" width="1" height="1" fill="#959595"/>
<rect x="57" y="305" width="1" height="1" fill="#959595"/>
<rect x="59" y="305" width="1" height="1" fill="#959595"/>
<rect x="61" y="305" width="1" height="1" fill="#959595"/>
<rect x="63" y="305" width="1" height="1" fill="#959595"/>
<rect x="65" y="305" width="1" height="1" fill="#959595"/>
<rect x="67" y="305" width="1" height="1" fill="#959595"/>
<rect x="69" y="305" width="1" height="1" fill="#959595"/>
<rect x="71" y="305" width="1" height="1" fill="#959595"/>
<rect x="73" y="305" width="1" height="1" fill="#959595"/>
<rect x="75" y="305" width="1" height="1" fill="#959595"/>
<rect x="77" y="305" width="1" height="1" fill="#959595"/>
<rect x="79" y="305" width="1" height="1" fill="#959595"/>
<rect x="81" y="305" width="1" height="1" fill="#959595"/>
<rect x="83" y="305" width="1" height="1" fill="#959595"/>
<rect x="85" y="305" width="1" height="1" fill="#959595"/>
<rect x="87" y="305" width="1" height="1" fill="#959595"/>
<rect x="89" y="305" width="1" height="1" fill="#959595"/>
<rect x="91" y="305" width="1" height="1" fill="#959595"/>
<rect x="93" y="305" width="1" height="1" fill="#959595"/>
<rect x="95" y="305" width="1" height="1" fill="#959595"/>
<rect x="97" y="305" width="1" height="1" fill="#959595"/>
<rect x="99" y="305" width="1" height="1" fill="#959595"/>
<rect x="101" y="305" width="1" height="1" fill="#959595"/>
<rect x="103" y="305" width="1" height="1" fill="#959595"/>
<rect x="105" y="305" width="1" height="1" fill="#959595"/>
<rect x="107" y="305" width="1" height="1" fill="#959595"/>
<rect x="109" y="305" width="1" height="1" fill="#959595"/>
<rect x="111" y="305" width="1" height="1" fill="#959595"/>
<rect x="113" y="305" width="1" height="1" fill="#959595"/>
<rect x="115" y="305" width="1" height="1" fill="#959595"/>
<rect x="117" y="305" width="1" height="1" fill="#959595"/>
<rect x="119" y="305" width="1" height="1" fill="#959595"/>
<rect x="121" y="305" width="1" height="1" fill="#959595"/>
<rect x="123" y="305" width="1" height="1" fill="#959595"/>
<rect x="125" y="305" width="1" height="1" fill="#959595"/>
<rect x="127" y="305" width="1" height="1" fill="#959595"/>
<rect x="129" y="305" width="1" height="1" fill="#959595"/>
<rect x="131" y="305" width="1" height="1" fill="#959595"/>
<rect x="133" y="305" width="1" height="1" fill="#959595"/>
<rect x="135" y="305" width="1" height="1" fill="#959595"/>
<rect x="137" y="305" width="1" height="1" fill="#959595"/>
<rect x="139" y="305" width="1" height="1" fill="#959595"/>
<rect x="141" y="305" width="1" height="1" fill="#959595"/>
<rect x="143" y="305" width="1" height="1" fill="#959595"/>
<rect x="145" y="305" width="1" height="1" fill="#959595"/>
<rect x="147" y="305" width="1" height="1" fill="#959595"/>
<rect x="149" y="305" width="1" height="1" fill="#959595"/>
<rect x="151" y="305" width="1" height="1" fill="#959595"/>
<rect x="153" y="305" width="1" height="1" fill="#959595"/>
<rect x="155" y="305" width="1" height="1" fill="#959595"/>
<rect x="157" y="305" width="1" height="1" fill="#959595"/>
<rect x="159" y="305" width="1" height="1" fill="#959595"/>
<rect x="161" y="305" width="1" height="1" fill="#959595"/>
<rect x="163" y="305" width="1" height="1" fill="#959595"/>
<rect x="165" y="305" width="1" height="1" fill="#959595"/>
<rect x="167" y="305" width="1" height="1" fill="#959595"/>
<rect x="169" y="305" width="1" height="1" fill="#959595"/>
<rect x="171" y="305" width="1" height="1" fill="#959595"/>
<rect x="173" y="305" width="1" height="1" fill="#959595"/>
<rect x="175" y="305" width="1" height="1" fill="#959595"/>
<rect x="177" y="305" width="1" height="1" fill="#959595"/>
<rect x="179" y="305" width="1" height="1" fill="#959595"/>
<rect x="181" y="305" width="1" height="1" fill="#959595"/>
<rect x="183" y="305" width="1" height="1" fill="#959595"/>
<rect x="185" y="305" width="1" height="1" fill="#959595"/>
<rect x="187" y="305" width="1" height="1" fill="#959595"/>
<rect x="189" y="305" width="1" height="1" fill="#959595"/>
<rect x="191" y="305" width="1" height="1" fill="#959595"/>
<rect x="193" y="305" width="1" height="1" fill="#959595"/>
<rect x="195" y="305" width="1" height="1" fill="#959595"/>
<rect x="197" y="305" width="1" height="1" fill="#959595"/>
<rect x="199" y="305" width="1" height="1" fill="#959595"/>
<rect x="201" y="305" width="1" height="1" fill="#959595"/>
<rect x="203" y="305" width="1" height="1" fill="#959595"/>
<rect x="205" y="305" width="1" height="1" fill="#959595"/>
<rect x="207" y="305" width="1" height="1" fill="#959595"/>
<rect x="209" y="305" width="1" height="1" fill="#959595"/>
<rect x="211" y="305" width="1" height="1" fill="#959595"/>
<rect x="213" y="305" width="1" height="1" fill="#959595"/>
<rect x="215" y="305" width="1" height="1" fill="#959595"/>
<rect x="217" y="305" width="1" height="1" fill="#959595"/>
<rect x="219" y="305" width="1" height="1" fill="#959595"/>
<rect x="221" y="305" width="1" height="1" fill="#959595"/>
<rect x="223" y="305" width="1" height="1" fill="#959595"/>
<rect x="225" y="305" width="1" height="1" fill="#959595"/>
<rect x="227" y="305" width="1" height="1" fill="#959595"/>
<rect x="229" y="305" width="1" height="1" fill="#959595"/>
<rect x="231" y="305" width="1" height="1" fill="#959595"/>
<rect x="233" y="305" width="1" height="1" fill="#959595"/>
<rect x="235" y="305" width="1" height="1" fill="#959595"/>
<rect x="237" y="305" width="1" height="1" fill="#959595"/>
<rect x="239" y="305" width="1" height="1" fill="#959595"/>
<rect x="241" y="305" width="1" height="1" fill="#959595"/>
<rect x="243" y="305" width="1" height="1" fill="#959595"/>
<rect x="245" y="305" width="1" height="1" fill="#959595"/>
<rect x="247" y="305" width="1" height="1" fill="#959595"/>
<rect x="249" y="305" width="1" height="1" fill="#959595"/>
<rect x="251" y="305" width="1" height="1" fill="#959595"/>
<rect x="253" y="305" width="1" height="1" fill="#959595"/>
<rect x="255" y="305" width="1" height="1" fill="#959595"/>
<rect x="257" y="305" width="1" height="1" fill="#959595"/>
<rect x="259" y="305" width="1" height="1" fill="#959595"/>
<rect x="261" y="305" width="1" height="1" fill="#959595"/>
<rect x="263" y="305" width="1" height="1" fill="#959595"/>
<rect x="265" y="305" width="1" height="1" fill="#959595"/>
<rect x="267" y="305" width="1" height="1" fill="#959595"/>
<rect x="269" y="305" width="1" height="1" fill="#959595"/>
<rect x="271" y="305" width="1" height="1" fill="#959595"/>
<rect x="273" y="305" width="1" height="1" fill="#959595"/>
<rect x="275" y="305" width="1" height="1" fill="#959595"/>
<rect x="277" y="305" width="1" height="1" fill="#959595"/>
<rect x="279" y="305" width="1" height="1" fill="#959595"/>
<rect x="281" y="305" width="1" height="1" fill="#959595"/>
<rect x="283" y="305" width="1" height="1" fill="#959595"/>
<rect x="285" y="305" width="1" height="1" fill="#959595"/>
<rect x="287" y="305" width="1" height="1" fill="#959595"/>
<rect x="289" y="305" width="1" height="1" fill="#959595"/>
<rect x="291" y="305" width="1" height="1" fill="#959595"/>
<rect x="293" y="305" width="1" height="1" fill="#959595"/>
<rect x="295" y="305" width="1" height="1" fill="#959595"/>
<rect x="297" y="305" width="1" height="1" fill="#959595"/>
<rect x="299" y="305" width="1" height="1" fill="#959595"/>
<rect x="301" y="305" width="1" height="1" fill="#959595"/>
<rect x="303" y="305" width="1" height="1" fill="#959595"/>
<rect x="305" y="305" width="1" height="1" fill="#959595"/>
<rect x="307" y="305" width="1" height="1" fill="#959595"/>
<rect x="309" y="305" width="1" height="1" fill="#959595"/>
<rect x="311" y="305" width="1" height="1" fill="#959595"/>
<rect x="313" y="305" width="1" height="1" fill="#959595"/>
<rect x="315" y="305" width="1" height="1" fill="#959595"/>
<rect x="317" y="305" width="1" height="1" fill="#959595"/>
<rect x="319" y="305" width="1" height="1" fill="#959595"/>
<rect x="321" y="305" width="1" height="1" fill="#959595"/>
<rect x="323" y="305" width="1" height="1" fill="#959595"/>
<rect x="325" y="305" width="1" height="1" fill="#959595"/>
<rect x="327" y="305" width="1" height="1" fill="#959595"/>
<rect x="329" y="305" width="1" height="1" fill="#959595"/>
<rect x="331" y="305" width="1" height="1" fill="#959595"/>
<rect x="333" y="305" width="1" height="1" fill="#959595"/>
<rect x="335" y="305" width="1" height="1" fill="#959595"/>
<rect x="337" y="305" width="1" height="1" fill="#959595"/>
<rect x="339" y="305" width="1" height="1" fill="#959595"/>
<rect x="341" y="305" width="1" height="1" fill="#959595"/>
<rect x="343" y="305" width="1" height="1" fill="#959595"/>
<rect x="345" y="305" width="1" height="1" fill="#959595"/>
<rect x="347" y="305" width="1" height="1" fill="#959595"/>
<rect x="349" y="305" width="1" height="1" fill="#959595"/>
<rect x="351" y="305" width="1" height="1" fill="#959595"/>
<rect x="353" y="305" width="1" height="1" fill="#959595"/>
<rect x="355" y="305" width="1" height="1" fill="#959595"/>
<rect x="357" y="305" width="1" height="1" fill="#959595"/>
<rect x="359" y="305" width="1" height="1" fill="#959595"/>
<rect x="361" y="305" width="1" height="1" fill="#959595"/>
<rect x="363" y="305" width="1" height="1" fill="#959595"/>
<rect x="365" y="305" width="1" height="1" fill="#959595"/>
<rect x="367" y="305" width="1" height="1" fill="#959595"/>
<rect x="369" y="305" width="1" height="1" fill="#959595"/>
<rect x="371" y="305" width="1" height="1" fill="#959595"/>
<rect x="373" y="305" width="1" height="1" fill="#959595"/>
<rect x="375" y="305" width="1" height="1" fill="#959595"/>
<rect x="377" y="305" width="1" height="1" fill="#959595"/>
<rect x="379" y="305" width="1" height="1" fill="#959595"/>
<rect x="381" y="305" width="1" height="1" fill="#959595"/>
<rect x="383" y="305" width="1" height="1" fill="#959595"/>
<rect x="385" y="305" width="1" height="1" fill="#959595"/>
<rect x="387" y="305" width="1" height="1" fill="#959595"/>
<rect x="389" y="305" width="1" height="1" fill="#959595"/>
<rect x="391" y="305" width="1" height="1" fill="#959595"/>
<rect x="393" y="305" width="1" height="1" fill="#959595"/>
<rect x="395" y="305" width="1" height="1" fill="#959595"/>
<rect x="397" y="305" width="1" height="1" fill="#959595"/>
<rect x="399" y="305" width="1" height="1" fill="#959595"/>
<rect x="401" y="305" width="1" height="1" fill="#959595"/>
<rect x="403" y="305" width="1" height="1" fill="#959595"/>
<rect x="405" y="305" width="1" height="1" fill="#959595"/>
<rect x="407" y="305" width="1" height="1" fill="#959595"/>
<rect x="409" y="305" width="1" height="1" fill="#959595"/>
<rect x="411" y="305" width="1" height="1" fill="#959595"/>
<rect x="413" y="305" width="1" height="1" fill="#959595"/>
<rect x="415" y="305" width="1" height="1" fill="#959595"/>
<rect x="417" y="305" width="1" height="1" fill="#959595"/>
<rect x="419" y="305" width="1" height="1" fill="#959595"/>
<rect x="421" y="305" width="1" height="1" fill="#959595"/>
<rect x="423" y="305" width="1" height="1" fill="#959595"/>
<rect x="425" y="305" width="1" height="1" fill="#959595"/>
<rect x="427" y="305" width="1" height="1" fill="#959595"/>
<rect x="429" y="305" width="1" height="1" fill="#959595"/>
<rect x="431" y="305" width="1" height="1" fill="#959595"/>
<rect x="433" y="305" width="1" height="1" fill="#959595"/>
<rect x="435" y="305" width="1" height="1" fill="#959595"/>
<rect x="437" y="305" width="1" height="1" fill="#959595"/>
<rect x="439" y="305" width="1" height="1" fill="#959595"/>
<rect x="441" y="305" width="1" height="1" fill="#959595"/>
<rect x="443" y="305" width="1" height="1" fill="#959595"/>
<rect x="445" y="305" width="1" height="1" fill="#959595"/>
<rect x="447" y="305" width="1" height="1" fill="#959595"/>
<rect x="449" y="305" width="1" height="1" fill="#959595"/>
<rect x="451" y="305" width="1" height="1" fill="#959595"/>
<rect x="453" y="305" width="1" height="1" fill="#959595"/>
<rect x="455" y="305" width="1" height="1" fill="#959595"/>
<rect x="457" y="305" width="1" height="1" fill="#959595"/>
<rect x="459" y="305" width="1" height="1" fill="#959595"/>
<rect x="461" y="305" width="1" height="1" fill="#959595"/>
<rect x="463" y="305" width="1" height="1" fill="#959595"/>
<rect x="465" y="305" width="1" height="1" fill="#959595"/>
<rect x="467" y="305" width="1" height="1" fill="#959595"/>
<rect x="469" y="305" width="1" height="1" fill="#959595"/>
<rect x="471" y="305" width="1" height="1" fill="#959595"/>
<rect x="473" y="305" width="1" height="1" fill="#959595"/>
<rect x="475" y="305" width="1" height="1" fill="#959595"/>
<rect x="477" y="305" width="1" height="1" fill="#959595"/>
<rect x="479" y="305" width="1" height="1" fill="#959595"/>
<rect x="481" y="305" width="1" height="1" fill="#959595"/>
<rect x="483" y="305" width="1" height="1" fill="#959595"/>
<rect x="485" y="305" width="1" height="1" fill="#959595"/>
<rect x="487" y="305" width="1" height="1" fill="#959595"/>
<rect x="489" y="305" width="1" height="1" fill="#959595"/>
<rect x="491" y="305" width="1" height="1" fill="#959595"/>
<rect x="493" y="305" width="1" height="1" fill="#959595"/>
<rect x="495" y="305" width="1" height="1" fill="#959595"/>
<rect x="497" y="305" width="1" height="1" fill="#959595"/>
<rect x="499" y="305" width="1" height="1" fill="#959595"/>
<rect x="501" y="305" width="1" height="1" fill="#959595"/>
<rect x="503" y="305" width="1" height="1" fill="#959595"/>
<rect x="505" y="305" width="1" height="1" fill="#959595"/>
<rect x="507" y="305" width="1" height="1" fill="#959595"/>
<rect x="509" y="305" width="1" height="1" fill="#959595"/>
<rect x="511" y="305" width="1" height="1" fill="#959595"/>
<rect x="513" y="305" width="1" height="1" fill="#959595"/>
<rect x="515" y="305" width="1" height="1" fill="#959595"/>
<rect x="517" y="305" width="1" height="1" fill="#959595"/>
<rect x="519" y="305" width="1" height="1" fill="#959595"/>
<rect x="521" y="305" width="1" height="1" fill="#959595"/>
<rect x="523" y="305" width="1" height="1" fill="#959595"/>
<rect x="525" y="305" width="1" height="1" fill="#959595"/>
<rect x="527" y="305" width="1" height="1" fill="#959595"/>
<rect x="529" y="305" width="1" height="1" fill="#959595"/>
<rect x="531" y="305" width="1" height="1" fill="#959595"/>
<rect x="533" y="305" width="1" height="1" fill="#959595"/>
<rect x="535" y="305" width="1" height="1" fill="#959595"/>
<rect x="537" y="305" width="1" height="1" fill="#959595"/>
<rect x="539" y="305" width="1" height="1" fill="#959595"/>
<rect x="541" y="305" width="1" height="1" fill="#959595"/>
<rect x="543" y="305" width="1" height="1" fill="#959595"/>
<rect x="545" y="305" width="1" height="1" fill="#959595"/>
<rect x="547" y="305" width="1" height="1" fill="#959595"/>
<rect x="549" y="305" width="1" height="1" fill="#959595"/>
<rect x="551" y="305" width="1" height="1" fill="#959595"/>
<rect x="553" y="305" width="1" height="1" fill="#959595"/>
<rect x="555" y="305" width="1" height="1" fill="#959595"/>
<rect x="557" y="305" width="1" height="1" fill="#959595"/>
<rect x="559" y="305" width="1" height="1" fill="#959595"/>
<rect x="561" y="305" width="1" height="1" fill="#959595"/>
<rect x="563" y="305" width="1" height="1" fill="#959595"/>
<rect x="565" y="305" width="1" height="1" fill="#959595"/>
<rect x="567" y="305" width="1" height="1" fill="#959595"/>
<rect x="569" y="305" width="1" height="1" fill="#959595"/>
<rect x="571" y="305" width="1" height="1" fill="#959595"/>
<rect x="573" y="305" width="1" height="1" fill="#959595"/>
<rect x="575" y="305" width="1" height="1" fill="#959595"/>
<rect x="577" y="305" width="1" height="1" fill="#959595"/>
<rect x="579" y="305" width="1" height="1" fill="#959595"/>
<rect x="581" y="305" width="1" height="1" fill="#959595"/>
<rect x="583" y="305" width="1" height="1" fill="#959595"/>
<rect x="585" y="305" width="1" height="1" fill="#959595"/>
<rect x="587" y="305" width="1" height="1" fill="#959595"/>
<rect x="589" y="305" width="1" height="1" fill="#959595"/>
<rect x="591" y="305" width="1" height="1" fill="#959595"/>
<rect x="593" y="305" width="1" height="1" fill="#959595"/>
<rect x="595" y="305" width="1" height="1" fill="#959595"/>
<rect x="597" y="305" width="1" height="1" fill="#959595"/>
<rect x="599" y="305" width="1" height="1" fill="#959595"/>
<rect x="601" y="305" width="1" height="1" fill="#959595"/>
<rect x="603" y="305" width="1" height="1" fill="#959595"/>
<rect x="605" y="305" width="1" height="1" fill="#959595"/>
<rect x="607" y="305" width="1" height="1" fill="#959595"/>
<rect x="609" y="305" width="1" height="1" fill="#959595"/>
<rect x="611" y="305" width="1" height="1" fill="#959595"/>
<rect x="613" y="305" width="1" height="1" fill="#959595"/>
<rect x="615" y="305" width="1" height="1" fill="#959595"/>
<rect x="617" y="305" width="1" height="1" fill="#959595"/>
<rect x="619" y="305" width="1" height="1" fill="#959595"/>
<rect x="621" y="305" width="1" height="1" fill="#959595"/>
<rect x="623" y="305" width="1" height="1" fill="#959595"/>
<rect x="625" y="305" width="1" height="1" fill="#959595"/>
<rect x="627" y="305" width="1" height="1" fill="#959595"/>
<rect x="629" y="305" width="1" height="1" fill="#959595"/>
<rect x="631" y="305" width="1" height="1" fill="#959595"/>
<rect x="633" y="305" width="1" height="1" fill="#959595"/>
<rect x="635" y="305" width="1" height="1" fill="#959595"/>
<rect x="637" y="305" width="1" height="1" fill="#959595"/>
<rect x="639" y="305" width="1" height="1" fill="#959595"/>
<rect x="641" y="305" width="1" height="1" fill="#959595"/>
<rect x="643" y="305" width="1" height="1" fill="#959595"/>
<rect x="645" y="305" width="1" height="1" fill="#959595"/>
<rect x="647" y="305" width="1" height="1" fill="#959595"/>
<rect x="649" y="305" width="1" height="1" fill="#959595"/>
<rect x="651" y="305" width="1" height="1" fill="#959595"/>
<rect x="653" y="305" width="1" height="1" fill="#959595"/>
<rect x="655" y="305" width="1" height="1" fill="#959595"/>
<rect x="657" y="305" width="1" height="1" fill="#959595"/>
<rect x="659" y="305" width="1" height="1" fill="#959595"/>
<rect x="661" y="305" width="1" height="1" fill="#959595"/>
<rect x="663" y="305" width="1" height="1" fill="#959595"/>
<rect x="665" y="305" width="1" height="1" fill="#959595"/>
<rect x="667" y="305" width="1" height="1" fill="#959595"/>
<rect x="669" y="305" width="1" height="1" fill="#959595"/>
<rect x="671" y="305" width="1" height="1" fill="#959595"/>
<rect x="673" y="305" width="1" height="1" fill="#959595"/>
<rect x="675" y="305" width="1" height="1" fill="#959595"/>
<rect x="677" y="305" width="1" height="1" fill="#959595"/>
<rect x="679" y="305" width="1" height="1" fill="#959595"/>
<rect x="681" y="305" width="1" height="1" fill="#959595"/>
<rect x="683" y="305" width="1" height="1" fill="#959595"/>
<rect x="685" y="305" width="1" height="1" fill="#959595"/>
<rect x="687" y="305" width="1" height="1" fill="#959595"/>
<rect x="689" y="305" width="1" height="1" fill="#959595"/>
<rect x="41" y="304" width="1" height="3" fill="#959595"/>
<rect x="51" y="304" width="1" height="3" fill="#959595"/>
<rect x="61" y="304" width="1" height="3" fill="#959595"/>
<rect x="71" y="304" width="1" height="3" fill="#959595"/>
<rect x="81" y="304" width="1" height="3" fill="#959595"/>
<rect x="91" y="304" width="1" height="3" fill="#959595"/>
<rect x="101" y="304" width="1" height="3" fill="#959595"/>
<rect x="111" y="304" width="1" height="3" fill="#959595"/>
<rect x="121" y="304" width="1" height="3" fill="#959595"/>
<rect x="131" y="304" width="1" height="3" fill="#959595"/>
<rect x="141" y="304" width="1" height="3" fill="#959595"/>
<rect x="151" y="304" width="1" height="3" fill="#959595"/>
<rect x="161" y="304" width="1" height="3" fill="#959595"/>
<rect x="171" y="304" width="1" height="3" fill="#959595"/>
<rect x="181" y="304" width="1" height="3" fill="#959595"/>
<rect x="191" y="304" width="1" height="3" fill="#959595"/>
<rect x="201" y="304" width="1" height="3" fill="#959595"/>
<rect x="211" y="304" width="1" height="3" fill="#959595"/>
<rect x="221" y="304" width="1" height="3" fill="#959595"/>
<rect x="231" y="304" width="1" height="3" fill="#959595"/>
<rect x="241" y="304" width="1" height="3" fill="#959595"/>
<rect x="251" y="304" width="1" height="3" fill="#959595"/>
<rect x="261" y="304" width="1" height="3" fill="#959595"/>
<rect x="271" y="304" width="1" height="3" fill="#959595"/>
<rect x="281" y="304" width="1" height="3" fill="#959595"/>
<rect x="291" y="304" width="1" height="3" fill="#959595"/>
<rect x="301" y="304" width="1" height="3" fill="#959595"/>
<rect x="311" y="304" width="1" height="3" fill="#959595"/>
<rect x="321" y="304" width="1" height="3" fill="#959595"/>
<rect x="331" y="304" width="1" height="3" fill="#959595"/>
<rect x="341" y="304" width="1" height="3" fill="#959595"/>
<rect x="351" y="304" width="1" height="3" fill="#959595"/>
<rect x="361" y="304" width="1" height="3" fill="#959595"/>
<rect x="371" y="304" width="1" height="3" fill="#959595"/>
<rect x="381" y="304" width="1" height="3" fill="#959595"/>
<rect x="391" y="304" width="1" height="3" fill="#959595"/>
<rect x="401" y="304" width="1" height="3" fill="#959595"/>
<rect x="411" y="304" width="1" height="3" fill="#959595"/>
<rect x="421" y="304" width="1" height="3" fill="#959595"/>
<rect x="431" y="304" width="1" height="3" fill="#959595"/>
<rect x="441" y="304" width="1" height="3" fill="#959595"/>
<rect x="451" y="304" width="1" height="3" fill="#959595"/>
<rect x="461" y="304" width="1" height="3" fill="#959595"/>
<rect x="471" y="304" width="1" height="3" fill="#959595"/>
<rect x="481" y="304" width="1" height="3" fill="#959595"/>
<rect x="491" y="304" width="1" height="3" fill="#959595"/>
<rect x="501" y="304" width="1" height="3" fill="#959595"/>
<rect x="511" y="304" width="1" height="3" fill="#959595"/>
<rect x="521" y="304" width="1" height="3" fill="#959595"/>
<rect x="531" y="304" width="1" height="3" fill="#959595"/>
<rect x="541" y="304" width="1" height="3" fill="#959595"/>
<rect x="551" y="304" width="1" height="3" fill="#959595"/>
<rect x="561" y="304" width="1" height="3" fill="#959595"/>
<rect x="571" y="304" width="1" height="3" fill="#959595"/>
<rect x="581" y="304" width="1" height="3" fill="#959595"/>
<rect x="591" y="304" width="1" height="3" fill="#959595"/>
<rect x="601" y="304" width="1" height="3" fill="#959595"/>
<rect x="611" y="304" width="1" height="3" fill="#959595"/>
<rect x="621" y="304" width="1" height="3" fill="#959595"/>
<rect x="631" y="304" width="1" height="3" fill="#959595"/>
<rect x="641" y="304" width="1" height="3" fill="#959595"/>
<rect x="651" y="304" width="1" height="3" fill="#959595"/>
<rect x="661" y="304" width="1" height="3" fill="#959595"/>
<rect x="671" y="304" width="1" height="3" fill="#959595"/>
<rect x="681" y="304" width="1" height="3" fill="#959595"/>
<rect x="381" y="167" width="1" height="1" fill="#959595"/>
<rect x="381" y="169" width="1" height="1" fill="#959595"/>
<rect x="381" y="171" width="1" height="1" fill="#959595"/>
<rect x="381" y="173" width="1" height="1" fill="#959595"/>
<rect x="381" y="175" width="1" height="1" fill="#959595"/>
<rect x="381" y="177" width="1" height="1" fill="#959595"/>
<rect x="381" y="179" width="1" height="1" fill="#959595"/>
<rect x="381" y="181" width="1" height="1" fill="#959595"/>
<rect x="381" y="183" width="1" height="1" fill="#959595"/>
<rect x="381" y="185" width="1" height="1" fill="#959595"/>
<rect x="381" y="187" width="1" height="1" fill="#959595"/>
<rect x="381" y="189" width="1" height="1" fill="#959595"/>
<rect x="381" y="191" width="1" height="1" fill="#959595"/>
<rect x="381" y="193" width="1" height="1" fill="#959595"/>
<rect x="381" y="195" width="1" height="1" fill="#959595"/>
<rect x="381" y="197" width="1" height="1" fill="#959595"/>
<rect x="381" y="199" width="1" height="1" fill="#959595"/>
<rect x="381" y="201" width="1" height="1" fill="#959595"/>
<rect x="381" y="203" width="1" height="1" fill="#959595"/>
<rect x="381" y="205" width="1" height="1" fill="#959595"/>
<rect x="381" y="207" width="1" height="1" fill="#959595"/>
<rect x="381" y="209" width="1" height="1" fill="#959595"/>
<rect x="381" y="211" width="1" height="1" fill="#959595"/>
<rect x="381" y="213" width="1" height="1" fill="#959595"/>
<rect x="381" y="215" width="1" height="1" fill="#959595"/>
<rect x="381" y="217" width="1" height="1" fill="#959595"/>
<rect x="381" y="219" width="1" height="1" fill="#959595"/>
<rect x="381" y="221" width="1" height="1" fill="#959595"/>
<rect x="381" y="223" width="1" height="1" fill="#959595"/>
<rect x="381" y="225" width="1" height="1" fill="#959595"/>
<rect x="381" y="227" width="1" height="1" fill="#959595"/>
<rect x="381" y="229" width="1" height="1" fill="#959595"/>
<rect x="381" y="231" width="1" height="1" fill="#959595"/>
<rect x="381" y="233" width="1" height="1" fill="#959595"/>
<rect x="381" y="235" width="1" height="1" fill="#959595"/>
<rect x="381" y="237" width="1" height="1" fill="#959595"/>
<rect x="381" y="239" width="1" height="1" fill="#959595"/>
<rect x="381" y="241" width="1" height="1" fill="#959595"/>
<rect x="381" y="243" width="1" height="1" fill="#959595"/>
<rect x="381" y="245" width="1" height="1" fill="#959595"/>
<rect x="381" y="247" width="1" height="1" fill="#959595"/>
<rect x="381" y="249" width="1" height="1" fill="#959595"/>
<rect x="381" y="251" width="1" height="1" fill="#959595"/>
<rect x="381" y="253" width="1" height="1" fill="#959595"/>
<rect x="381" y="255" width="1" height="1" fill="#959595"/>
<rect x="381" y="257" width="1" height="1" fill="#959595"/>
<rect x="381" y="259" width="1" height="1" fill="#959595"/>
<rect x="381" y="261" width="1" height="1" fill="#959595"/>
<rect x="381" y="263" width="1" height="1" fill="#959595"/>
<rect x="381" y="265" width="1" height="1" fill="#959595"/>
<rect x="381" y="267" width="1" height="1" fill="#959595"/>
<rect x="381" y="269" width="1" height="1" fill="#959595"/>
<rect x="381" y="271" width="1" height="1" fill="#959595"/>
<rect x="381" y="273" width="1" height="1" fill="#959595"/>
<rect x="381" y="275" width="1" height="1" fill="#959595"/>
<rect x="381" y="277" width="1" height="1" fill="#959595"/>
<rect x="381" y="279" width="1" height="1" fill="#959595"/>
<rect x="381" y="281" width="1" height="1" fill="#959595"/>
<rect x="381" y="283" width="1" height="1" fill="#959595"/>
<rect x="381" y="285" width="1" height="1" fill="#959595"/>
<rect x="381" y="287" width="1" height="1" fill="#959595"/>
<rect x="381" y="289" width="1" height="1" fill="#959595"/>
<rect x="381" y="291" width="1" height="1" fill="#959595"/>
<rect x="381" y="293" width="1" height="1" fill="#959595"/>
<rect x="381" y="295" width="1" height="1" fill="#959595"/>
<rect x="381" y="297" width="1" height="1" fill="#959595"/>
<rect x="381" y="299" width="1" height="1" fill="#959595"/>
<rect x="381" y="301" width="1" height="1" fill="#959595"/>
<rect x="381" y="303" width="1" height="1" fill="#959595"/>
<rect x="381" y="305" width="1" height="1" fill="#959595"/>
<rect x="381" y="307" width="1" height="1" fill="#959595"/>
<rect x="381" y="309" width="1" height="1" fill="#959595"/>
<rect x="381" y="311" width="1" height="1" fill="#959595"/>
<rect x="381" y="313" width="1" height="1" fill="#959595"/>
<rect x="381" y="315" width="1" height="1" fill="#959595"/>
<rect x="381" y="317" width="1" height="1" fill="#959595"/>
<rect x="381" y="319" width="1" height="1" fill="#959595"/>
<rect x="381" y="321" width="1" height="1" fill="#959595"/>
<rect x="381" y="323" width="1" height="1" fill="#959595"/>
<rect x="381" y="325" width="1" height="1" fill="#959595"/>
<rect x="381" y="327" width="1" height="1" fill="#959595"/>
<rect x="381" y="329" width="1" height="1" fill="#959595"/>
<rect x="381" y="331" width="1" height="1" fill="#959595"/>
<rect x="381" y="333" width="1" height="1" fill="#959595"/>
<rect x="381" y="335" width="1" height="1" fill="#959595"/>
<rect x="381" y="337" width="1" height="1" fill="#959595"/>
<rect x="381" y="339" width="1" height="1" fill="#959595"/>
<rect x="381" y="341" width="1" height="1" fill="#959595"/>
<rect x="381" y="343" width="1" height="1" fill="#959595"/>
<rect x="381" y="345" width="1" height="1" fill="#959595"/>
<rect x="381" y="347" width="1" height="1" fill="#959595"/>
<rect x="381" y="349" width="1" height="1" fill="#959595"/>
<rect x="381" y="351" width="1" height="1" fill="#959595"/>
<rect x="381" y="353" width="1" height="1" fill="#959595"/>
<rect x="381" y="355" width="1" height="1" fill="#959595"/>
<rect x="381" y="357" width="1" height="1" fill="#959595"/>
<rect x="381" y="359" width="1" height="1" fill="#959595"/>
<rect x="381" y="361" width="1" height="1" fill="#959595"/>
<rect x="381" y="363" width="1" height="1" fill="#959595"/>
<rect x="381" y="365" width="1" height="1" fill="#959595"/>
<rect x="381" y="367" width="1" height="1" fill="#959595"/>
<rect x="381" y="369" width="1" height="1" fill="#959595"/>
<rect x="381" y="371" width="1" height="1" fill="#959595"/>
<rect x="381" y="373" width="1" height="1" fill="#959595"/>
<rect x="381" y="375" width="1" height="1" fill="#959595"/>
<rect x="381" y="377" width="1" height="1" fill="#959595"/>
<rect x="381" y="379" width="1" height="1" fill="#959595"/>
<rect x="381" y="381" width="1" height="1" fill="#959595"/>
<rect x="381" y="383" width="1" height="1" fill="#959595"/>
<rect x="381" y="385" width="1" height="1" fill="#959595"/>
<rect x="381" y="387" width="1" height="1" fill="#959595"/>
<rect x="381" y="389" width="1" height="1" fill="#959595"/>
<rect x="381" y="391" width="1" height="1" fill="#959595"/>
<rect x="381" y="393" width="1" height="1" fill="#959595"/>
<rect x="381" y="395" width="1" height="1" fill="#959595"/>
<rect x="381" y="397" width="1" height="1" fill="#959595"/>
<rect x="381" y="399" width="1" height="1" fill="#959595"/>
<rect x="381" y="401" width="1" height="1" fill="#959595"/>
<rect x="381" y="403" width="1" height="1" fill="#959595"/>
<rect x="381" y="405" width="1" height="1" fill="#959595"/>
<rect x="381" y="407" width="1" height="1" fill="#959595"/>
<rect x="381" y="409" width="1" height="1" fill="#959595"/>
<rect x="381" y="411" width="1" height="1" fill="#959595"/>
<rect x="381" y="413" width="1" height="1" fill="#959595"/>
<rect x="381" y="415" width="1" height="1" fill="#959595"/>
<rect x="381" y="417" width="1" height="1" fill="#959595"/>
<rect x="381" y="419" width="1" height="1" fill="#959595"/>
<rect x="381" y="421" width="1" height="1" fill="#959595"/>
<rect x="381" y="423" width="1" height="1" fill="#959595"/>
<rect x="381" y="425" width="1" height="1" fill="#959595"/>
<rect x="381" y="427" width="1" height="1" fill="#959595"/>
<rect x="381" y="429" width="1" height="1" fill="#959595"/>
<rect x="381" y="431" width="1" height="1" fill="#959595"/>
<rect x="381" y="433" width="1" height="1" fill="#959595"/>
<rect x="381" y="435" width="1" height="1" fill="#959595"/>
<rect x="381" y="437" width="1" height="1" fill="#959595"/>
<rect x="381" y="439" width="1" height="1" fill="#959595"/>
<rect x="381" y="441" width="1" height="1" fill="#959595"/>
<rect x="381" y="443" width="1" height="1" fill="#959595"/>
<rect x="380" y="172" width="3" height="1" fill="#959595"/>
<rect x="381" y="171" width="1" height="3" fill="#959595"/>
<rect x="380" y="179" width="3" height="1" fill="#959595"/>
<rect x="380" y="186" width="3" height="1" fill="#959595"/>
<rect x="381" y="185" width="1" height="3" fill="#959595"/>
<rect x="380" y="193" width="3" height="1" fill="#959595"/>
<rect x="380" y="200" width="3" height="1" fill="#959595"/>
<rect x="381" y="199" width="1" height="3" fill="#959595"/>
<rect x="380" y="207" width="3" height="1" fill="#959595"/>
<rect x="380" y="214" width="3" height="1" fill="#959595"/>
<rect x="381" y="213" width="1" height="3" fill="#959595"/>
<rect x="380" y="221" width="3" height="1" fill="#959595"/>
<rect x="380" y="228" width="3" height="1" fill="#959595"/>
<rect x="381" y="227" width="1" height="3" fill="#959595"/>
<rect x="380" y="235" width="3" height="1" fill="#959595"/>
<rect x="380" y="242" width="3" height="1" fill="#959595"/>
<rect x="381" y="241" width="1" height="3" fill="#959595"/>
<rect x="380" y="249" width="3" height="1" fill="#959595"/>
<rect x="380" y="256" width="3" height="1" fill="#959595"/>
<rect x="381" y="255" width="1" height="3" fill="#959595"/>
<rect x="380" y="263" width="3" height="1" fill="#959595"/>
<rect x="380" y="270" width="3" height="1" fill="#959595"/>
<rect x="381" y="269" width="1" height="3" fill="#959595"/>
<rect x="380" y="277" width="3" height="1" fill="#959595"/>
<rect x="380" y="284" width="3" height="1" fill="#959595"/>
<rect x="381" y="283" width="1" height="3" fill="#959595"/>
<rect x="380" y="291" width="3" height="1" fill="#959595"/>
<rect x="380" y="298" width="3" height="1" fill="#959595"/>
<rect x="381" y="297" width="1" height="3" fill="#959595"/>
<rect x="380" y="305" width="3" height="1" fill="#959595"/>
<rect x="380" y="312" width="3" height="1" fill="#959595"/>
<rect x="381" y="311" width="1" height="3" fill="#959595"/>
<rect x="380" y="319" width="3" height="1" fill="#959595"/>
<rect x="380" y="326" width="3" height="1" fill="#959595"/>
<rect x="381" y="325" width="1" height="3" fill="#959595"/>
<rect x="380" y="333" width="3" height="1" fill="#959595"/>
<rect x="380" y="340" width="3" height="1" fill="#959595"/>
<rect x="381" y="339" width="1" height="3" fill="#959595"/>
<rect x="380" y="347" width="3" height="1" fill="#959595"/>
<rect x="380" y="354" width="3" height="1" fill="#959595"/>
<rect x="381" y="353" width="1" height="3" fill="#959595"/>
<rect x="380" y="361" width="3" height="1" fill="#959595"/>
<rect x="380" y="368" width="3" height="1" fill="#959595"/>
<rect x="381" y="367" width="1" height="3" fill="#959595"/>
<rect x="380" y="375" width="3" height="1" fill="#959595"/>
<rect x="380" y="382" width="3" height="1" fill="#959595"/>
<rect x="381" y="381" width="1" height="3" fill="#959595"/>
<rect x="380" y="389" width="3" height="1" fill="#959595"/>
<rect x="380" y="396" width="3" height="1" fill="#959595"/>
<rect x="381" y="395" width="1" height="3" fill="#959595"/>
<rect x="380" y="403" width="3" height="1" fill="#959595"/>
<rect x="380" y="410" width="3" height="1" fill="#959595"/>
<rect x="381" y="409" width="1" height="3" fill="#959595"/>
<rect x="380" y="417" width="3" height="1" fill="#959595"/>
<rect x="380" y="424" width="3" height="1" fill="#959595"/>
<rect x="381" y="423" width="1" height="3" fill="#959595"/>
<rect x="380" y="431" width="3" height="1" fill="#959595"/>
<rect x="380" y="438" width="3" height="1" fill="#959595"/>
<rect x="381" y="437" width="1" height="3" fill="#959595"/>
<rect x="32" y="47" width="337" height="4" fill="#eeee2c"/>
<rect x="34" y="49" width="1" height="2" fill="#3a3a10"/>
<rect x="36" y="49" width="1" height="2" fill="#3a3a10"/>
<rect x="39" y="49" width="1" height="2" fill="#3a3a10"/>
<rect x="41" y="49" width="1" height="2" fill="#3a3a10"/>
<rect x="43" y="49" width="1" height="2" fill="#3a3a10"/>
<rect x="44" y="49" width="1" height="2" fill="#3a3a10"/>
<rect x="47" y="49" width="1" height="2" fill="#3a3a10"/>
<rect x="54" y="49" width="1" height="2" fill="#3a3a10"/>
<rect x="57" y="49" width="1" height="2" fill="#3a3a10"/>
<rect x="58" y="49" width="1" height="2" fill="#3a3a10"/>
<rect x="61" y="49" width="1" height="2" fill="#3a3a10"/>
<rect x="66" y="49" width="1" height="2" fill="#3a3a10"/>
<rect x="67" y="49" width="1" height="2" fill="#3a3a10"/>
<rect x="84" y="49" width="1" height="2" fill="#3a3a10"/>
<rect x="87" y="49" width="1" height="2" fill="#3a3a10"/>
<rect x="89" y="49" width="1" height="2" fill="#3a3a10"/>
<rect x="103" y="49" width="1" height="2" fill="#3a3a10"/>
<rect x="111" y="49" width="1" height="2" fill="#3a3a10"/>
<rect x="113" y="49" width="1" height="2" fill="#3a3a10"/>
<rect x="114" y="49" width="1" height="2" fill="#3a3a10"/>
<rect x="115" y="49" width="1" height="2" fill="#3a3a10"/>
<rect x="117" y="49" width="1" height="2" fill="#3a3a10"/>
<rect x="121" y="49" width="1" height="2" fill="#3a3a10"/>
<rect x="132" y="49" width="1" height="2" fill="#3a3a10"/>
<rect x="133" y="49" width="1" height="2" fill="#3a3a10"/>
<rect x="139" y="49" width="1" height="2" fill="#3a3a10"/>
<rect x="148" y="49" width="1" height="2" fill="#3a3a10"/>
<rect x="155" y="49" width="1" height="2" fill="#3a3a10"/>
<rect x="157" y="49" width="1" height="2" fill="#3a3a10"/>
<rect x="158" y="49" width="1" height="2" fill="#3a3a10"/>
<rect x="160" y="49" width="1" height="2" fill="#3a3a10"/>
<rect x="162" y="49" width="1" height="2" fill="#3a3a10"/>
<rect x="163" y="49" width="1" height="2" fill="#3a3a10"/>
<rect x="164" y="49" width="1" height="2" fill="#3a3a10"/>
<rect x="165" y="49" width="1" height="2" fill="#3a3a10"/>
<rect x="167" y="49" width="1" height="2" fill="#3a3a10"/>
<rect x="170" y="49" width="1" height="2" fill="#3a3a10"/>
<rect x="174" y="49" width="1" height="2" fill="#3a3a10"/>
<rect x="179" y="49" width="1" height="2" fill="#3a3a10"/>
<rect x="180" y="49" width="1" height="2" fill="#3a3a10"/>
<rect x="184" y="49" width="1" height="2" fill="#3a3a10"/>
<rect x="185" y="49" width="1" height="2" fill="#3a3a10"/>
<rect x="188" y="49" width="1" height="2" fill="#3a3a10"/>
<rect x="190" y="49" width="1" height="2" fill="#3a3a10"/>
<rect x="197" y="49" width="1" height="2" fill="#3a3a10"/>
<rect x="212" y="49" width="1" height="2" fill="#3a3a10"/>
<rect x="213" y="49" width="1" height="2" fill="#3a3a10"/>
<rect x="225" y="49" width="1" height="2" fill="#3a3a10"/>
<rect x="233" y="49" width="1" height="2" fill="#3a3a10"/>
<rect x="239" y="49" width="1" height="2" fill="#3a3a10"/>
<rect x="248" y="49" width="1" height="2" fill="#3a3a10"/>
<rect x="249" y="49" width="1" height="2" fill="#3a3a10"/>
<rect x="250" y="49" width="1" height="2" fill="#3a3a10"/>
<rect x="253" y="49" width="1" height="2" fill="#3a3a10"/>
<rect x="259" y="49" width="1" height="2" fill="#3a3a10"/>
<rect x="260" y="49" width="1" height="2" fill="#3a3a10"/>
<rect x="275" y="49" width="1" height="2" fill="#3a3a10"/>
<rect x="286" y="49" width="1" height="2" fill="#3a3a10"/>
<rect x="288" y="49" width="1" height="2" fill="#3a3a10"/>
<rect x="289" y="49" width="1" height="2" fill="#3a3a10"/>
<rect x="291" y="49" width="1" height="2" fill="#3a3a10"/>
<rect x="299" y="49" width="1" height="2" fill="#3a3a10"/>
<rect x="324" y="49" width="1" height="2" fill="#3a3a10"/>
<rect x="325" y="49" width="1" height="2" fill="#3a3a10"/>
<rect x="327" y="49" width="1" height="2" fill="#3a3a10"/>
<rect x="329" y="49" width="1" height="2" fill="#3a3a10"/>
<rect x="333" y="49" width="1" height="2" fill="#3a3a10"/>
<rect x="336" y="49" width="1" height="2" fill="#3a3a10"/>
<rect x="345" y="49" width="1" height="2" fill="#3a3a10"/>
<rect x="349" y="49" width="1" height="2" fill="#3a3a10"/>
<rect x="352" y="49" width="1" height="2" fill="#3a3a10"/>
<rect x="355" y="49" width="1" height="2" fill="#3a3a10"/>
<rect x="359" y="49" width="1" height="2" fill="#3a3a10"/>
<rect x="363" y="49" width="1" height="2" fill="#3a3a10"/>
<rect x="365" y="49" width="1" height="2" fill="#3a3a10"/>
<rect x="369" y="49" width="1" height="45" fill="#9c9c40"/>
<rect x="369" y="93" width="14" height="1" fill="#d0d034"/>
<rect x="369" y="92" width="1" height="1" fill="#a0a030"/>
<rect x="373" y="92" width="1" height="1" fill="#a0a030"/>
<rect x="374" y="92" width="1" height="1" fill="#a0a030"/>
<rect x="378" y="92" width="1" height="1" fill="#a0a030"/>
<rect x="379" y="92" width="1" height="1" fill="#a0a030"/>
<rect x="382" y="92" width="1" height="1" fill="#a0a030"/>
<rect x="383" y="47" width="2" height="3" fill="#eeee2c"/>
<rect x="383" y="50" width="1" height="43" fill="#9c9c40"/>
<rect x="385" y="50" width="1" height="43" fill="#9c9c40"/>
<rect x="385" y="93" width="7" height="1" fill="#d0d034"/>
<rect x="388" y="92" width="1" height="1" fill="#a0a030"/>
<rect x="390" y="92" width="1" height="1" fill="#a0a030"/>
<rect x="392" y="47" width="5" height="3" fill="#eeee2c"/>
<rect x="392" y="50" width="1" height="43" fill="#9c9c40"/>
<rect x="397" y="50" width="1" height="43" fill="#9c9c40"/>
<rect x="397" y="93" width="1" height="1" fill="#d0d034"/>
<rect x="398" y="47" width="3" height="3" fill="#eeee2c"/>
<rect x="398" y="50" width="1" height="43" fill="#9c9c40"/>
<rect x="401" y="50" width="1" height="43" fill="#9c9c40"/>
<rect x="401" y="93" width="9" height="1" fill="#d0d034"/>
<rect x="401" y="92" width="1" height="1" fill="#a0a030"/>
<rect x="404" y="92" width="1" height="1" fill="#a0a030"/>
<rect x="405" y="92" width="1" height="1" fill="#a0a030"/>
<rect x="407" y="92" width="1" height="1" fill="#a0a030"/>
<rect x="408" y="92" width="1" height="1" fill="#a0a030"/>
<rect x="409" y="92" width="1" height="1" fill="#a0a030"/>
<rect x="410" y="47" width="5" height="3" fill="#eeee2c"/>
<rect x="410" y="50" width="1" height="43" fill="#9c9c40"/>
<rect x="415" y="50" width="1" height="43" fill="#9c9c40"/>
<rect x="415" y="93" width="2" height="1" fill="#d0d034"/>
<rect x="415" y="92" width="1" height="1" fill="#a0a030"/>
<rect x="416" y="92" width="1" height="1" fill="#a0a030"/>
<rect x="417" y="47" width="4" height="3" fill="#eeee2c"/>
<rect x="417" y="50" width="1" height="43" fill="#9c9c40"/>
<rect x="421" y="50" width="1" height="43" fill="#9c9c40"/>
<rect x="421" y="93" width="7" height="1" fill="#d0d034"/>
<rect x="421" y="92" width="1" height="1" fill="#a0a030"/>
<rect x="422" y="92" width="1" height="1" fill="#a0a030"/>
<rect x="424" y="92" width="1" height="1" fill="#a0a030"/>
<rect x="426" y="92" width="1" height="1" fill="#a0a030"/>
<rect x="427" y="92" width="1" height="1" fill="#a0a030"/>
<rect x="428" y="47" width="5" height="3" fill="#eeee2c"/>
<rect x="428" y="50" width="1" height="43" fill="#9c9c40"/>
<rect x="433" y="50" width="1" height="43" fill="#9c9c40"/>
<rect x="433" y="93" width="1" height="1" fill="#d0d034"/>
<rect x="433" y="92" width="1" height="1" fill="#a0a030"/>
<rect x="434" y="47" width="5" height="3" fill="#eeee2c"/>
<rect x="434" y="50" width="1" height="43" fill="#9c9c40"/>
<rect x="439" y="50" width="1" height="43" fill="#9c9c40"/>
<rect x="439" y="93" width="7" height="1" fill="#d0d034"/>
<rect x="439" y="92" width="1" height="1" fill="#a0a030"/>
<rect x="440" y="92" width="1" height="1" fill="#a0a030"/>
<rect x="443" y="92" width="1" height="1" fill="#a0a030"/>
<rect x="446" y="47" width="5" height="3" fill="#eeee2c"/>
<rect x="446" y="50" width="1" height="43" fill="#9c9c40"/>
<rect x="451" y="50" width="1" height="43" fill="#9c9c40"/>
<rect x="451" y="93" width="1" height="1" fill="#d0d034"/>
<rect x="451" y="92" width="1" height="1" fill="#a0a030"/>
<rect x="452" y="47" width="3" height="3" fill="#eeee2c"/>
<rect x="452" y="50" width="1" height="43" fill="#9c9c40"/>
<rect x="455" y="50" width="1" height="43" fill="#9c9c40"/>
<rect x="455" y="93" width="9" height="1" fill="#d0d034"/>
<rect x="463" y="92" width="1" height="1" fill="#a0a030"/>
<rect x="464" y="47" width="5" height="3" fill="#eeee2c"/>
<rect x="464" y="50" width="1" height="43" fill="#9c9c40"/>
<rect x="469" y="50" width="1" height="43" fill="#9c9c40"/>
<rect x="469" y="93" width="1" height="1" fill="#d0d034"/>
<rect x="470" y="47" width="3" height="3" fill="#eeee2c"/>
<rect x="470" y="50" width="1" height="43" fill="#9c9c40"/>
<rect x="473" y="50" width="1" height="43" fill="#9c9c40"/>
<rect x="473" y="93" width="7" height="1" fill="#d0d034"/>
<rect x="476" y="92" width="1" height="1" fill="#a0a030"/>
<rect x="477" y="92" width="1" height="1" fill="#a0a030"/>
<rect x="478" y="92" width="1" height="1" fill="#a0a030"/>
<rect x="479" y="92" width="1" height="1" fill="#a0a030"/>
<rect x="480" y="47" width="3" height="3" fill="#eeee2c"/>
<rect x="480" y="50" width="1" height="43" fill="#9c9c40"/>
<rect x="483" y="50" width="1" height="43" fill="#9c9c40"/>
<rect x="483" y="93" width="1" height="1" fill="#d0d034"/>
<rect x="484" y="47" width="3" height="3" fill="#eeee2c"/>
<rect x="484" y="50" width="1" height="43" fill="#9c9c40"/>
<rect x="487" y="50" width="1" height="43" fill="#9c9c40"/>
<rect x="487" y="93" width="1" height="1" fill="#d0d034"/>
<rect x="487" y="92" width="1" height="1" fill="#a0a030"/>
<rect x="488" y="47" width="3" height="3" fill="#eeee2c"/>
<rect x="488" y="50" width="1" height="43" fill="#9c9c40"/>
<rect x="491" y="50" width="1" height="43" fill="#9c9c40"/>
<rect x="491" y="93" width="1" height="1" fill="#d0d034"/>
<rect x="491" y="92" width="1" height="1" fill="#a0a030"/>
<rect x="492" y="47" width="3" height="3" fill="#eeee2c"/>
<rect x="492" y="50" width="1" height="43" fill="#9c9c40"/>
<rect x="495" y="50" width="1" height="43" fill="#9c9c40"/>
<rect x="495" y="93" width="3" height="1" fill="#d0d034"/>
<rect x="495" y="92" width="1" height="1" fill="#a0a030"/>
<rect x="498" y="47" width="3" height="3" fill="#eeee2c"/>
<rect x="498" y="50" width="1" height="43" fill="#9c9c40"/>
<rect x="501" y="50" width="1" height="43" fill="#9c9c40"/>
<rect x="501" y="93" width="5" height="1" fill="#d0d034"/>
<rect x="502" y="92" width="1" height="1" fill="#a0a030"/>
<rect x="503" y="92" width="1" height="1" fill="#a0a030"/>
<rect x="504" y="92" width="1" height="1" fill="#a0a030"/>
<rect x="506" y="47" width="3" height="3" fill="#eeee2c"/>
<rect x="506" y="50" width="1" height="43" fill="#9c9c40"/>
<rect x="509" y="50" width="1" height="43" fill="#9c9c40"/>
<rect x="509" y="93" width="1" height="1" fill="#d0d034"/>
<rect x="509" y="92" width="1" height="1" fill="#a0a030"/>
<rect x="510" y="47" width="3" height="3" fill="#eeee2c"/>
<rect x="510" y="50" width="1" height="43" fill="#9c9c40"/>
<rect x="513" y="50" width="1" height="43" fill="#9c9c40"/>
<rect x="513" y="93" width="5" height="1" fill="#d0d034"/>
<rect x="514" y="92" width="1" height="1" fill="#a0a030"/>
<rect x="518" y="47" width="5" height="3" fill="#eeee2c"/>
<rect x="518" y="50" width="1" height="43" fill="#9c9c40"/>
<rect x="523" y="50" width="1" height="43" fill="#9c9c40"/>
<rect x="523" y="93" width="3" height="1" fill="#d0d034"/>
<rect x="523" y="92" width="1" height="1" fill="#a0a030"/>
<rect x="525" y="92" width="1" height="1" fill="#a0a030"/>
<rect x="526" y="47" width="5" height="3" fill="#eeee2c"/>
<rect x="526" y="50" width="1" height="43" fill="#9c9c40"/>
<rect x="531" y="50" width="1" height="43" fill="#9c9c40"/>
<rect x="531" y="93" width="5" height="1" fill="#d0d034"/>
<rect x="532" y="92" width="1" height="1" fill="#a0a030"/>
<rect x="536" y="47" width="6" height="3" fill="#eeee2c"/>
<rect x="536" y="50" width="1" height="43" fill="#9c9c40"/>
<rect x="542" y="50" width="1" height="43" fill="#9c9c40"/>
<rect x="542" y="93" width="2" height="1" fill="#d0d034"/>
<rect x="542" y="92" width="1" height="1" fill="#a0a030"/>
<rect x="544" y="47" width="3" height="3" fill="#eeee2c"/>
<rect x="544" y="50" width="1" height="43" fill="#9c9c40"/>
<rect x="547" y="50" width="1" height="43" fill="#9c9c40"/>
<rect x="547" y="93" width="7" height="1" fill="#d0d034"/>
<rect x="547" y="92" width="1" height="1" fill="#a0a030"/>
<rect x="548" y="92" width="1" height="1" fill="#a0a030"/>
<rect x="549" y="92" width="1" height="1" fill="#a0a030"/>
<rect x="551" y="92" width="1" height="1" fill="#a0a030"/>
<rect x="552" y="92" width="1" height="1" fill="#a0a030"/>
<rect x="553" y="92" width="1" height="1" fill="#a0a030"/>
<rect x="554" y="47" width="5" height="3" fill="#eeee2c"/>
<rect x="554" y="50" width="1" height="43" fill="#9c9c40"/>
<rect x="559" y="50" width="1" height="43" fill="#9c9c40"/>
<rect x="559" y="93" width="2" height="1" fill="#d0d034"/>
<rect x="559" y="92" width="1" height="1" fill="#a0a030"/>
<rect x="561" y="47" width="4" height="3" fill="#eeee2c"/>
<rect x="561" y="50" width="1" height="43" fill="#9c9c40"/>
<rect x="565" y="50" width="1" height="43" fill="#9c9c40"/>
<rect x="565" y="93" width="6" height="1" fill="#d0d034"/>
<rect x="571" y="47" width="8" height="3" fill="#eeee2c"/>
<rect x="571" y="50" width="1" height="43" fill="#9c9c40"/>
<rect x="579" y="50" width="1" height="43" fill="#9c9c40"/>
<rect x="579" y="93" width="9" height="1" fill="#d0d034"/>
<rect x="588" y="50" width="1" height="43" fill="#9c9c40"/>
<rect x="588" y="47" width="80" height="4" fill="#eeee2c"/>
<rect x="591" y="49" width="1" height="2" fill="#3a3a10"/>
<rect x="594" y="49" width="1" height="2" fill="#3a3a10"/>
<rect x="600" y="49" width="1" height="2" fill="#3a3a10"/>
<rect x="611" y="49" width="1" height="2" fill="#3a3a10"/>
<rect x="612" y="49" width="1" height="2" fill="#3a3a10"/>
<rect x="614" y="49" width="1" height="2" fill="#3a3a10"/>
<rect x="621" y="49" width="1" height="2" fill="#3a3a10"/>
<rect x="627" y="49" width="1" height="2" fill="#3a3a10"/>
<rect x="630" y="49" width="1" height="2" fill="#3a3a10"/>
<rect x="643" y="49" width="1" height="2" fill="#3a3a10"/>
<rect x="644" y="49" width="1" height="2" fill="#3a3a10"/>
<rect x="649" y="49" width="1" height="2" fill="#3a3a10"/>
<rect x="650" y="49" width="1" height="2" fill="#3a3a10"/>
<rect x="659" y="49" width="1" height="2" fill="#3a3a10"/>
<rect x="661" y="49" width="1" height="2" fill="#3a3a10"/>
<rect x="664" y="49" width="1" height="2" fill="#3a3a10"/>
<rect x="32" y="200" width="216" height="3" fill="#eeee2c"/>
<rect x="38" y="199" width="1" height="1" fill="#b8b830"/>
<rect x="39" y="199" width="1" height="1" fill="#b8b830"/>
<rect x="54" y="199" width="1" height="1" fill="#b8b830"/>
<rect x="58" y="199" width="1" height="1" fill="#b8b830"/>
<rect x="70" y="199" width="1" height="1" fill="#b8b830"/>
<rect x="71" y="199" width="1" height="1" fill="#b8b830"/>
<rect x="98" y="199" width="1" height="1" fill="#b8b830"/>
<rect x="101" y="199" width="1" height="1" fill="#b8b830"/>
<rect x="108" y="199" width="1" height="1" fill="#b8b830"/>
<rect x="110" y="199" width="1" height="1" fill="#b8b830"/>
<rect x="118" y="199" width="1" height="1" fill="#b8b830"/>
<rect x="120" y="199" width="1" height="1" fill="#b8b830"/>
<rect x="125" y="199" width="1" height="1" fill="#b8b830"/>
<rect x="146" y="199" width="1" height="1" fill="#b8b830"/>
<rect x="149" y="199" width="1" height="1" fill="#b8b830"/>
<rect x="152" y="199" width="1" height="1" fill="#b8b830"/>
<rect x="159" y="199" width="1" height="1" fill="#b8b830"/>
<rect x="160" y="199" width="1" height="1" fill="#b8b830"/>
<rect x="174" y="199" width="1" height="1" fill="#b8b830"/>
<rect x="184" y="199" width="1" height="1" fill="#b8b830"/>
<rect x="196" y="199" width="1" height="1" fill="#b8b830"/>
<rect x="207" y="199" width="1" height="1" fill="#b8b830"/>
<rect x="217" y="199" width="1" height="1" fill="#b8b830"/>
<rect x="232" y="199" width="1" height="1" fill="#b8b830"/>
<rect x="236" y="199" width="1" height="1" fill="#b8b830"/>
<rect x="243" y="199" width="1" height="1" fill="#b8b830"/>
<rect x="247" y="202" width="1" height="105" fill="#b0b048"/>
<rect x="247" y="305" width="135" height="2" fill="#eeee2c"/>
<rect x="254" y="304" width="1" height="1" fill="#b0b030"/>
<rect x="259" y="304" width="1" height="1" fill="#b0b030"/>
<rect x="262" y="304" width="1" height="1" fill="#b0b030"/>
<rect x="267" y="304" width="1" height="1" fill="#b0b030"/>
<rect x="270" y="304" width="1" height="1" fill="#b0b030"/>
<rect x="271" y="304" width="1" height="1" fill="#b0b030"/>
<rect x="272" y="304" width="1" height="1" fill="#b0b030"/>
<rect x="277" y="304" width="1" height="1" fill="#b0b030"/>
<rect x="278" y="304" width="1" height="1" fill="#b0b030"/>
<rect x="279" y="304" width="1" height="1" fill="#b0b030"/>
<rect x="280" y="304" width="1" height="1" fill="#b0b030"/>
<rect x="281" y="304" width="1" height="1" fill="#b0b030"/>
<rect x="284" y="304" width="1" height="1" fill="#b0b030"/>
<rect x="292" y="304" width="1" height="1" fill="#b0b030"/>
<rect x="294" y="304" width="1" height="1" fill="#b0b030"/>
<rect x="298" y="304" width="1" height="1" fill="#b0b030"/>
<rect x="299" y="304" width="1" height="1" fill="#b0b030"/>
<rect x="313" y="304" width="1" height="1" fill="#b0b030"/>
<rect x="316" y="304" width="1" height="1" fill="#b0b030"/>
<rect x="324" y="304" width="1" height="1" fill="#b0b030"/>
<rect x="326" y="304" width="1" height="1" fill="#b0b030"/>
<rect x="334" y="304" width="1" height="1" fill="#b0b030"/>
<rect x="336" y="304" width="1" height="1" fill="#b0b030"/>
<rect x="337" y="304" width="1" height="1" fill="#b0b030"/>
<rect x="339" y="304" width="1" height="1" fill="#b0b030"/>
<rect x="340" y="304" width="1" height="1" fill="#b0b030"/>
<rect x="341" y="304" width="1" height="1" fill="#b0b030"/>
<rect x="343" y="304" width="1" height="1" fill="#b0b030"/>
<rect x="344" y="304" width="1" height="1" fill="#b0b030"/>
<rect x="346" y="304" width="1" height="1" fill="#b0b030"/>
<rect x="353" y="304" width="1" height="1" fill="#b0b030"/>
<rect x="357" y="304" width="1" height="1" fill="#b0b030"/>
<rect x="360" y="304" width="1" height="1" fill="#b0b030"/>
<rect x="364" y="304" width="1" height="1" fill="#b0b030"/>
<rect x="365" y="304" width="1" height="1" fill="#b0b030"/>
<rect x="366" y="304" width="1" height="1" fill="#b0b030"/>
<rect x="374" y="304" width="1" height="1" fill="#b0b030"/>
<rect x="379" y="304" width="1" height="1" fill="#b0b030"/>
<rect x="382" y="202" width="1" height="105" fill="#b0b048"/>
<rect x="382" y="200" width="21" height="3" fill="#eeee2c"/>
<rect x="389" y="199" width="1" height="1" fill="#b8b830"/>
<rect x="390" y="199" width="1" height="1" fill="#b8b830"/>
<rect x="402" y="202" width="1" height="112" fill="#b0b048"/>
<rect x="402" y="305" width="81" height="2" fill="#eeee2c"/>
<rect x="405" y="304" width="1" height="1" fill="#b0b030"/>
<rect x="410" y="304" width="1" height="1" fill="#b0b030"/>
<rect x="411" y="304" width="1" height="1" fill="#b0b030"/>
<rect x="412" y="304" width="1" height="1" fill="#b0b030"/>
<rect x="415" y="304" width="1" height="1" fill="#b0b030"/>
<rect x="419" y="304" width="1" height="1" fill="#b0b030"/>
<rect x="434" y="304" width="1" height="1" fill="#b0b030"/>
<rect x="435" y="304" width="1" height="1" fill="#b0b030"/>
<rect x="440" y="304" width="1" height="1" fill="#b0b030"/>
<rect x="441" y="304" width="1" height="1" fill="#b0b030"/>
<rect x="442" y="304" width="1" height="1" fill="#b0b030"/>
<rect x="443" y="304" width="1" height="1" fill="#b0b030"/>
<rect x="447" y="304" width="1" height="1" fill="#b0b030"/>
<rect x="452" y="304" width="1" height="1" fill="#b0b030"/>
<rect x="453" y="304" width="1" height="1" fill="#b0b030"/>
<rect x="455" y="304" width="1" height="1" fill="#b0b030"/>
<rect x="459" y="304" width="1" height="1" fill="#b0b030"/>
<rect x="463" y="304" width="1" height="1" fill="#b0b030"/>
<rect x="468" y="304" width="1" height="1" fill="#b0b030"/>
<rect x="469" y="304" width="1" height="1" fill="#b0b030"/>
<rect x="471" y="304" width="1" height="1" fill="#b0b030"/>
<rect x="474" y="304" width="1" height="1" fill="#b0b030"/>
<rect x="479" y="304" width="1" height="1" fill="#b0b030"/>
<rect x="482" y="202" width="1" height="105" fill="#b0b048"/>
<rect x="482" y="200" width="12" height="3" fill="#eeee2c"/>
<rect x="489" y="199" width="1" height="1" fill="#b8b830"/>
</svg>
<!-- window brackets + M label -->
<svg class="a" style="left:0;top:0" width="804" height="483" shape-rendering="crispEdges">
<rect x="346" y="35" width="1" height="117" fill="#f4f4f4"/>
<rect x="346" y="35" width="5" height="1" fill="#f4f4f4"/>
<rect x="346" y="151" width="5" height="1" fill="#f4f4f4"/>
<rect x="416" y="35" width="1" height="117" fill="#f4f4f4"/>
<rect x="412" y="35" width="5" height="1" fill="#f4f4f4"/>
<rect x="412" y="151" width="5" height="1" fill="#f4f4f4"/>
</svg>
<div class="t" style="left:356px;top:137px;color:#f4f4f4;font-size:16px;">M&nbsp; 50.0µs</div>
<!-- T markers -->
<svg class="a" style="left:0;top:0" width="804" height="483">
<path d="M376,34 H386.5 V43.5 L381.25,48 L376,43.5 Z" fill="#24e0e6"/>
<text x="381.3" y="42" font-family="Liberation Sans" font-size="7.5" fill="#000" text-anchor="middle">T</text>
<path d="M376,166 H386.5 V175.5 L381.25,180 L376,175.5 Z" fill="#24e0e6"/>
<text x="381.3" y="174" font-family="Liberation Sans" font-size="7.5" fill="#000" text-anchor="middle">T</text>
<path d="M13,299 H25 L31,305 L25,311 H13 Z" fill="#f0f020"/>
<text x="20.5" y="309.5" font-family="Liberation Sans" font-weight="bold" font-size="11" fill="#000" text-anchor="middle">2</text>
</svg>
<!-- top-right small square -->
<div class="a" style="left:668px;top:33px;width:26px;height:21px;background:#141414;border:2px solid #9a9a9a;border-right:none;"></div>
<div class="a" style="left:671px;top:36px;width:20px;height:16px;background:#3c3c3c;border:1px solid #565656;"></div>

<!-- popup right column -->
<div class="a" style="left:592px;top:53px;width:101px;height:312px;background:#141414;border:1px solid #666;"></div>
<div class="a" style="left:593px;top:54px;width:99px;height:20px;background:#000;border-bottom:1px solid #767676;"></div>
<div class="row" style="left:593px;top:75px;width:99px;">Edge</div>
<div class="row" style="left:593px;top:104px;width:99px;">Pulse</div>
<div class="row" style="left:593px;top:133px;width:99px;">Video</div>
<div class="row" style="left:593px;top:162px;width:99px;">Slope</div>
<div class="row" style="left:593px;top:191px;width:99px;">Runt</div>
<div class="row" style="left:593px;top:220px;width:99px;">Window</div>
<div class="row" style="left:593px;top:249px;width:99px;">Delay</div>
<div class="row" style="left:593px;top:278px;width:99px;">TimeOut</div>
<div class="row" style="left:593px;top:307px;width:99px;">Duration</div>
<div class="row" style="left:593px;top:336px;width:99px;">SetupHold</div>
<div class="a" style="left:492px;top:74px;width:101px;height:278px;background:#141414;border:1px solid #666;"></div>
<div class="a" style="left:493px;top:75px;width:99px;height:45px;background:#21507f;border-top:1px solid #3f7fc0;border-left:2px solid #2f6fb8;border-bottom:1px solid #5c5c5c;"></div>
<div class="t s" style="left:493px;top:101px;width:99px;text-align:center;color:#f4f4f4;font-size:16px;">Nth Edge</div>
<svg class="a" style="left:0;top:0" width="804" height="483" shape-rendering="crispEdges">
<rect x="529" y="79" width="4" height="1" fill="#f0f0f0"/><rect x="532" y="79" width="1" height="14" fill="#f0f0f0"/>
<rect x="537" y="79" width="1" height="14" fill="#f0f0f0"/><rect x="542" y="79" width="1" height="14" fill="#f0f0f0"/><rect x="547" y="79" width="1" height="14" fill="#f0f0f0"/>
<rect x="552" y="79" width="1" height="2" fill="#f0f0f0"/><rect x="552" y="83" width="1" height="2" fill="#f0f0f0"/><rect x="552" y="87" width="1" height="2" fill="#f0f0f0"/><rect x="552" y="90" width="1" height="3" fill="#f0f0f0"/><rect x="552" y="92" width="4" height="1" fill="#f0f0f0"/>
</svg>
<div class="row" style="left:493px;top:120px;width:99px;">Pattern</div>
<div class="row" style="left:493px;top:149px;width:99px;">RS232</div>
<div class="row" style="left:493px;top:178px;width:99px;">I2C</div>
<div class="row" style="left:493px;top:207px;width:99px;">SPI</div>
<div class="row" style="left:493px;top:236px;width:99px;">CAN</div>
<div class="row" style="left:493px;top:265px;width:99px;">CAN-FD</div>
<div class="row" style="left:493px;top:294px;width:99px;">LIN</div>
<div class="row" style="left:493px;top:323px;width:99px;">FlexRay</div>
<svg class="a" style="left:0;top:0" width="804" height="483">
<g transform="translate(617,63.5) rotate(45) scale(0.92)" fill="#e4e4e4">
<rect x="-4.5" y="-9.5" width="9" height="4.5" rx="1"/>
<rect x="-3" y="-6" width="6" height="5.5"/>
<rect x="-6" y="-1" width="12" height="3" rx="1"/>
<rect x="-0.7" y="2" width="1.4" height="6.5"/>
</g>
<path d="M662.6,62.2 A5.3,5.3 0 1 1 665.5,68.6" fill="none" stroke="#e4e4e4" stroke-width="1.5"/>
<path d="M661,64 L666.5,65.5 L662.5,70 Z" fill="#e4e4e4"/>
</svg>
<div class="a" style="left:692px;top:32px;width:109px;height:416px;background:#111;border-left:2px solid #8a8a8a;border-top:2px solid #8a8a8a;border-right:1px solid #8a8a8a;border-bottom:2px solid #8a8a8a;"></div>
<div class="a" style="left:694px;top:34px;width:106px;height:38px;background:#0c0c0c;"></div>
<div class="mbtn" style="top:35px;">Type</div>
<div class="mval" style="top:72px;background:#21507f;"></div>
<div class="a" style="left:694px;top:112px;width:106px;height:2px;background:#8a8a8a;"></div>
<div class="a" style="left:694px;top:114px;width:106px;height:38px;background:#0c0c0c;"></div>
<div class="mbtn" style="top:115px;">Sourc</div>
<div class="mval" style="top:152px;background:#111;"></div>
<div class="a" style="left:694px;top:192px;width:106px;height:2px;background:#8a8a8a;"></div>
<div class="a" style="left:694px;top:194px;width:106px;height:38px;background:#0c0c0c;"></div>
<div class="mbtn" style="top:195px;">Slope</div>
<div class="mval" style="top:232px;background:#111;"></div>
<div class="a" style="left:694px;top:272px;width:106px;height:2px;background:#8a8a8a;"></div>
<div class="a" style="left:694px;top:274px;width:106px;height:38px;background:#0c0c0c;"></div>
<div class="mbtn" style="top:275px;">Idle Time</div>
<div class="mval" style="top:312px;background:#111;"></div>
<div class="a" style="left:694px;top:352px;width:106px;height:2px;background:#8a8a8a;"></div>
<div class="a" style="left:694px;top:354px;width:106px;height:38px;background:#0c0c0c;"></div>
<div class="mbtn" style="top:355px;">Edge Num</div>
<div class="mval" style="top:392px;background:#111;"></div>
<div class="a" style="left:694px;top:432px;width:106px;height:2px;background:#8a8a8a;"></div>
<div class="t s" style="left:694px;top:87px;width:106px;text-align:center;color:#f4f4f4;font-size:16px;">Nth Edge</div>
<div class="t s" style="left:694px;top:168px;width:106px;text-align:center;color:#f4f4f4;font-size:16px;">CH2</div>
<div class="t s" style="left:714px;top:248px;width:76px;text-align:center;color:#f4f4f4;font-size:16px;">Rise</div>
<div class="t s" style="left:714px;top:328px;width:84px;text-align:center;color:#f4f4f4;font-size:16px;">1.00ms</div>
<div class="t s" style="left:714px;top:408px;width:84px;text-align:center;color:#f4f4f4;font-size:16px;">1</div>
<div class="a" style="left:694px;top:434px;width:106px;height:12px;background:#000;"></div>
<svg class="a" style="left:0;top:0" width="804" height="483">
<path d="M697,101 L702,104.5 L697,108 Z" fill="#fff"/>
<path d="M702,180 L697,184.5 L702,189 Z" fill="#fff"/>
<circle cx="700.5" cy="245" r="4.2" fill="none" stroke="#b4b4b4" stroke-width="1"/>
<circle cx="700.5" cy="245" r="2.6" fill="#f4f4f4"/>
<circle cx="700.5" cy="261.2" r="4.2" fill="none" stroke="#b4b4b4" stroke-width="1"/>
<path d="M712.29,323.09 A7.6,7.6 0 0 1 701.04,332.53" fill="none" stroke="#ececec" stroke-width="1.4"/>
<path d="M698.51,329.51 A7.6,7.6 0 0 1 709.76,320.07" fill="none" stroke="#ececec" stroke-width="1.4"/>
<path d="M711.29,318.09 L712.79,323.39 L708.29,321.59" fill="none" stroke="#e0e0e0" stroke-width="1"/>
<path d="M699.51,334.51 L698.01,329.21 L702.51,331.01" fill="none" stroke="#e0e0e0" stroke-width="1"/>
<circle cx="705.4" cy="326.3" r="4.8" fill="#505050"/>
<circle cx="705.4" cy="326.3" r="2.8" fill="#2a2a2a"/>
<circle cx="710.20" cy="326.30" r="1.1" fill="#f4f4f4"/>
<circle cx="708.79" cy="329.69" r="1.1" fill="#f4f4f4"/>
<circle cx="705.40" cy="331.10" r="1.1" fill="#f4f4f4"/>
<circle cx="702.01" cy="329.69" r="1.1" fill="#f4f4f4"/>
<circle cx="700.60" cy="326.30" r="1.1" fill="#f4f4f4"/>
<circle cx="702.01" cy="322.91" r="1.1" fill="#f4f4f4"/>
<circle cx="705.40" cy="321.50" r="1.1" fill="#f4f4f4"/>
<circle cx="708.79" cy="322.91" r="1.1" fill="#f4f4f4"/>
<rect x="697.5" y="340.5" width="15" height="8" rx="1.5" fill="#1a1a1a" stroke="#d8d8d8" stroke-width="1.1"/>
<rect x="700.0" y="343" width="2.6" height="1" fill="#d0d0d0"/>
<rect x="703.6" y="343" width="2.6" height="1" fill="#d0d0d0"/>
<rect x="707.2" y="343" width="2.6" height="1" fill="#d0d0d0"/>
<rect x="700.0" y="345" width="2.6" height="1" fill="#d0d0d0"/>
<rect x="703.6" y="345" width="2.6" height="1" fill="#d0d0d0"/>
<rect x="707.2" y="345" width="2.6" height="1" fill="#d0d0d0"/>
<rect x="701" y="346.8" width="8" height="1" fill="#d0d0d0"/>
<path d="M712.29,403.09 A7.6,7.6 0 0 1 701.04,412.53" fill="none" stroke="#ececec" stroke-width="1.4"/>
<path d="M698.51,409.51 A7.6,7.6 0 0 1 709.76,400.07" fill="none" stroke="#ececec" stroke-width="1.4"/>
<path d="M711.29,398.09 L712.79,403.39 L708.29,401.59" fill="none" stroke="#e0e0e0" stroke-width="1"/>
<path d="M699.51,414.51 L698.01,409.21 L702.51,411.01" fill="none" stroke="#e0e0e0" stroke-width="1"/>
<circle cx="705.4" cy="406.3" r="4.8" fill="#505050"/>
<circle cx="705.4" cy="406.3" r="2.8" fill="#2a2a2a"/>
<circle cx="710.20" cy="406.30" r="1.1" fill="#f4f4f4"/>
<circle cx="708.79" cy="409.69" r="1.1" fill="#f4f4f4"/>
<circle cx="705.40" cy="411.10" r="1.1" fill="#f4f4f4"/>
<circle cx="702.01" cy="409.69" r="1.1" fill="#f4f4f4"/>
<circle cx="700.60" cy="406.30" r="1.1" fill="#f4f4f4"/>
<circle cx="702.01" cy="402.91" r="1.1" fill="#f4f4f4"/>
<circle cx="705.40" cy="401.50" r="1.1" fill="#f4f4f4"/>
<circle cx="708.79" cy="402.91" r="1.1" fill="#f4f4f4"/>
<rect x="697.5" y="420.5" width="15" height="8" rx="1.5" fill="#1a1a1a" stroke="#d8d8d8" stroke-width="1.1"/>
<rect x="700.0" y="423" width="2.6" height="1" fill="#d0d0d0"/>
<rect x="703.6" y="423" width="2.6" height="1" fill="#d0d0d0"/>
<rect x="707.2" y="423" width="2.6" height="1" fill="#d0d0d0"/>
<rect x="700.0" y="425" width="2.6" height="1" fill="#d0d0d0"/>
<rect x="703.6" y="425" width="2.6" height="1" fill="#d0d0d0"/>
<rect x="707.2" y="425" width="2.6" height="1" fill="#d0d0d0"/>
<rect x="701" y="426.8" width="8" height="1" fill="#d0d0d0"/>
<circle cx="740" cy="439" r="3.6" fill="#d4d4d4"/>
<circle cx="752" cy="439" r="3.6" fill="#666"/>
</svg>
<div class="a" style="left:44px;top:445px;width:760px;height:38px;background:#1c1c1c;"></div>
<div class="a" style="left:44px;top:445px;width:650px;height:2px;background:#000;"></div>
<div class="a" style="left:44px;top:447px;width:757px;height:2px;background:#5e5e5e;"></div>
<div class="a" style="left:44px;top:479px;width:757px;height:1px;background:#5e5e5e;"></div>
<div class="a" style="left:0;top:480px;width:804px;height:3px;background:#1e1e1e;"></div>
<div class="a" style="left:45px;top:449px;width:27px;height:30px;background:#3a3a3a;border:2px solid #707070;border-bottom-width:1px;"></div><div class="t" style="left:45px;top:456px;width:27px;text-align:center;color:#1fb8c4;font-size:18px;font-weight:bold;">1</div><div class="a" style="left:72px;top:449px;width:143px;height:30px;background:#111;border-right:1px solid #4a4a4a;"></div><div class="t" style="left:69.5px;top:458px;width:143px;text-align:center;color:#f4f4f4;font-size:14px;transform:scaleX(0.94);">OFF</div>
<div class="a" style="left:215px;top:449px;width:168px;height:30px;background:#f2c22a;"></div><div class="a" style="left:217px;top:451px;width:23px;height:26px;background:#f6c41a;border-right:1px solid #6a5000;border-bottom:1px solid #a88000;"></div><div class="t" style="left:217px;top:456px;width:22px;text-align:center;color:#111;font-size:18px;">2</div><div class="a" style="left:241px;top:451px;width:140px;height:26px;background:#111;"></div>
<div class="t" style="left:256px;top:459px;color:#f4f4f4;font-size:13px;">1.00V 1.000X</div>
<svg class="a" style="left:0;top:0" width="804" height="483" shape-rendering="crispEdges">
<rect x="244" y="462" width="11" height="2" fill="#e0e0e0"/>
<rect x="244" y="465" width="2" height="1" fill="#e0e0e0"/><rect x="247" y="465" width="2" height="1" fill="#e0e0e0"/><rect x="250" y="465" width="2" height="1" fill="#e0e0e0"/><rect x="253" y="465" width="2" height="1" fill="#e0e0e0"/>
</svg>
<div class="a" style="left:384px;top:449px;width:26px;height:30px;background:#3a3a3a;border:2px solid #707070;border-bottom-width:1px;"></div><div class="t" style="left:384px;top:456px;width:26px;text-align:center;color:#22a022;font-size:18px;font-weight:bold;">3</div><div class="a" style="left:410px;top:449px;width:145px;height:30px;background:#111;border-right:1px solid #4a4a4a;"></div><div class="t" style="left:407.5px;top:458px;width:145px;text-align:center;color:#f4f4f4;font-size:14px;transform:scaleX(0.94);">OFF</div>
<div class="a" style="left:554px;top:449px;width:26px;height:30px;background:#3a3a3a;border:2px solid #707070;border-bottom-width:1px;"></div><div class="t" style="left:554px;top:456px;width:26px;text-align:center;color:#a822c8;font-size:18px;font-weight:bold;">4</div><div class="a" style="left:580px;top:449px;width:141px;height:30px;background:#111;border-right:1px solid #4a4a4a;"></div><div class="t" style="left:577.5px;top:458px;width:141px;text-align:center;color:#f4f4f4;font-size:14px;transform:scaleX(0.94);">OFF</div>
<div class="a" style="left:722px;top:449px;width:21px;height:28px;background:#050505;"></div>
<svg class="a" style="left:0;top:0" width="804" height="483">
<path d="M733,452.5 L730.8,456 H735.2 Z" fill="#eee"/>
<rect x="732.3" y="455" width="1.4" height="15" fill="#eee"/>
<path d="M728.8,461 Q728.8,465 733,468" fill="none" stroke="#e6e6e6" stroke-width="1.3"/>
<path d="M737,459 Q737,463 733,466" fill="none" stroke="#e6e6e6" stroke-width="1.3"/>
<circle cx="728.8" cy="460.8" r="1.7" fill="#eee"/>
<circle cx="737" cy="458.6" r="1.7" fill="#eee"/>
<circle cx="733" cy="470.8" r="2.3" fill="#eee"/>
</svg>
<div class="a" style="left:744px;top:449px;width:57px;height:30px;background:#4a4a4a;"></div>
<div class="a" style="left:744px;top:450px;width:55px;height:12px;background:#1c1c1c;"></div>
<div class="a" style="left:744px;top:464px;width:55px;height:14px;background:#0c0c0c;"></div>
<div class="a" style="left:800px;top:447px;width:1px;height:33px;background:#6a6a6a;"></div>
<div class="t" style="left:744px;top:452px;width:56px;text-align:center;color:#f0f0f0;font-size:11px;">09:25</div>
<div class="t" style="left:743px;top:467px;width:58px;text-align:center;color:#f0f0f0;font-size:11px;">2022/10/15</div>
<div class="a" style="left:1px;top:438px;width:44px;height:43px;background:#151515;"></div>
<div class="a" style="left:2px;top:439px;width:42px;height:41px;background:linear-gradient(#585858,#3c3c3c);border:1px solid #6e6e6e;border-right-color:#4a4a4a;border-bottom-color:#3a3a3a;border-radius:2px;"></div>
<svg class="a" style="left:0;top:0" width="804" height="483">
<g fill="none" stroke="#9a9a9a" stroke-width="1.2">
<rect x="11.5" y="448.5" width="9" height="9" rx="1"/>
<circle cx="29.5" cy="453" r="4.5"/>
<rect x="11.5" y="461.5" width="9" height="9" rx="1"/>
<rect x="24.5" y="461.5" width="9" height="9" rx="1"/>
</g></svg>
</body></html>
